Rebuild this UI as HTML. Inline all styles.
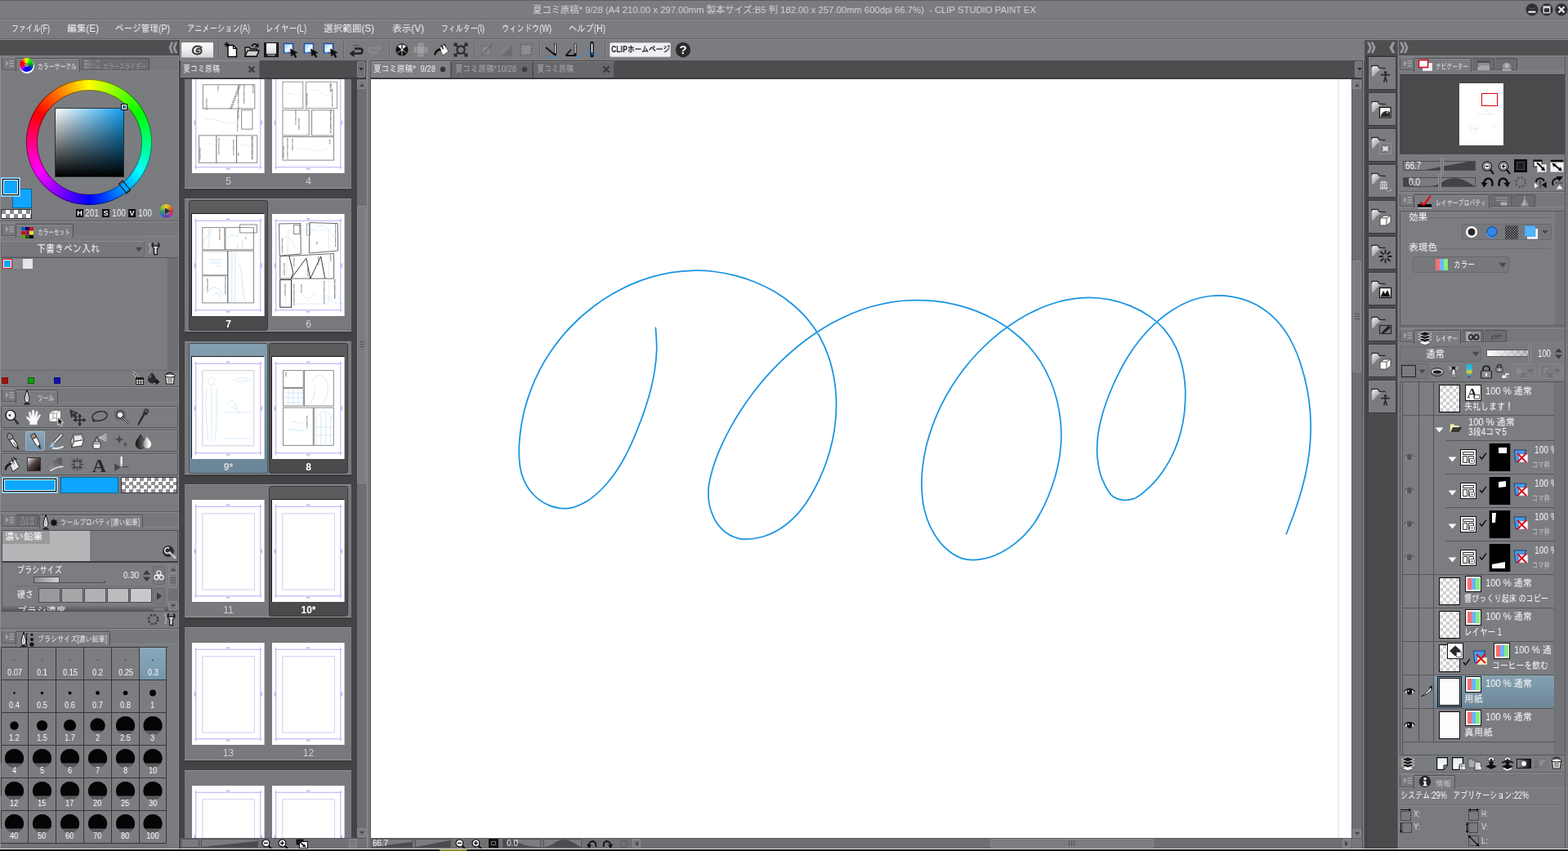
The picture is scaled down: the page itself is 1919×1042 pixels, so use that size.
<!DOCTYPE html>
<html lang="ja"><head><meta charset="utf-8"><title>CLIP STUDIO PAINT EX</title><style>
html,body{margin:0;padding:0;}
body{width:1919px;height:1042px;overflow:hidden;background:#7a7b7f;position:relative;font-family:"Liberation Sans","IPAGothic","Noto Sans CJK JP",sans-serif;}
body div,body svg{position:absolute;box-sizing:border-box;}
.t{white-space:nowrap;line-height:1;will-change:transform;}
.svgt{will-change:transform;}
.g{font-family:"Liberation Sans","IPAGothic","Noto Sans CJK JP",sans-serif;}
.n{font-family:"Liberation Sans","Noto Sans CJK JP",sans-serif;}
</style></head><body>
<div style="left:0px;top:0px;width:1919px;height:1px;background:#5d5e61;"></div>
<div style="left:0px;top:1px;width:1919px;height:23px;background:#7b7c80;"></div>
<div style="left:0px;top:23px;width:1919px;height:1px;background:#66676a;"></div>
<div style="left:0px;top:24px;width:1919px;height:1px;background:#8d8e92;"></div>
<div style="left:0px;top:25px;width:1919px;height:22px;background:#7b7c80;"></div>
<div style="left:0px;top:47px;width:1919px;height:1px;background:#636467;"></div>
<div style="left:0px;top:48px;width:1919px;height:1px;background:#8a8b8f;"></div>
<div style="left:0px;top:49px;width:1919px;height:25px;background:#7b7c80;"></div>
<div class="t n" style="left:652px;top:7px;font-size:11.5px;color:#d6d6d8;transform:scaleX(0.9810);transform-origin:0 0;">夏コミ原稿* 9/28 (A4 210.00 x 297.00mm 製本サイズ:B5 判 182.00 x 257.00mm 600dpi 66.7%)&nbsp; - CLIP STUDIO PAINT EX</div>
<svg style="left:1866px;top:3px;" width="18" height="18" viewBox="0 0 18 18"><circle cx="9" cy="8.8" r="7.5" fill="#2c2c2e" stroke="#58595c" stroke-width="0.8"/><rect x="4.5" y="10.4" width="9" height="2.4" fill="#e4e4e4"/><path d="M4.6 6.6 C7 7.6 11 7.6 13.4 6.6" stroke="#6a6b6e" stroke-width="0.8" fill="none"/></svg>
<svg style="left:1884px;top:3px;" width="18" height="18" viewBox="0 0 18 18"><circle cx="9" cy="8.8" r="7.5" fill="#2c2c2e" stroke="#58595c" stroke-width="0.8"/><rect x="5.2" y="5" width="7.6" height="7.6" fill="none" stroke="#d8d8d8" stroke-width="1.5"/><rect x="5.2" y="5" width="7.6" height="2.2" fill="#d8d8d8"/></svg>
<svg style="left:1902px;top:3px;" width="18" height="18" viewBox="0 0 18 18"><circle cx="9" cy="8.8" r="7.5" fill="#2c2c2e" stroke="#58595c" stroke-width="0.8"/><path d="M5.4 5.2 L12.6 12.4 M12.6 5.2 L5.4 12.4" stroke="#e0e0e0" stroke-width="2.2" stroke-linecap="butt"/></svg>
<div class="t g" style="left:14px;top:29px;font-size:12px;color:#f2f2f2;transform:scaleX(0.7422);transform-origin:0 0;">ファイル(F)</div>
<div class="t g" style="left:82px;top:29px;font-size:12px;color:#f2f2f2;transform:scaleX(0.9750);transform-origin:0 0;">編集(E)</div>
<div class="t g" style="left:141px;top:29px;font-size:12px;color:#f2f2f2;transform:scaleX(0.8816);transform-origin:0 0;">ページ管理(P)</div>
<div class="t g" style="left:229px;top:29px;font-size:12px;color:#f2f2f2;transform:scaleX(0.7700);transform-origin:0 0;">アニメーション(A)</div>
<div class="t g" style="left:325px;top:29px;font-size:12px;color:#f2f2f2;transform:scaleX(0.7978);transform-origin:0 0;">レイヤー(L)</div>
<div class="t g" style="left:396px;top:29px;font-size:12px;color:#f2f2f2;transform:scaleX(0.9688);transform-origin:0 0;">選択範囲(S)</div>
<div class="t g" style="left:480px;top:29px;font-size:12px;color:#f2f2f2;transform:scaleX(0.9750);transform-origin:0 0;">表示(V)</div>
<div class="t g" style="left:540px;top:29px;font-size:12px;color:#f2f2f2;transform:scaleX(0.7430);transform-origin:0 0;">フィルター(I)</div>
<div class="t g" style="left:614px;top:29px;font-size:12px;color:#f2f2f2;transform:scaleX(0.7690);transform-origin:0 0;">ウィンドウ(W)</div>
<div class="t g" style="left:696px;top:29px;font-size:12px;color:#f2f2f2;transform:scaleX(0.8543);transform-origin:0 0;">ヘルプ(H)</div>
<div style="left:0px;top:49px;width:218px;height:19px;background:#4e4e51;"></div>
<div style="left:218px;top:49px;width:1px;height:19px;background:#3c3c3e;"></div>
<div style="left:0px;top:68px;width:220px;height:1px;background:#8a8b8f;"></div>
<svg style="left:206px;top:51px;" width="13" height="15" viewBox="0 0 13 15"><path d="M6.4 0.5 H3.4 L0.4 7.5 L3.4 14 H6.4 L3.4 7.5 Z M11.4 0.5 H8.4 L5.4 7.5 L8.4 14 H11.4 L8.4 7.5 Z" fill="#97989c"/></svg>
<div style="left:219px;top:49px;width:1px;height:25px;background:#5a5b5e;"></div>
<div style="left:219px;top:74px;width:2px;height:965px;background:#444447;"></div>
<div style="left:220px;top:49px;width:1px;height:25px;background:#8e8f93;"></div>
<div style="left:222px;top:52px;width:39px;height:19px;background:linear-gradient(#fdfdfd,#ececee 55%,#d4d4d7);border-bottom:1px solid #a4a5a8;border-radius:1px;"></div>
<svg style="left:231px;top:53px;" width="22" height="16" viewBox="0 0 22 16"><path d="M15.5 5.2 C13 2.2 6.5 3 5 7.5 C3.8 11.5 8 14.5 12.5 13 C16.5 11.6 16.6 7.2 13 6.6 C10.2 6.2 8.6 8.6 9.8 10 C10.8 11 12.2 10.4 12.4 9.4" stroke="#3a3a3c" stroke-width="2" fill="none" stroke-linecap="round"/></svg>
<div style="left:267px;top:51px;width:1px;height:21px;background:#66676a;"></div>
<div style="left:268px;top:51px;width:1px;height:21px;background:#88898d;"></div>
<div style="left:420px;top:51px;width:1px;height:21px;background:#66676a;"></div>
<div style="left:421px;top:51px;width:1px;height:21px;background:#88898d;"></div>
<div style="left:476px;top:51px;width:1px;height:21px;background:#66676a;"></div>
<div style="left:477px;top:51px;width:1px;height:21px;background:#88898d;"></div>
<div style="left:580px;top:51px;width:1px;height:21px;background:#66676a;"></div>
<div style="left:581px;top:51px;width:1px;height:21px;background:#88898d;"></div>
<div style="left:660px;top:51px;width:1px;height:21px;background:#66676a;"></div>
<div style="left:661px;top:51px;width:1px;height:21px;background:#88898d;"></div>
<div style="left:740px;top:51px;width:1px;height:21px;background:#66676a;"></div>
<div style="left:741px;top:51px;width:1px;height:21px;background:#88898d;"></div>
<svg style="left:274px;top:51px;" width="18" height="20" viewBox="0 0 18 20"><path d="M5 4.5 H11.5 L15.5 8.5 V18.5 H5 Z" fill="#fff" stroke="#000" stroke-width="1.4"/><path d="M11.5 4.5 V8.5 H15.5" fill="none" stroke="#000" stroke-width="1.2"/><path d="M3.5 0.5 V6.5 M0.5 3.5 H6.5 M1.4 1.4 L5.6 5.6 M5.6 1.4 L1.4 5.6" stroke="#000" stroke-width="1"/></svg>
<svg style="left:298px;top:51px;" width="20" height="20" viewBox="0 0 20 20"><path d="M2 18 V7 H7 L8.5 9 H16 V18 Z" fill="#b8b8ba" stroke="#111" stroke-width="1.4"/><path d="M2 18 L5 11 H19 L16 18 Z" fill="#d0d0d2" stroke="#111" stroke-width="1.4"/><path d="M10 5.5 C11.5 2.5 15 2 17 4.5" stroke="#111" stroke-width="1.8" fill="none"/><path d="M18.6 1.8 V6.8 H13.6 Z" fill="#111"/></svg>
<svg style="left:322px;top:51px;" width="20" height="20" viewBox="0 0 20 20"><rect x="1.5" y="1.5" width="17" height="17" fill="#1c1c1e" stroke="#111" stroke-width="1"/><rect x="4" y="2" width="12" height="12.5" fill="#fff"/><rect x="4" y="2" width="12" height="12.5" fill="url(#svg1)"/><rect x="5.5" y="15.5" width="9" height="2" fill="#8a8a8c"/><defs><linearGradient id="svg1" x1="0" y1="0" x2="0" y2="1"><stop offset="0" stop-color="#fff"/><stop offset="1" stop-color="#d8dade"/></linearGradient></defs></svg>
<svg style="left:346px;top:51px;" width="20" height="20" viewBox="0 0 20 20"><rect x="1.5" y="2.5" width="11" height="11" fill="#dff" stroke="#1f4fb0" stroke-width="1.6"/><rect x="3" y="4" width="8" height="8" fill="url(#ex346)"/><rect x="3" y="12" width="3" height="1.6" fill="#9cf"/><path d="M9.5 9 L18 13.5 L14.6 14.6 L17 18.6 L15.4 19.5 L13 15.5 L10.6 18 Z" fill="#111" stroke="#111" stroke-width="0.6"/><defs><linearGradient id="ex346" x1="0" y1="0" x2="1" y2="1"><stop offset="0" stop-color="#8fd8e8"/><stop offset="0.6" stop-color="#f4fbff"/><stop offset="1" stop-color="#e6a0c0"/></linearGradient></defs></svg>
<svg style="left:371px;top:51px;" width="20" height="20" viewBox="0 0 20 20"><rect x="1.5" y="2.5" width="11" height="11" fill="#dff" stroke="#1f4fb0" stroke-width="1.6"/><rect x="3" y="4" width="8" height="8" fill="url(#ex371)"/><rect x="3" y="12" width="3" height="1.6" fill="#9cf"/><path d="M9.5 9 L18 13.5 L14.6 14.6 L17 18.6 L15.4 19.5 L13 15.5 L10.6 18 Z" fill="#111" stroke="#111" stroke-width="0.6"/><defs><linearGradient id="ex371" x1="0" y1="0" x2="1" y2="1"><stop offset="0" stop-color="#8fd8e8"/><stop offset="0.6" stop-color="#f4fbff"/><stop offset="1" stop-color="#e6a0c0"/></linearGradient></defs></svg>
<svg style="left:395px;top:51px;" width="20" height="20" viewBox="0 0 20 20"><rect x="1.5" y="2.5" width="11" height="11" fill="#dff" stroke="#1f4fb0" stroke-width="1.6"/><rect x="3" y="4" width="8" height="8" fill="url(#ex395)"/><rect x="3" y="12" width="3" height="1.6" fill="#9cf"/><path d="M9.5 9 L18 13.5 L14.6 14.6 L17 18.6 L15.4 19.5 L13 15.5 L10.6 18 Z" fill="#111" stroke="#111" stroke-width="0.6"/><defs><linearGradient id="ex395" x1="0" y1="0" x2="1" y2="1"><stop offset="0" stop-color="#8fd8e8"/><stop offset="0.6" stop-color="#f4fbff"/><stop offset="1" stop-color="#e6a0c0"/></linearGradient></defs></svg>
<svg style="left:426px;top:52px;" width="20" height="18" viewBox="0 0 20 18"><path d="M8 7.5 H14.5 C18.5 7.5 18.5 13.5 14.5 13.5 H6.5" stroke="#222" stroke-width="2.6" fill="none"/><path d="M1.5 13.5 L7.5 9 V18 Z" fill="#222"/><path d="M6 3.6 H13" stroke="#333" stroke-width="1" stroke-dasharray="1 1"/></svg>
<svg style="left:449px;top:52px;" width="20" height="18" viewBox="0 0 20 18"><path d="M12 7.5 H5.5 C1.5 7.5 1.5 13.5 5.5 13.5 H13.5" stroke="#88898c" stroke-width="2.6" fill="none" transform="translate(0,-1)"/><path d="M18.5 6.5 L12.5 2 V11 Z" fill="#88898c"/><path d="M5 15.6 H12" stroke="#88898c" stroke-width="1" stroke-dasharray="1 1"/></svg>
<svg style="left:483px;top:52px;" width="18" height="18" viewBox="0 0 18 18"><circle cx="9" cy="9" r="7.6" fill="#111"/><path d="M9 9 L3.4 5 A6.9 6.9 0 0 1 9 2.1 Z M9 9 L14.6 5 A6.9 6.9 0 0 0 9 2.1 Z" fill="#f4f4f4" stroke="#111" stroke-width="0.8"/><path d="M9 9 L3.2 12.8 M9 9 L14.8 12.8 M9 9 V16" stroke="#bbb" stroke-width="0.9"/><circle cx="9" cy="9" r="1.4" fill="#ddd"/></svg>
<svg style="left:506px;top:52px;" width="18" height="18" viewBox="0 0 18 18"><rect x="4.5" y="4.5" width="9" height="9" fill="#a0a1a4"/><rect x="5.5" y="0.5" width="7" height="3" fill="#97989b"/><rect x="5.5" y="14.5" width="7" height="3" fill="#97989b"/><rect x="0.5" y="5.5" width="3" height="7" fill="#97989b"/><rect x="14.5" y="5.5" width="3" height="7" fill="#97989b"/></svg>
<svg style="left:530px;top:51px;" width="20" height="20" viewBox="0 0 20 20"><path d="M7.5 7.5 L14 4 L19 12 L12 17 Z" fill="#f6f6f6" stroke="#333" stroke-width="0.8"/><path d="M1 16 C2 11 5 8.5 9 8 L10 10.5 C6 11 4 13 3 16.5 Z" fill="#111"/><path d="M10 4 L12.5 9" stroke="#222" stroke-width="1.6"/><path d="M13.5 2 L16 6" stroke="#222" stroke-width="1"/></svg>
<svg style="left:555px;top:52px;" width="18" height="18" viewBox="0 0 18 18"><circle cx="9" cy="9" r="4.6" fill="none" stroke="#2c2c2e" stroke-width="2.2"/><path d="M2.2 2.2 L6 6 M15.8 2.2 L12 6 M2.2 15.8 L6 12 M15.8 15.8 L12 12" stroke="#2c2c2e" stroke-width="2.2"/><path d="M0.5 0.5 h4.2 v2 h-2.2 v2.2 h-2 Z M17.5 0.5 h-4.2 v2 h2.2 v2.2 h2 Z M0.5 17.5 h4.2 v-2 h-2.2 v-2.2 h-2 Z M17.5 17.5 h-4.2 v-2 h2.2 v-2.2 h2 Z" fill="#2c2c2e"/></svg>
<svg style="left:587px;top:52px;" width="18" height="18" viewBox="0 0 18 18"><rect x="2.5" y="4.5" width="11" height="11" fill="#858689" stroke="#68696c" stroke-width="1" stroke-dasharray="2 1"/><path d="M2 16 L16 2" stroke="#68696c" stroke-width="1.4"/></svg>
<svg style="left:611px;top:52px;" width="18" height="18" viewBox="0 0 18 18"><rect x="2.5" y="3.5" width="13" height="13" fill="#7f8084" stroke="#737477" stroke-width="1"/><path d="M15.5 3.5 V16.5 H2.5 Z" fill="#6c6d70"/></svg>
<svg style="left:635px;top:52px;" width="18" height="18" viewBox="0 0 18 18"><rect x="2.5" y="2.5" width="13" height="13" fill="#8d8e91" stroke="#66676a" stroke-width="2" stroke-dasharray="2 1.4"/></svg>
<svg style="left:666px;top:51px;" width="20" height="20" viewBox="0 0 20 20"><path d="M2 7 L14 17" stroke="#111" stroke-width="1.8"/><path d="M13.5 2 V16.5" stroke="#111" stroke-width="3"/><path d="M13.5 2.5 V14" stroke="#fff" stroke-width="1.2"/><path d="M2 18.5 H16" stroke="#2d8fe0" stroke-width="1.6" stroke-dasharray="2 1.4"/></svg>
<svg style="left:690px;top:51px;" width="20" height="20" viewBox="0 0 20 20"><path d="M2.5 17 L9 9.5 M2.5 17 H15" stroke="#111" stroke-width="1.8" fill="none"/><path d="M14 2.5 V17" stroke="#111" stroke-width="3"/><path d="M14 3 V14" stroke="#fff" stroke-width="1.2"/><path d="M15 18.5 H18" stroke="#2d8fe0" stroke-width="1.6"/></svg>
<svg style="left:714px;top:51px;" width="20" height="20" viewBox="0 0 20 20"><path d="M10.5 2 V17" stroke="#111" stroke-width="4.4" stroke-linecap="round"/><path d="M10.5 3 V13" stroke="#fff" stroke-width="1.6" stroke-linecap="round"/><path d="M7 4 V18 M3 15.5 H17" stroke="#2d8fe0" stroke-width="1.4" stroke-dasharray="2 1.4"/></svg>
<div style="left:746px;top:52px;width:75px;height:18px;background:#eef0f5;border:1px solid #c9cbd0;border-radius:2px;"></div>
<div class="t g" style="left:748px;top:55px;font-size:10.5px;color:#1c1c1e;transform:scaleX(0.8283);transform-origin:0 0;font-weight:bold;">CLIPホームページ</div>
<svg class="svgt" style="left:826px;top:51px;" width="20" height="20" viewBox="0 0 20 20"><circle cx="10" cy="10" r="9.2" fill="#2b2b2d"/><text x="10" y="15.4" font-family="Liberation Sans,sans-serif" font-weight="bold" font-size="15" fill="#fff" text-anchor="middle">?</text></svg>
<div style="left:0px;top:69px;width:1px;height:970px;background:#909195;"></div>
<div style="left:218px;top:69px;width:1px;height:970px;background:#85868a;"></div>
<div style="left:1px;top:69px;width:217px;height:17px;background:#77787c;"></div>
<div style="left:1px;top:86px;width:217px;height:1px;background:#85868a;"></div>
<div style="left:2px;top:70px;width:17px;height:16px;background:#77787c;border-left:1px solid #5a5b5e;border-bottom:1px solid #5a5b5e;border-top:1px solid #8a8b8f;"></div>
<svg style="left:6px;top:73px;" width="12" height="10" viewBox="0 0 12 10"><path d="M1 1 L4.6 4.6 L1 8.4 Z" fill="#a2a3a6"/><path d="M5.5 1.8 H11 M5.5 4.8 H11 M5.5 7.8 H11" stroke="#a2a3a6" stroke-width="1.5"/></svg>
<div style="left:19px;top:71px;width:79px;height:17px;background:#7b7c80;border-top:1px solid #505154;border-left:1px solid #505154;border-right:1px solid #505154;border-radius:2px 2px 0 0;"></div>
<div style="left:20px;top:72px;width:77px;height:1px;background:#8c8d91;"></div>
<div class="t g" style="left:46px;top:77px;font-size:10px;color:#e9e9ea;transform:scaleX(0.6857);transform-origin:0 0;">カラーサークル</div>
<div style="left:99px;top:71px;width:84px;height:15px;background:#6c6d71;border-top:1px solid #505154;border-right:1px solid #505154;border-bottom:1px solid #58595c;border-radius:2px 2px 0 0;"></div>
<div class="t g" style="left:126px;top:77px;font-size:10px;color:#98999c;transform:scaleX(0.6625);transform-origin:0 0;">カラースライダー</div>
<div style="left:24px;top:72px;width:18px;height:18px;border-radius:50%;background:#fff;"></div>
<div style="left:24px;top:71px;width:17px;height:17px;border-radius:50%;background:conic-gradient(from 0deg,#ff0,#0f0,#0a0 22%,#00f 40%,#00f 55%,#c0f 65%,#f00 75%,#f00 85%,#fa0 93%,#ff0);"></div>
<div style="left:30px;top:77px;width:5px;height:5px;border-radius:50%;background:#8a8b90;"></div>
<div style="left:103px;top:73px;width:19px;height:3px;background:linear-gradient(90deg,#8e8f92,#6a6b6e 60%,#85868a);"></div>
<div style="left:103px;top:77px;width:19px;height:3px;background:linear-gradient(90deg,#8e8f92,#77787b 60%,#6a6b6e);"></div>
<div style="left:103px;top:81px;width:19px;height:3px;background:linear-gradient(90deg,#8e8f92,#707174 60%,#85868a);"></div>
<div style="left:32px;top:97px;width:154px;height:154px;border-radius:50%;background:conic-gradient(from 0deg,#ffff00,#00ff00 16.667%,#00ffff 33.333%,#0000ff 50%,#ff00ff 66.667%,#ff0000 83.333%,#ffff00);box-shadow:inset 0 0 0 1px rgba(0,0,0,.5);"></div>
<div style="left:45.5px;top:110.5px;width:127px;height:127px;border-radius:50%;background:#7b7c80;box-shadow:0 0 0 1px rgba(0,0,0,.5);"></div>
<div style="left:67px;top:132px;width:85px;height:85px;background:linear-gradient(to top,#000,rgba(0,0,0,0)),linear-gradient(to right,#fff,#12a0f0);border:1px solid #2a2f33;"></div>
<div style="left:148px;top:127px;width:8px;height:8px;border:1px solid #000;background:#356f8f;box-shadow:inset 0 0 0 1px #fff;"></div>
<svg style="left:140px;top:216px;" width="26" height="26" viewBox="0 0 26 26"><rect x="9.5" y="5.5" width="6" height="15" fill="none" stroke="#111" stroke-width="1" transform="rotate(-39 12.5 13)"/></svg>
<div style="left:15px;top:231px;width:24px;height:24px;background:#10a6ff;border:1px solid #0c6498;"></div>
<div style="left:1px;top:217px;width:24px;height:24px;background:#8ec9ee;"></div>
<div style="left:3px;top:219px;width:20px;height:20px;background:#10a6ff;border:1px solid #000;box-shadow:inset 0 0 0 1px #fff;"></div>
<div style="left:1px;top:256px;width:38px;height:12px;background:#fff;background-image:conic-gradient(#8a8b8e 25%,#fff 0 50%,#8a8b8e 0 75%,#fff 0);background-size:10px 10px;background-position:5px 0;border:1px solid #38383a;"></div>
<div style="left:93px;top:256px;width:9px;height:10px;background:#0a0a14;"></div>
<div class="t n" style="text-align:center;left:93px;top:256px;font-size:9px;color:#fff;width:9px;height:10px;line-height:10px;font-weight:bold;">H</div>
<div style="left:125px;top:256px;width:9px;height:10px;background:#0a0a14;"></div>
<div class="t n" style="text-align:center;left:125px;top:256px;font-size:9px;color:#fff;width:9px;height:10px;line-height:10px;font-weight:bold;">S</div>
<div style="left:157px;top:256px;width:9px;height:10px;background:#0a0a14;"></div>
<div class="t n" style="text-align:center;left:157px;top:256px;font-size:9px;color:#fff;width:9px;height:10px;line-height:10px;font-weight:bold;">V</div>
<div class="t g" style="left:104px;top:255px;font-size:12px;color:#f4f4f4;transform:scaleX(0.8487);transform-origin:0 0;">201</div>
<div class="t g" style="left:137px;top:255px;font-size:12px;color:#f4f4f4;transform:scaleX(0.8487);transform-origin:0 0;">100</div>
<div class="t g" style="left:169px;top:255px;font-size:12px;color:#f4f4f4;transform:scaleX(0.8487);transform-origin:0 0;">100</div>
<div style="left:195px;top:250px;width:17px;height:17px;border-radius:50%;background:conic-gradient(from 0deg,#e6d020,#e08020,#d03030,#b030a0,#6040c0,#3070c0,#30a060,#a0c030,#e6d020);"></div>
<div style="left:199.5px;top:254.5px;width:8px;height:8px;border-radius:50%;background:#7b7c80;"></div>
<svg style="left:200px;top:254px;" width="9" height="9" viewBox="0 0 9 9"><path d="M2 1 L8 4.5 L2 8 Z" fill="#2a2a2c"/></svg>
<div style="left:0px;top:270px;width:219px;height:1px;background:#5e5f62;"></div>
<div style="left:0px;top:271px;width:219px;height:1px;background:#8c8d91;"></div>
<div style="left:1px;top:272px;width:217px;height:17px;background:#77787c;"></div>
<div style="left:1px;top:289px;width:217px;height:1px;background:#85868a;"></div>
<div style="left:2px;top:273px;width:17px;height:16px;background:#77787c;border-left:1px solid #5a5b5e;border-bottom:1px solid #5a5b5e;border-top:1px solid #8a8b8f;"></div>
<svg style="left:6px;top:276px;" width="12" height="10" viewBox="0 0 12 10"><path d="M1 1 L4.6 4.6 L1 8.4 Z" fill="#a2a3a6"/><path d="M5.5 1.8 H11 M5.5 4.8 H11 M5.5 7.8 H11" stroke="#a2a3a6" stroke-width="1.5"/></svg>
<div style="left:19px;top:274px;width:71px;height:17px;background:#7b7c80;border-top:1px solid #505154;border-left:1px solid #505154;border-right:1px solid #505154;border-radius:2px 2px 0 0;"></div>
<div style="left:20px;top:275px;width:69px;height:1px;background:#8c8d91;"></div>
<div class="t g" style="left:46px;top:280px;font-size:10px;color:#e9e9ea;transform:scaleX(0.6667);transform-origin:0 0;">カラーセット</div>
<div style="left:26px;top:277.5px;width:4.6px;height:4.6px;background:#1050d0;"></div>
<div style="left:31px;top:277.5px;width:4.6px;height:4.6px;background:#080850;"></div>
<div style="left:36px;top:277.5px;width:4.6px;height:4.6px;background:#d01020;"></div>
<div style="left:26px;top:282.5px;width:4.6px;height:4.6px;background:#c01010;"></div>
<div style="left:31px;top:282.5px;width:4.6px;height:4.6px;background:#e02020;"></div>
<div style="left:36px;top:282.5px;width:4.6px;height:4.6px;background:#f0e020;"></div>
<div style="left:26px;top:287.5px;width:4.6px;height:4.6px;background:#60a010;"></div>
<div style="left:31px;top:287.5px;width:4.6px;height:4.6px;background:#205010;"></div>
<div style="left:36px;top:287.5px;width:4.6px;height:4.6px;background:#080808;"></div>
<div style="left:30.5px;top:282px;width:5.6px;height:5.6px;background:#3030a0;border:1px solid #f02020;"></div>
<div style="left:1px;top:295px;width:176px;height:20px;background:#77787c;border:1px solid #68696c;border-radius:3px;border-top-color:#8a8b8f;"></div>
<div class="t g" style="left:45px;top:298px;font-size:13px;color:#fafafa;transform:scaleX(0.8462);transform-origin:0 0;">下書きペン入れ</div>
<svg style="left:165px;top:302px;" width="10" height="7" viewBox="0 0 10 7"><path d="M0.5 0.8 H9.5 L5 6.2 Z" fill="#47484b"/></svg>
<svg style="left:180px;top:296px;" width="18" height="18" viewBox="0 0 18 18"><path d="M2 2 C5 4 5 9 3 14" stroke="#a8a9ac" stroke-width="2.4" fill="none" opacity="0.8"/><path d="M7.2 1.5 C5.2 3.5 5.6 7 8.6 8.2 V15.5 H12.4 V8.2 C15.4 7 15.8 3.5 13.8 1.5 V5.4 H11.8 L10.5 4.4 L9.2 5.4 H7.2 Z" fill="#d8d8da" stroke="#1e1e20" stroke-width="1.3" stroke-linejoin="round"/></svg>
<div style="left:1px;top:315px;width:217px;height:1px;background:#56575a;"></div>
<div style="left:1px;top:316px;width:204px;height:137px;background:#7c7d81;"></div>
<div style="left:205px;top:316px;width:13px;height:137px;background:#6e6f73;"></div>
<div style="left:1px;top:453px;width:217px;height:1px;background:#6a6b6e;"></div>
<div style="left:3px;top:317px;width:12px;height:12px;background:#14a6fc;border:1px solid #e01818;box-shadow:inset 0 0 0 1px #fff;"></div>
<div style="left:16px;top:317px;width:12px;height:12px;background:#8c8d90;"></div>
<div style="left:28px;top:317px;width:12px;height:12px;background:#e6e6e8;"></div>
<div style="left:2px;top:462px;width:8px;height:8px;background:#a01010;border:1px solid #801010;"></div>
<div style="left:34px;top:462px;width:8px;height:8px;background:#10a010;border:1px solid #0a600a;"></div>
<div style="left:66px;top:462px;width:8px;height:8px;background:#1010b0;border:1px solid #0a0a80;"></div>
<svg style="left:160px;top:455px;" width="16" height="16" viewBox="0 0 16 16"><path d="M2 1 C6 1 6 5 8 7" stroke="#fff" stroke-width="2.6" fill="none"/><path d="M2 1 C6 1 6 5 8 7" stroke="#111" stroke-width="1.2" fill="none"/><rect x="6.5" y="7.5" width="9" height="8" fill="#e8e8e8" stroke="#222"/><rect x="6.5" y="7.5" width="9" height="2.6" fill="#222"/><path d="M9.5 10 V15.5 M12.5 10 V15.5 M6.5 12.8 H15.5" stroke="#222" stroke-width="0.9"/></svg>
<svg style="left:180px;top:455px;" width="16" height="16" viewBox="0 0 16 16"><path d="M6 1 C9 5 11 7 11 9.5 A5 5 0 0 1 1 9.5 C1 7 3 5 6 1 Z" fill="#2a2a2c"/><path d="M3.4 8 C3.4 6.8 4.4 5.6 5.4 4.6" stroke="#888" stroke-width="1.2" fill="none"/><path d="M12 9.5 V15.5 M9 12.5 H15" stroke="#111" stroke-width="2.2"/></svg>
<svg style="left:200px;top:455px;" width="16" height="16" viewBox="0 0 16 16"><path d="M2.5 5.5 H13.5 L12.3 15 H3.7 Z" fill="#f0f0f0" stroke="#222" stroke-width="1.1"/><ellipse cx="8" cy="5" rx="6" ry="2" fill="#f4f4f4" stroke="#222" stroke-width="1.1"/><path d="M4 4 C4 0 12 0 12 4" stroke="#222" stroke-width="1.1" fill="none"/><path d="M6 8 V13.6 M8 8 V13.6 M10 8 V13.6" stroke="#555" stroke-width="1"/></svg>
<div style="left:0px;top:473px;width:219px;height:1px;background:#5e5f62;"></div>
<div style="left:0px;top:474px;width:219px;height:1px;background:#8c8d91;"></div>
<div style="left:1px;top:475px;width:217px;height:17px;background:#77787c;"></div>
<div style="left:1px;top:492px;width:217px;height:1px;background:#85868a;"></div>
<div style="left:2px;top:476px;width:17px;height:16px;background:#77787c;border-left:1px solid #5a5b5e;border-bottom:1px solid #5a5b5e;border-top:1px solid #8a8b8f;"></div>
<svg style="left:6px;top:479px;" width="12" height="10" viewBox="0 0 12 10"><path d="M1 1 L4.6 4.6 L1 8.4 Z" fill="#a2a3a6"/><path d="M5.5 1.8 H11 M5.5 4.8 H11 M5.5 7.8 H11" stroke="#a2a3a6" stroke-width="1.5"/></svg>
<div style="left:19px;top:477px;width:52px;height:17px;background:#7b7c80;border-top:1px solid #505154;border-left:1px solid #505154;border-right:1px solid #505154;border-radius:2px 2px 0 0;"></div>
<div style="left:20px;top:478px;width:50px;height:1px;background:#8c8d91;"></div>
<div class="t g" style="left:46px;top:483px;font-size:10px;color:#e9e9ea;transform:scaleX(0.6667);transform-origin:0 0;">ツール</div>
<svg style="left:28px;top:476px;" width="10" height="20" viewBox="0 0 10 20"><path d="M5 1 L7.6 10 C8.4 13 7.4 15 6.2 16.5 H3.8 C2.6 15 1.6 13 2.4 10 Z" fill="#e8e8ea" stroke="#1a1a1c" stroke-width="1"/><path d="M5 1 L5.8 4 H4.2 Z" fill="#111"/><path d="M5 8 V14" stroke="#777" stroke-width="0.8"/><path d="M1.5 18.6 H8.5" stroke="#111" stroke-width="1.6"/><path d="M3.8 16.5 H6.2 V18 H3.8 Z" fill="#333"/></svg>
<div style="left:1px;top:497px;width:217px;height:27px;background:#7c7d81;border:1px solid #5a5b5e;border-radius:2px;"></div>
<div style="left:2px;top:498px;width:215px;height:1px;background:#8a8b8f;"></div>
<div style="left:1px;top:526px;width:217px;height:27px;background:#7c7d81;border:1px solid #5a5b5e;border-radius:2px;"></div>
<div style="left:2px;top:527px;width:215px;height:1px;background:#8a8b8f;"></div>
<div style="left:1px;top:555px;width:217px;height:27px;background:#7c7d81;border:1px solid #5a5b5e;border-radius:2px;"></div>
<div style="left:2px;top:556px;width:215px;height:1px;background:#8a8b8f;"></div>
<div style="left:31px;top:528px;width:24px;height:24px;background:linear-gradient(#8aa7bb,#7594aa);border:1px solid #9ab6c8;border-radius:2px;"></div>
<svg style="left:4.0px;top:500px;" width="22" height="22" viewBox="0 0 22 22"><circle cx="9" cy="8.5" r="6" fill="#f2f2f2" stroke="#222" stroke-width="1.6"/><path d="M13.4 13 L18 18.6" stroke="#333" stroke-width="2.6" stroke-linecap="round"/><path d="M6 8.5 L9 6.8 V10.2 Z" fill="#222"/><path d="M5 5 C7 3 10 3 12 5" stroke="#fff" stroke-width="1" fill="none"/></svg>
<svg style="left:30.8px;top:500px;" width="22" height="22" viewBox="0 0 22 22"><path d="M5.5 20 V16 C3 14 1.5 12 1 10.4 C2.4 9.6 4 11 5.6 12.6 L4 5 C5 4 6.2 4.6 6.6 5.6 L8 10 L8.2 2.4 C9.4 1.6 10.6 2 10.8 3 L11.4 10 L13.4 3.6 C14.6 3.2 15.6 4 15.4 5 L14 11.4 L17.4 7.4 C18.6 7.4 19 8.6 18.4 9.4 C16.6 12 15.6 14 14.4 16.4 V20 Z" fill="#fafafa" stroke="#c8c8ca" stroke-width="0.6"/></svg>
<svg style="left:57.6px;top:500px;" width="22" height="22" viewBox="0 0 22 22"><path d="M2 6 L7 2.4 H16.4 V12.4 L11.4 16.4 H2 Z" fill="#fafafa" stroke="#6a6a6c" stroke-width="1"/><path d="M2 6 H11.4 V16.4 M11.4 6 L16.4 2.4 M7 2.4 V12 L2 16 M7 12 H16" fill="none" stroke="#8a8a8c" stroke-width="0.8"/><path d="M12.6 11 L19.6 17.4 L16.8 17.6 L18 20.6 L16.2 21.4 L15 18.4 L13 20.4 Z" fill="#0c0c0e" stroke="#fff" stroke-width="0.9"/></svg>
<svg style="left:84.4px;top:500px;" width="22" height="22" viewBox="0 0 22 22"><path d="M1.6 1.6 L11.6 6 L8 7.6 L10.4 11.2 L8.2 12.6 L5.8 9 L3.4 11.6 Z" fill="#2e2e30" stroke="#2e2e30" stroke-width="0.6"/><path d="M4 4.4 L8 6.2 M4.4 6.6 L6.2 7.6" stroke="#9a9b9e" stroke-width="0.7"/><path d="M13.6 8.6 V20.4 M7.6 14.4 H19.6" stroke="#2a2a2c" stroke-width="1.8"/><path d="M13.6 6.4 L16.2 10.2 H11 Z M13.6 22 L16.2 18.4 H11 Z M5.4 14.4 L9.2 11.8 V17 Z M21.6 14.4 L17.8 11.8 V17 Z" fill="#2a2a2c"/></svg>
<svg style="left:111.2px;top:500px;" width="22" height="22" viewBox="0 0 22 22"><ellipse cx="11" cy="9.5" rx="9.4" ry="5.6" fill="none" stroke="#2a2a2c" stroke-width="1.4" transform="rotate(-12 11 9.5)"/><path d="M3 13 C2 15 3 16.6 5 16 " stroke="#2a2a2c" stroke-width="1.2" fill="none"/></svg>
<svg style="left:138.0px;top:500px;" width="22" height="22" viewBox="0 0 22 22"><path d="M9 1 V15 M2 8 H16 M4 3 L14 13 M14 3 L4 13 M6 1.6 L12 14.4 M12 1.6 L6 14.4 M2.6 5 L15.4 11 M15.4 5 L2.6 11" stroke="#333" stroke-width="0.9"/><circle cx="9" cy="8" r="3" fill="#f4f4f4"/><path d="M11.6 10.6 L19 18" stroke="#333" stroke-width="2.4"/><path d="M12 11 L18.6 17.6" stroke="#e8e8e8" stroke-width="0.9"/></svg>
<svg style="left:164.8px;top:500px;" width="22" height="22" viewBox="0 0 22 22"><circle cx="14" cy="3.6" r="2.8" fill="#555" stroke="#222" stroke-width="0.8"/><path d="M13 6 L5 19 L4 20.6 L4.4 18.6 L11.4 5.6" fill="#ddd" stroke="#222" stroke-width="1.2"/><path d="M10.4 5 L15 7.6" stroke="#222" stroke-width="1.8"/></svg>
<svg style="left:4.0px;top:529px;" width="22" height="22" viewBox="0 0 22 22"><path d="M5.4 2.4 C7.4 1 10 1.8 11 3.6 L12 7.6 L7.4 10 L4.6 6.4 Z" fill="#8e8f92" stroke="#2a2a2c" stroke-width="1"/><path d="M7.4 10 L12 7.6 L16.6 14 L18.6 21 L12.6 17.4 Z" fill="#f8f8f8" stroke="#2a2a2c" stroke-width="1.1"/><path d="M12.4 12.6 L17.6 19.6" stroke="#2a2a2c" stroke-width="1"/><path d="M16.6 18.6 L18.6 21 L17.8 17.6 Z" fill="#111"/></svg>
<svg style="left:30.8px;top:529px;" width="22" height="22" viewBox="0 0 22 22"><path d="M6.4 3.4 L11.4 1.6 L14 6.4 L8.6 8.6 Z" fill="#8a6a50" stroke="#2a2a2c" stroke-width="1"/><path d="M7.6 3.4 L10 8 M9.6 2.6 L12 7.2" stroke="#d8c0a0" stroke-width="0.9"/><path d="M8.6 8.6 L14 6.4 L17.4 13.6 L18.4 20.6 L13.4 16 Z" fill="#fafafa" stroke="#2a2a2c" stroke-width="1"/><path d="M15.6 16.6 L18.4 20.8 L17.8 15.8 Z" fill="#111"/></svg>
<svg style="left:57.6px;top:529px;" width="22" height="22" viewBox="0 0 22 22"><path d="M17 1.6 L19.4 3.6 L9 14.6 L6.6 12.6 Z" fill="#d8d8da" stroke="#333" stroke-width="1"/><path d="M6.6 12.6 L9 14.6 C8 18 5 19.6 1.6 18.6 C3.6 17 3.6 14.6 6.6 12.6 Z" fill="#9fc6e4" stroke="#5a8ab0" stroke-width="0.8"/><path d="M6 19.6 C11 20.6 16 19.6 19.6 17.6" stroke="#e6eef4" stroke-width="2.2" fill="none" opacity="0.9"/></svg>
<svg style="left:84.4px;top:529px;" width="22" height="22" viewBox="0 0 22 22"><path d="M5.6 3.6 L16.6 2 L18.6 9.6 L6.6 11.6 Z" fill="#e6e6e8" stroke="#444" stroke-width="1"/><path d="M6.6 11.6 L18.6 9.6 L16 17 L3.6 18.6 Z" fill="#fafafa" stroke="#444" stroke-width="1"/><path d="M5.6 3.6 L6.6 11.6 L3.6 18.6 L2.6 10.6 Z" fill="#c0c0c2" stroke="#444" stroke-width="1"/><path d="M8 4.4 L16 3.4 L17 8" fill="none" stroke="#888" stroke-width="1.4"/></svg>
<svg style="left:111.2px;top:529px;" width="22" height="22" viewBox="0 0 22 22"><path d="M3 13 C3 10.6 12 10.6 12 13 V18.6 C12 21 3 21 3 18.6 Z" fill="#f2f2f2" stroke="#333" stroke-width="1"/><ellipse cx="7.5" cy="13" rx="4.5" ry="1.6" fill="#ddd" stroke="#333" stroke-width="0.8"/><rect x="5.6" y="8" width="3.8" height="4" fill="#aaa" stroke="#333" stroke-width="0.8"/><rect x="6.4" y="5" width="2.2" height="3" fill="#555"/><path d="M10 7 L19.6 1.6 L19.6 12 Z" fill="#a2a3a6" opacity="0.85"/><path d="M10 7 L19 2.6 M10 7 L19.6 7 M10 7 L19 11" stroke="#cfcfd2" stroke-width="0.8"/></svg>
<svg style="left:138.0px;top:529px;" width="22" height="22" viewBox="0 0 22 22"><path d="M8 2 C8.4 7 9.6 8.6 15 9 C9.6 9.4 8.4 11 8 16 C7.6 11 6.4 9.4 1 9 C6.4 8.6 7.6 7 8 2 Z" fill="#4a4a4c"/><path d="M15.4 11 C15.6 14 16.4 14.8 19.6 15 C16.4 15.2 15.6 16 15.4 19.6 C15.2 16 14.4 15.2 11.2 15 C14.4 14.8 15.2 14 15.4 11 Z" fill="#4a4a4c"/></svg>
<svg style="left:164.8px;top:529px;" width="22" height="22" viewBox="0 0 22 22"><path d="M7 3 C10 8 13 11 13 14.6 A6 6 0 0 1 1 14.6 C1 11 4 8 7 3 Z" fill="url(#bl1)" stroke="#222" stroke-width="0.8"/><path d="M14.6 4.6 C17 9 20.6 12 20.6 15 A5.4 5.4 0 0 1 9.8 15 C9.8 12 12.6 9 14.6 4.6 Z" fill="url(#bl2)" stroke="#555" stroke-width="0.6"/><defs><linearGradient id="bl1" x1="0" x2="1"><stop offset="0" stop-color="#111"/><stop offset="1" stop-color="#777"/></linearGradient><linearGradient id="bl2" x1="0" x2="1"><stop offset="0" stop-color="#888"/><stop offset="0.7" stop-color="#fff"/></linearGradient></defs></svg>
<svg style="left:4.0px;top:558px;" width="22" height="22" viewBox="0 0 22 22"><path d="M7 8 L14.6 4.6 L19.6 14 L11.6 19.6 Z" fill="#e4e4e6" stroke="#333" stroke-width="1"/><path d="M8.6 9.6 L14 7.2 L17.6 13.6" fill="none" stroke="#fff" stroke-width="1.2"/><path d="M1.6 17 C2 12 5 9 9.6 8.4 L10.6 10.6 C6.6 11.6 4.6 14 3.6 18 Z" fill="#1a1a1c"/><path d="M10 3 L12.6 8.6 M12 2 L16.6 4.6" stroke="#333" stroke-width="1.6"/><circle cx="12.6" cy="9" r="1.2" fill="#fff" stroke="#333" stroke-width="0.6"/></svg>
<svg style="left:30.8px;top:558px;" width="22" height="22" viewBox="0 0 22 22"><rect x="2.5" y="2.5" width="16" height="16" fill="url(#gr1)" stroke="#333" stroke-width="1"/><defs><linearGradient id="gr1" x1="0" y1="0" x2="1" y2="1"><stop offset="0" stop-color="#fff"/><stop offset="0.45" stop-color="#544"/><stop offset="1" stop-color="#000"/></linearGradient></defs></svg>
<svg style="left:57.6px;top:558px;" width="22" height="22" viewBox="0 0 22 22"><path d="M2.4 17.6 C3 9 8 3.6 17.6 2.6 C17.6 6 18 9 19 11.6 C10 12 5 14 2.4 17.6 Z" fill="url(#fg1)"/><path d="M3.6 18.6 C8 15 13 13.6 19.4 13.2" stroke="#e8e8ea" stroke-width="1.6" fill="none"/><defs><linearGradient id="fg1" x1="0" y1="1" x2="1" y2="0"><stop offset="0" stop-color="#9a9b9e"/><stop offset="0.6" stop-color="#66676a"/><stop offset="1" stop-color="#505154"/></linearGradient></defs></svg>
<svg style="left:84.4px;top:558px;" width="22" height="22" viewBox="0 0 22 22"><path d="M10.5 1.6 L11.6 7.6 H9.4 Z M10.5 19.4 L11.6 13.4 H9.4 Z M1.6 10.5 L7.6 9.4 V11.6 Z M19.4 10.5 L13.4 9.4 V11.6 Z M3.6 3.6 L8.8 7.2 L7.2 8.8 Z M17.4 3.6 L12.2 7.2 L13.8 8.8 Z M3.6 17.4 L8.8 13.8 L7.2 12.2 Z M17.4 17.4 L12.2 13.8 L13.8 12.2 Z M6.6 1.8 L9 7.4 L8 7.8 Z M14.4 1.8 L12 7.4 L13 7.8 Z M6.6 19.2 L9 13.6 L8 13.2 Z M14.4 19.2 L12 13.6 L13 13.2 Z M1.8 6.6 L7.4 9 L7.8 8 Z M19.2 6.6 L13.6 9 L13.2 8 Z M1.8 14.4 L7.4 12 L7.8 13 Z M19.2 14.4 L13.6 12 L13.2 13 Z" fill="#343436"/></svg>
<svg class="svgt" style="left:111.2px;top:558px;" width="22" height="22" viewBox="0 0 22 22"><text x="10.5" y="19.6" font-family="Liberation Serif,serif" font-size="24" font-weight="bold" fill="#2a2a2c" text-anchor="middle">A</text></svg>
<svg style="left:138.0px;top:558px;" width="22" height="22" viewBox="0 0 22 22"><path d="M2 9.6 L10 14 L2 19 Z" fill="#47484b"/><path d="M10.6 1 V13.6" stroke="#fff" stroke-width="2.2"/><path d="M9.6 13.6 H19.6" stroke="#47484b" stroke-width="1.2"/><path d="M10.6 11 V14" stroke="#aaa" stroke-width="1.6"/></svg>
<div style="left:2px;top:584px;width:69px;height:20px;background:#8ec9ee;"></div>
<div style="left:4px;top:586px;width:65px;height:16px;background:#0ea6ff;border:1px solid #000;box-shadow:inset 0 0 0 1px #fff;"></div>
<div style="left:74px;top:584px;width:71px;height:20px;background:#0ea6ff;border:1px solid #0c6498;"></div>
<div style="left:148px;top:584px;width:69px;height:20px;background:#fff;background-image:conic-gradient(#8e8f92 25%,#fff 0 50%,#8e8f92 0 75%,#fff 0);background-size:9px 9px;background-position:0 0;border:1px solid #38383a;"></div>
<div style="left:0px;top:626px;width:219px;height:1px;background:#5e5f62;"></div>
<div style="left:0px;top:627px;width:219px;height:1px;background:#8c8d91;"></div>
<div style="left:1px;top:628px;width:217px;height:17px;background:#77787c;"></div>
<div style="left:1px;top:645px;width:217px;height:1px;background:#85868a;"></div>
<div style="left:2px;top:629px;width:17px;height:16px;background:#77787c;border-left:1px solid #5a5b5e;border-bottom:1px solid #5a5b5e;border-top:1px solid #8a8b8f;"></div>
<svg style="left:6px;top:632px;" width="12" height="10" viewBox="0 0 12 10"><path d="M1 1 L4.6 4.6 L1 8.4 Z" fill="#a2a3a6"/><path d="M5.5 1.8 H11 M5.5 4.8 H11 M5.5 7.8 H11" stroke="#a2a3a6" stroke-width="1.5"/></svg>
<div style="left:19px;top:630px;width:28px;height:15px;background:#6c6d71;border-top:1px solid #505154;border-right:1px solid #505154;border-bottom:1px solid #58595c;border-radius:2px 2px 0 0;"></div>
<div style="left:48px;top:630px;width:127px;height:17px;background:#7b7c80;border-top:1px solid #505154;border-left:1px solid #505154;border-right:1px solid #505154;border-radius:2px 2px 0 0;"></div>
<div style="left:49px;top:631px;width:125px;height:1px;background:#8c8d91;"></div>
<div class="t g" style="left:74px;top:634.5px;font-size:10px;color:#e9e9ea;transform:scaleX(0.7725);transform-origin:0 0;">ツールプロパティ[濃い鉛筆]</div>
<svg style="left:24px;top:631px;" width="20" height="14" viewBox="0 0 20 14"><path d="M4 1 L6 8 V12 H2 V8 Z" fill="none" stroke="#8c8d90" stroke-width="1"/><path d="M9 2 V12 M9 4 H11 M9 10 H11" stroke="#8c8d90" stroke-width="1"/><rect x="13.5" y="2.5" width="3" height="3" fill="none" stroke="#8c8d90"/><rect x="13.5" y="8.5" width="3" height="3" fill="none" stroke="#8c8d90"/></svg>
<svg style="left:51px;top:629px;" width="10" height="20" viewBox="0 0 10 20"><path d="M5 1 L7.6 10 C8.4 13 7.4 15 6.2 16.5 H3.8 C2.6 15 1.6 13 2.4 10 Z" fill="#e8e8ea" stroke="#1a1a1c" stroke-width="1"/><path d="M5 1 L5.8 4 H4.2 Z" fill="#111"/><path d="M5 8 V14" stroke="#777" stroke-width="0.8"/><path d="M1.5 18.6 H8.5" stroke="#111" stroke-width="1.6"/><path d="M3.8 16.5 H6.2 V18 H3.8 Z" fill="#333"/></svg>
<svg style="left:61px;top:635px;" width="10" height="10" viewBox="0 0 10 10"><circle cx="5" cy="5" r="3" fill="#111"/><path d="M5 0.6 V9.4 M0.6 5 H9.4 M1.8 1.8 L8.2 8.2 M8.2 1.8 L1.8 8.2" stroke="#111" stroke-width="1.5"/></svg>
<div style="left:2px;top:649px;width:216px;height:40px;background:#7c7d81;border:1px solid #505154;border-bottom:2px solid #3e3e41;"></div>
<div style="left:3px;top:650px;width:107px;height:37px;background:#b6b6b8;"></div>
<div style="left:3px;top:650px;width:58px;height:16px;background:#9b9b9e;"></div>
<div class="t g" style="left:6px;top:651px;font-size:12px;color:#ffffff;transform:scaleX(0.9583);transform-origin:0 0;">濃い鉛筆</div>
<svg style="left:198px;top:667px;" width="18" height="20" viewBox="0 0 18 20"><circle cx="8" cy="8" r="7" fill="#2e2e30"/><circle cx="7" cy="7" r="3.4" fill="none" stroke="#eee" stroke-width="1.6" stroke-dasharray="16 6" transform="rotate(30 7 7)"/><path d="M9.6 9.6 L16 15.6" stroke="#eee" stroke-width="2.6" stroke-linecap="round"/><path d="M9.6 9.6 L16 15.6" stroke="#555" stroke-width="0.8"/></svg>
<div style="left:2px;top:690px;width:204px;height:58px;background:#7c7d81;border-left:1px solid #5a5b5e;"></div>
<div style="left:2px;top:741px;width:204px;height:7px;background:linear-gradient(rgba(90,91,94,0),rgba(80,81,84,.9));"></div>
<div class="t g" style="left:21px;top:692px;font-size:12px;color:#fcfcfc;transform:scaleX(0.7639);transform-origin:0 0;">ブラシサイズ</div>
<div class="t g" style="left:151px;top:699px;font-size:11px;color:#fafafa;transform:scaleX(0.8869);transform-origin:0 0;">0.30</div>
<svg style="left:174px;top:697px;" width="11" height="16" viewBox="0 0 11 16"><path d="M1 6.6 H10 L5.5 1 Z M1 9.4 H10 L5.5 15 Z" fill="#3a3a3c"/></svg>
<div style="left:187px;top:693px;width:15px;height:23px;background:#77787c;border:1px solid #68696c;border-radius:3px;"></div>
<svg style="left:188px;top:698px;" width="13" height="13" viewBox="0 0 13 13"><circle cx="6.5" cy="3.6" r="2.6" fill="none" stroke="#fff" stroke-width="1.1"/><circle cx="3.4" cy="9" r="2.6" fill="none" stroke="#fff" stroke-width="1.1"/><circle cx="9.6" cy="9" r="2.6" fill="none" stroke="#fff" stroke-width="1.1"/></svg>
<div style="left:41px;top:706px;width:32px;height:8px;background:linear-gradient(90deg,#8a8b8e,#d4d4d6);border:1px solid #505154;"></div>
<div style="left:41px;top:713px;width:88px;height:1px;background:#505154;"></div>
<div style="left:128px;top:711px;width:1px;height:3px;background:#505154;"></div>
<div style="left:16px;top:717px;width:172px;height:1px;background:#6e6f73;"></div>
<div class="t g" style="left:21px;top:722px;font-size:12px;color:#fcfcfc;transform:scaleX(0.8333);transform-origin:0 0;">硬さ</div>
<div style="left:47px;top:720px;width:27px;height:18px;background:#9a9a9d;border:1px solid #4e4f52;"></div>
<div style="left:75px;top:720px;width:27px;height:18px;background:#a6a6a9;border:1px solid #4e4f52;"></div>
<div style="left:103px;top:720px;width:27px;height:18px;background:#b1b1b4;border:1px solid #4e4f52;"></div>
<div style="left:131px;top:720px;width:27px;height:18px;background:#bcbcbf;border:1px solid #4e4f52;"></div>
<div style="left:159px;top:720px;width:27px;height:18px;background:#c8c8cb;border:1px solid #4e4f52;"></div>
<div style="left:187px;top:720px;width:15px;height:20px;background:#77787c;border:1px solid #68696c;border-radius:3px;"></div>
<svg style="left:191px;top:725px;" width="8" height="10" viewBox="0 0 8 10"><path d="M1 0.6 V9.4 L7 5 Z" fill="#3a3a3c"/></svg>
<div class="t g" style="left:21px;top:742px;height:6px;overflow:hidden;font-size:12px;color:#f4f4f4;position:absolute;">ブラシ濃度</div>
<div style="left:187px;top:743px;width:15px;height:6px;background:#77787c;border:1px solid #68696c;border-radius:3px 3px 0 0;border-bottom:0;"></div>
<div style="left:206px;top:690px;width:12px;height:58px;background:#707175;"></div>
<div style="left:206px;top:691px;width:11px;height:11px;background:#7b7c80;border:1px solid #8b8c90;border-radius:1px;"></div>
<svg style="left:207.5px;top:694px;" width="8" height="6" viewBox="0 0 8 6"><path d="M1 5 H7 L4 1.4 Z" fill="#47484b"/></svg>
<div style="left:206px;top:736px;width:11px;height:11px;background:#7b7c80;border:1px solid #8b8c90;border-radius:1px;"></div>
<svg style="left:207.5px;top:739px;" width="8" height="6" viewBox="0 0 8 6"><path d="M1 1 H7 L4 4.6 Z" fill="#47484b"/></svg>
<div style="left:206px;top:702px;width:11px;height:18px;background:#7b7c80;border:1px solid #8b8c90;border-radius:2px;"></div>
<svg style="left:207.5px;top:706px;" width="8" height="9" viewBox="0 0 8 9"><path d="M1 1.5 H7 M1 4.5 H7 M1 7.5 H7" stroke="#56575a" stroke-width="1.2"/></svg>
<div style="left:1px;top:748px;width:217px;height:1px;background:#56575a;"></div>
<svg style="left:179px;top:750px;" width="17" height="17" viewBox="0 0 17 17"><circle cx="8.5" cy="8.5" r="5.6" fill="none" stroke="#3e3e41" stroke-width="2.6" stroke-dasharray="2.6 1.8"/></svg>
<svg style="left:199px;top:750px;" width="18" height="18" viewBox="0 0 18 18"><path d="M2 2 C5 4 5 9 3 14" stroke="#a8a9ac" stroke-width="2.4" fill="none" opacity="0.8"/><path d="M7.2 1.5 C5.2 3.5 5.6 7 8.6 8.2 V15.5 H12.4 V8.2 C15.4 7 15.8 3.5 13.8 1.5 V5.4 H11.8 L10.5 4.4 L9.2 5.4 H7.2 Z" fill="#d8d8da" stroke="#1e1e20" stroke-width="1.3" stroke-linejoin="round"/></svg>
<div style="left:0px;top:769px;width:219px;height:1px;background:#5e5f62;"></div>
<div style="left:0px;top:770px;width:219px;height:1px;background:#8c8d91;"></div>
<div style="left:1px;top:771px;width:217px;height:17px;background:#77787c;"></div>
<div style="left:1px;top:788px;width:217px;height:1px;background:#85868a;"></div>
<div style="left:2px;top:772px;width:17px;height:16px;background:#77787c;border-left:1px solid #5a5b5e;border-bottom:1px solid #5a5b5e;border-top:1px solid #8a8b8f;"></div>
<svg style="left:6px;top:775px;" width="12" height="10" viewBox="0 0 12 10"><path d="M1 1 L4.6 4.6 L1 8.4 Z" fill="#a2a3a6"/><path d="M5.5 1.8 H11 M5.5 4.8 H11 M5.5 7.8 H11" stroke="#a2a3a6" stroke-width="1.5"/></svg>
<div style="left:19px;top:773px;width:116px;height:17px;background:#7b7c80;border-top:1px solid #505154;border-left:1px solid #505154;border-right:1px solid #505154;border-radius:2px 2px 0 0;"></div>
<div style="left:20px;top:774px;width:114px;height:1px;background:#8c8d91;"></div>
<div class="t g" style="left:46px;top:778px;font-size:10px;color:#e9e9ea;transform:scaleX(0.8052);transform-origin:0 0;">ブラシサイズ[濃い鉛筆]</div>
<svg style="left:24px;top:773px;" width="10" height="20" viewBox="0 0 10 20"><path d="M5 1 L7.6 10 C8.4 13 7.4 15 6.2 16.5 H3.8 C2.6 15 1.6 13 2.4 10 Z" fill="#e8e8ea" stroke="#1a1a1c" stroke-width="1"/><path d="M5 1 L5.8 4 H4.2 Z" fill="#111"/><path d="M5 8 V14" stroke="#777" stroke-width="0.8"/><path d="M1.5 18.6 H8.5" stroke="#111" stroke-width="1.6"/><path d="M3.8 16.5 H6.2 V18 H3.8 Z" fill="#333"/></svg>
<svg style="left:31px;top:774px;" width="12" height="18" viewBox="0 0 12 18"><path d="M3 2 H1.5 V16 H3 M1.5 9 H3" stroke="#111" stroke-width="1" fill="none"/><circle cx="8" cy="3" r="1.6" fill="#111"/><circle cx="8" cy="9" r="2" fill="#111"/><circle cx="8" cy="15" r="2.6" fill="#111"/></svg>
<div style="left:1px;top:792px;width:217px;height:247px;background:#7b7c80;"></div>
<div style="left:1px;top:792px;width:204px;height:1px;background:#38383b;"></div>
<div style="left:1px;top:793px;width:34px;height:40px;background:#7c7d81;border-right:1px solid #38383b;border-bottom:1px solid #38383b;border-left:1px solid #38383b;"></div>
<svg style="left:1px;top:793px;" width="33" height="39" viewBox="0 0 33 39"><circle cx="16.5" cy="15.5" r="0.5" fill="#050505"/></svg>
<div class="t g" style="left:8.5px;top:818px;font-size:11px;color:#ffffff;transform:scaleX(0.8403);transform-origin:0 0;">0.07</div>
<div style="left:35px;top:793px;width:34px;height:40px;background:#7c7d81;border-right:1px solid #38383b;border-bottom:1px solid #38383b;"></div>
<svg style="left:35px;top:793px;" width="33" height="39" viewBox="0 0 33 39"><circle cx="16.5" cy="15.5" r="0.5" fill="#050505"/></svg>
<div class="t g" style="left:45.1px;top:818px;font-size:11px;color:#ffffff;transform:scaleX(0.8368);transform-origin:0 0;">0.1</div>
<div style="left:69px;top:793px;width:34px;height:40px;background:#7c7d81;border-right:1px solid #38383b;border-bottom:1px solid #38383b;"></div>
<svg style="left:69px;top:793px;" width="33" height="39" viewBox="0 0 33 39"><circle cx="16.5" cy="15.5" r="0.5" fill="#050505"/></svg>
<div class="t g" style="left:76.5px;top:818px;font-size:11px;color:#ffffff;transform:scaleX(0.8403);transform-origin:0 0;">0.15</div>
<div style="left:103px;top:793px;width:34px;height:40px;background:#7c7d81;border-right:1px solid #38383b;border-bottom:1px solid #38383b;"></div>
<svg style="left:103px;top:793px;" width="33" height="39" viewBox="0 0 33 39"><circle cx="16.5" cy="15.5" r="0.6" fill="#050505"/></svg>
<div class="t g" style="left:113.1px;top:818px;font-size:11px;color:#ffffff;transform:scaleX(0.8368);transform-origin:0 0;">0.2</div>
<div style="left:137px;top:793px;width:34px;height:40px;background:#7c7d81;border-right:1px solid #38383b;border-bottom:1px solid #38383b;"></div>
<svg style="left:137px;top:793px;" width="33" height="39" viewBox="0 0 33 39"><circle cx="16.5" cy="15.5" r="0.6" fill="#050505"/></svg>
<div class="t g" style="left:144.5px;top:818px;font-size:11px;color:#ffffff;transform:scaleX(0.8403);transform-origin:0 0;">0.25</div>
<div style="left:171px;top:793px;width:33px;height:40px;background:linear-gradient(#8aa8bc,#7796ab);border-right:1px solid #38383b;border-bottom:1px solid #38383b;"></div>
<svg style="left:171px;top:793px;" width="32" height="39" viewBox="0 0 32 39"><circle cx="16.0" cy="15.5" r="0.7" fill="#050505"/></svg>
<div class="t g" style="left:180.6px;top:818px;font-size:11px;color:#ffffff;transform:scaleX(0.8368);transform-origin:0 0;">0.3</div>
<div style="left:1px;top:833px;width:34px;height:40px;background:#7c7d81;border-right:1px solid #38383b;border-bottom:1px solid #38383b;border-left:1px solid #38383b;"></div>
<svg style="left:1px;top:833px;" width="33" height="39" viewBox="0 0 33 39"><circle cx="16.5" cy="15.5" r="1.3" fill="#050505"/></svg>
<div class="t g" style="left:11.1px;top:858px;font-size:11px;color:#ffffff;transform:scaleX(0.8368);transform-origin:0 0;">0.4</div>
<div style="left:35px;top:833px;width:34px;height:40px;background:#7c7d81;border-right:1px solid #38383b;border-bottom:1px solid #38383b;"></div>
<svg style="left:35px;top:833px;" width="33" height="39" viewBox="0 0 33 39"><circle cx="16.5" cy="15.5" r="1.7" fill="#050505"/></svg>
<div class="t g" style="left:45.1px;top:858px;font-size:11px;color:#ffffff;transform:scaleX(0.8368);transform-origin:0 0;">0.5</div>
<div style="left:69px;top:833px;width:34px;height:40px;background:#7c7d81;border-right:1px solid #38383b;border-bottom:1px solid #38383b;"></div>
<svg style="left:69px;top:833px;" width="33" height="39" viewBox="0 0 33 39"><circle cx="16.5" cy="15.5" r="2.0" fill="#050505"/></svg>
<div class="t g" style="left:79.1px;top:858px;font-size:11px;color:#ffffff;transform:scaleX(0.8368);transform-origin:0 0;">0.6</div>
<div style="left:103px;top:833px;width:34px;height:40px;background:#7c7d81;border-right:1px solid #38383b;border-bottom:1px solid #38383b;"></div>
<svg style="left:103px;top:833px;" width="33" height="39" viewBox="0 0 33 39"><circle cx="16.5" cy="15.5" r="2.4" fill="#050505"/></svg>
<div class="t g" style="left:113.1px;top:858px;font-size:11px;color:#ffffff;transform:scaleX(0.8368);transform-origin:0 0;">0.7</div>
<div style="left:137px;top:833px;width:34px;height:40px;background:#7c7d81;border-right:1px solid #38383b;border-bottom:1px solid #38383b;"></div>
<svg style="left:137px;top:833px;" width="33" height="39" viewBox="0 0 33 39"><circle cx="16.5" cy="15.5" r="2.8" fill="#050505"/></svg>
<div class="t g" style="left:147.1px;top:858px;font-size:11px;color:#ffffff;transform:scaleX(0.8368);transform-origin:0 0;">0.8</div>
<div style="left:171px;top:833px;width:33px;height:40px;background:#7c7d81;border-right:1px solid #38383b;border-bottom:1px solid #38383b;"></div>
<svg style="left:171px;top:833px;" width="32" height="39" viewBox="0 0 32 39"><circle cx="16.0" cy="15.5" r="3.9" fill="#050505"/></svg>
<div class="t g" style="left:184.4px;top:858px;font-size:11px;color:#ffffff;transform:scaleX(0.8490);transform-origin:0 0;">1</div>
<div style="left:1px;top:873px;width:34px;height:40px;background:#7c7d81;border-right:1px solid #38383b;border-bottom:1px solid #38383b;border-left:1px solid #38383b;"></div>
<svg style="left:1px;top:873px;" width="33" height="39" viewBox="0 0 33 39"><circle cx="16.5" cy="15.5" r="5.2" fill="#050505"/></svg>
<div class="t g" style="left:11.1px;top:898px;font-size:11px;color:#ffffff;transform:scaleX(0.8368);transform-origin:0 0;">1.2</div>
<div style="left:35px;top:873px;width:34px;height:40px;background:#7c7d81;border-right:1px solid #38383b;border-bottom:1px solid #38383b;"></div>
<svg style="left:35px;top:873px;" width="33" height="39" viewBox="0 0 33 39"><circle cx="16.5" cy="15.5" r="6.6" fill="#050505"/><rect x="0" y="21.5" width="34" height="18" fill="#7c7d81" opacity="0.7"/></svg>
<div class="t g" style="left:45.1px;top:898px;font-size:11px;color:#ffffff;transform:scaleX(0.8368);transform-origin:0 0;">1.5</div>
<div style="left:69px;top:873px;width:34px;height:40px;background:#7c7d81;border-right:1px solid #38383b;border-bottom:1px solid #38383b;"></div>
<svg style="left:69px;top:873px;" width="33" height="39" viewBox="0 0 33 39"><circle cx="16.5" cy="15.5" r="7.6" fill="#050505"/><rect x="0" y="21.5" width="34" height="18" fill="#7c7d81" opacity="0.7"/></svg>
<div class="t g" style="left:79.1px;top:898px;font-size:11px;color:#ffffff;transform:scaleX(0.8368);transform-origin:0 0;">1.7</div>
<div style="left:103px;top:873px;width:34px;height:40px;background:#7c7d81;border-right:1px solid #38383b;border-bottom:1px solid #38383b;"></div>
<svg style="left:103px;top:873px;" width="33" height="39" viewBox="0 0 33 39"><circle cx="16.5" cy="15.5" r="9.2" fill="#050505"/><rect x="0" y="21.5" width="34" height="18" fill="#7c7d81" opacity="0.7"/></svg>
<div class="t g" style="left:116.9px;top:898px;font-size:11px;color:#ffffff;transform:scaleX(0.8490);transform-origin:0 0;">2</div>
<div style="left:137px;top:873px;width:34px;height:40px;background:#7c7d81;border-right:1px solid #38383b;border-bottom:1px solid #38383b;"></div>
<svg style="left:137px;top:873px;" width="33" height="39" viewBox="0 0 33 39"><circle cx="16.5" cy="15.5" r="11.6" fill="#050505"/><rect x="0" y="21.5" width="34" height="18" fill="#7c7d81" opacity="0.7"/></svg>
<div class="t g" style="left:147.1px;top:898px;font-size:11px;color:#ffffff;transform:scaleX(0.8368);transform-origin:0 0;">2.5</div>
<div style="left:171px;top:873px;width:33px;height:40px;background:#7c7d81;border-right:1px solid #38383b;border-bottom:1px solid #38383b;"></div>
<svg style="left:171px;top:873px;" width="32" height="39" viewBox="0 0 32 39"><circle cx="16.0" cy="15.5" r="11.6" fill="#050505"/><rect x="0" y="21.5" width="33" height="18" fill="#7c7d81" opacity="0.7"/></svg>
<div class="t g" style="left:184.4px;top:898px;font-size:11px;color:#ffffff;transform:scaleX(0.8490);transform-origin:0 0;">3</div>
<div style="left:1px;top:913px;width:34px;height:40px;background:#7c7d81;border-right:1px solid #38383b;border-bottom:1px solid #38383b;border-left:1px solid #38383b;"></div>
<svg style="left:1px;top:913px;" width="33" height="39" viewBox="0 0 33 39"><circle cx="16.5" cy="15.5" r="11.6" fill="#050505"/><rect x="0" y="21.5" width="34" height="18" fill="#7c7d81" opacity="0.7"/></svg>
<div class="t g" style="left:14.9px;top:938px;font-size:11px;color:#ffffff;transform:scaleX(0.8490);transform-origin:0 0;">4</div>
<div style="left:35px;top:913px;width:34px;height:40px;background:#7c7d81;border-right:1px solid #38383b;border-bottom:1px solid #38383b;"></div>
<svg style="left:35px;top:913px;" width="33" height="39" viewBox="0 0 33 39"><circle cx="16.5" cy="15.5" r="11.6" fill="#050505"/><rect x="0" y="21.5" width="34" height="18" fill="#7c7d81" opacity="0.7"/></svg>
<div class="t g" style="left:48.9px;top:938px;font-size:11px;color:#ffffff;transform:scaleX(0.8490);transform-origin:0 0;">5</div>
<div style="left:69px;top:913px;width:34px;height:40px;background:#7c7d81;border-right:1px solid #38383b;border-bottom:1px solid #38383b;"></div>
<svg style="left:69px;top:913px;" width="33" height="39" viewBox="0 0 33 39"><circle cx="16.5" cy="15.5" r="11.6" fill="#050505"/><rect x="0" y="21.5" width="34" height="18" fill="#7c7d81" opacity="0.7"/></svg>
<div class="t g" style="left:82.9px;top:938px;font-size:11px;color:#ffffff;transform:scaleX(0.8490);transform-origin:0 0;">6</div>
<div style="left:103px;top:913px;width:34px;height:40px;background:#7c7d81;border-right:1px solid #38383b;border-bottom:1px solid #38383b;"></div>
<svg style="left:103px;top:913px;" width="33" height="39" viewBox="0 0 33 39"><circle cx="16.5" cy="15.5" r="11.6" fill="#050505"/><rect x="0" y="21.5" width="34" height="18" fill="#7c7d81" opacity="0.7"/></svg>
<div class="t g" style="left:116.9px;top:938px;font-size:11px;color:#ffffff;transform:scaleX(0.8490);transform-origin:0 0;">7</div>
<div style="left:137px;top:913px;width:34px;height:40px;background:#7c7d81;border-right:1px solid #38383b;border-bottom:1px solid #38383b;"></div>
<svg style="left:137px;top:913px;" width="33" height="39" viewBox="0 0 33 39"><circle cx="16.5" cy="15.5" r="11.6" fill="#050505"/><rect x="0" y="21.5" width="34" height="18" fill="#7c7d81" opacity="0.7"/></svg>
<div class="t g" style="left:150.9px;top:938px;font-size:11px;color:#ffffff;transform:scaleX(0.8490);transform-origin:0 0;">8</div>
<div style="left:171px;top:913px;width:33px;height:40px;background:#7c7d81;border-right:1px solid #38383b;border-bottom:1px solid #38383b;"></div>
<svg style="left:171px;top:913px;" width="32" height="39" viewBox="0 0 32 39"><circle cx="16.0" cy="15.5" r="11.6" fill="#050505"/><rect x="0" y="21.5" width="33" height="18" fill="#7c7d81" opacity="0.7"/></svg>
<div class="t g" style="left:181.8px;top:938px;font-size:11px;color:#ffffff;transform:scaleX(0.8490);transform-origin:0 0;">10</div>
<div style="left:1px;top:953px;width:34px;height:40px;background:#7c7d81;border-right:1px solid #38383b;border-bottom:1px solid #38383b;border-left:1px solid #38383b;"></div>
<svg style="left:1px;top:953px;" width="33" height="39" viewBox="0 0 33 39"><circle cx="16.5" cy="15.5" r="11.6" fill="#050505"/><rect x="0" y="21.5" width="34" height="18" fill="#7c7d81" opacity="0.7"/></svg>
<div class="t g" style="left:12.3px;top:978px;font-size:11px;color:#ffffff;transform:scaleX(0.8490);transform-origin:0 0;">12</div>
<div style="left:35px;top:953px;width:34px;height:40px;background:#7c7d81;border-right:1px solid #38383b;border-bottom:1px solid #38383b;"></div>
<svg style="left:35px;top:953px;" width="33" height="39" viewBox="0 0 33 39"><circle cx="16.5" cy="15.5" r="11.6" fill="#050505"/><rect x="0" y="21.5" width="34" height="18" fill="#7c7d81" opacity="0.7"/></svg>
<div class="t g" style="left:46.3px;top:978px;font-size:11px;color:#ffffff;transform:scaleX(0.8490);transform-origin:0 0;">15</div>
<div style="left:69px;top:953px;width:34px;height:40px;background:#7c7d81;border-right:1px solid #38383b;border-bottom:1px solid #38383b;"></div>
<svg style="left:69px;top:953px;" width="33" height="39" viewBox="0 0 33 39"><circle cx="16.5" cy="15.5" r="11.6" fill="#050505"/><rect x="0" y="21.5" width="34" height="18" fill="#7c7d81" opacity="0.7"/></svg>
<div class="t g" style="left:80.3px;top:978px;font-size:11px;color:#ffffff;transform:scaleX(0.8490);transform-origin:0 0;">17</div>
<div style="left:103px;top:953px;width:34px;height:40px;background:#7c7d81;border-right:1px solid #38383b;border-bottom:1px solid #38383b;"></div>
<svg style="left:103px;top:953px;" width="33" height="39" viewBox="0 0 33 39"><circle cx="16.5" cy="15.5" r="11.6" fill="#050505"/><rect x="0" y="21.5" width="34" height="18" fill="#7c7d81" opacity="0.7"/></svg>
<div class="t g" style="left:114.3px;top:978px;font-size:11px;color:#ffffff;transform:scaleX(0.8490);transform-origin:0 0;">20</div>
<div style="left:137px;top:953px;width:34px;height:40px;background:#7c7d81;border-right:1px solid #38383b;border-bottom:1px solid #38383b;"></div>
<svg style="left:137px;top:953px;" width="33" height="39" viewBox="0 0 33 39"><circle cx="16.5" cy="15.5" r="11.6" fill="#050505"/><rect x="0" y="21.5" width="34" height="18" fill="#7c7d81" opacity="0.7"/></svg>
<div class="t g" style="left:148.3px;top:978px;font-size:11px;color:#ffffff;transform:scaleX(0.8490);transform-origin:0 0;">25</div>
<div style="left:171px;top:953px;width:33px;height:40px;background:#7c7d81;border-right:1px solid #38383b;border-bottom:1px solid #38383b;"></div>
<svg style="left:171px;top:953px;" width="32" height="39" viewBox="0 0 32 39"><circle cx="16.0" cy="15.5" r="11.6" fill="#050505"/><rect x="0" y="21.5" width="33" height="18" fill="#7c7d81" opacity="0.7"/></svg>
<div class="t g" style="left:181.8px;top:978px;font-size:11px;color:#ffffff;transform:scaleX(0.8490);transform-origin:0 0;">30</div>
<div style="left:1px;top:993px;width:34px;height:40px;background:#7c7d81;border-right:1px solid #38383b;border-bottom:1px solid #38383b;border-left:1px solid #38383b;"></div>
<svg style="left:1px;top:993px;" width="33" height="39" viewBox="0 0 33 39"><circle cx="16.5" cy="15.5" r="11.6" fill="#050505"/><rect x="0" y="21.5" width="34" height="18" fill="#7c7d81" opacity="0.7"/></svg>
<div class="t g" style="left:12.3px;top:1018px;font-size:11px;color:#ffffff;transform:scaleX(0.8490);transform-origin:0 0;">40</div>
<div style="left:35px;top:993px;width:34px;height:40px;background:#7c7d81;border-right:1px solid #38383b;border-bottom:1px solid #38383b;"></div>
<svg style="left:35px;top:993px;" width="33" height="39" viewBox="0 0 33 39"><circle cx="16.5" cy="15.5" r="11.6" fill="#050505"/><rect x="0" y="21.5" width="34" height="18" fill="#7c7d81" opacity="0.7"/></svg>
<div class="t g" style="left:46.3px;top:1018px;font-size:11px;color:#ffffff;transform:scaleX(0.8490);transform-origin:0 0;">50</div>
<div style="left:69px;top:993px;width:34px;height:40px;background:#7c7d81;border-right:1px solid #38383b;border-bottom:1px solid #38383b;"></div>
<svg style="left:69px;top:993px;" width="33" height="39" viewBox="0 0 33 39"><circle cx="16.5" cy="15.5" r="11.6" fill="#050505"/><rect x="0" y="21.5" width="34" height="18" fill="#7c7d81" opacity="0.7"/></svg>
<div class="t g" style="left:80.3px;top:1018px;font-size:11px;color:#ffffff;transform:scaleX(0.8490);transform-origin:0 0;">60</div>
<div style="left:103px;top:993px;width:34px;height:40px;background:#7c7d81;border-right:1px solid #38383b;border-bottom:1px solid #38383b;"></div>
<svg style="left:103px;top:993px;" width="33" height="39" viewBox="0 0 33 39"><circle cx="16.5" cy="15.5" r="11.6" fill="#050505"/><rect x="0" y="21.5" width="34" height="18" fill="#7c7d81" opacity="0.7"/></svg>
<div class="t g" style="left:114.3px;top:1018px;font-size:11px;color:#ffffff;transform:scaleX(0.8490);transform-origin:0 0;">70</div>
<div style="left:137px;top:993px;width:34px;height:40px;background:#7c7d81;border-right:1px solid #38383b;border-bottom:1px solid #38383b;"></div>
<svg style="left:137px;top:993px;" width="33" height="39" viewBox="0 0 33 39"><circle cx="16.5" cy="15.5" r="11.6" fill="#050505"/><rect x="0" y="21.5" width="34" height="18" fill="#7c7d81" opacity="0.7"/></svg>
<div class="t g" style="left:148.3px;top:1018px;font-size:11px;color:#ffffff;transform:scaleX(0.8490);transform-origin:0 0;">80</div>
<div style="left:171px;top:993px;width:33px;height:40px;background:#7c7d81;border-right:1px solid #38383b;border-bottom:1px solid #38383b;"></div>
<svg style="left:171px;top:993px;" width="32" height="39" viewBox="0 0 32 39"><circle cx="16.0" cy="15.5" r="11.6" fill="#050505"/><rect x="0" y="21.5" width="33" height="18" fill="#7c7d81" opacity="0.7"/></svg>
<div class="t g" style="left:179.2px;top:1018px;font-size:11px;color:#ffffff;transform:scaleX(0.8497);transform-origin:0 0;">100</div>
<div style="left:205px;top:792px;width:13px;height:247px;background:#7b7c80;"></div>
<div style="left:1px;top:1033px;width:204px;height:6px;background:#747579;"></div>
<div style="left:221px;top:74px;width:227px;height:22px;background:#4d4d50;"></div>
<div style="left:221px;top:74px;width:97px;height:21px;background:#77787c;border-top:1px solid #8e8f93;border-right:1px solid #5c5d60;"></div>
<div class="t g" style="left:224px;top:79px;font-size:11px;color:#eeeeee;transform:scaleX(0.8182);transform-origin:0 0;">夏コミ原稿</div>
<svg style="left:303px;top:80px;" width="10" height="10" viewBox="0 0 10 10"><path d="M1.5 1.5 L8.5 8.5 M8.5 1.5 L1.5 8.5" stroke="#3a3a3c" stroke-width="2.2"/></svg>
<div style="left:437px;top:75px;width:10px;height:20px;background:#707175;border:1px solid #85868a;border-radius:2px;"></div>
<svg style="left:438px;top:82px;" width="8" height="6" viewBox="0 0 8 6"><path d="M1 1 H7 L4 4.6 Z" fill="#2e2e30"/></svg>
<div style="left:221px;top:95px;width:227px;height:2px;background:#3c3c3e;"></div>
<div style="left:219px;top:97px;width:218px;height:929px;background:#444447;"></div>
<div style="left:437px;top:97px;width:11px;height:929px;background:#6d6e72;"></div>
<div style="left:437px;top:98px;width:11px;height:11px;background:#7b7c80;border:1px solid #8b8c90;border-radius:1px;"></div>
<svg style="left:438.5px;top:101px;" width="8" height="6" viewBox="0 0 8 6"><path d="M1 5 H7 L4 1.4 Z" fill="#47484b"/></svg>
<div style="left:437px;top:1014px;width:11px;height:11px;background:#7b7c80;border:1px solid #8b8c90;border-radius:1px;"></div>
<svg style="left:438.5px;top:1017px;" width="8" height="6" viewBox="0 0 8 6"><path d="M1 1 H7 L4 4.6 Z" fill="#47484b"/></svg>
<div style="left:437px;top:252px;width:11px;height:340px;background:#7b7c80;border:1px solid #8b8c90;border-radius:2px;"></div>
<svg style="left:438.5px;top:417px;" width="8" height="9" viewBox="0 0 8 9"><path d="M1 1.5 H7 M1 4.5 H7 M1 7.5 H7" stroke="#56575a" stroke-width="1.2"/></svg>
<div style="left:221px;top:97px;width:216px;height:929px;overflow:hidden;">
<div style="left:5px;top:-34px;width:204px;height:5px;background:linear-gradient(rgba(68,68,71,0),rgba(56,56,58,0));"></div>
<div style="left:5px;top:134px;width:204px;height:4px;background:linear-gradient(#39393b,#444447);"></div>
<div style="left:5px;top:-29px;width:204px;height:163px;background:#78797d;border-top:1px solid #8e8f93;border-bottom:1px solid #97989c;">
<svg style="left:9px;top:17.5px;" width="88.6" height="125" viewBox="0 0 89 125" preserveAspectRatio="none"><rect width="89" height="125" fill="#fff"/><rect x="4.8" y="8.2" width="79.4" height="109.6" fill="none" stroke="#aaa2f2" stroke-width="0.9"/><path d="M4.8 5.5 V8 M84.2 5.5 V8 M4.8 118 V120.5 M84.2 118 V120.5 M3 8.2 H4.8 M84.2 8.2 H86 M3 117.8 H4.8 M84.2 117.8 H86" stroke="#aaa2f2" stroke-width="0.8"/><path d="M42 6.2 H47 M44.5 5 V7.5 M42 119.8 H47 M44.5 118.5 V121 M3.4 60 V66 M2.4 63 H4.8 M85.6 60 V66 M84.2 63 H86.6" stroke="#aaa2f2" stroke-width="0.9"/><rect x="13.3" y="16.8" width="63.9" height="29.2" fill="none" stroke="#626264" stroke-width="0.75"/><rect x="61" y="47.9" width="13.3" height="23.2" fill="none" stroke="#626264" stroke-width="0.75"/><rect x="8.6" y="78.9" width="71.6" height="33.3" fill="none" stroke="#626264" stroke-width="0.75"/><path d="M30 78.9 V112.2 M54.8 78.9 V112.2" stroke="#4a4a4c" stroke-width="0.8"/><path d="M47 46 L58 17 M48.5 46 L59.5 17" stroke="#444" stroke-width="0.9" stroke-dasharray="1.5 1"/><path d="M18 34 V48" stroke="#555" stroke-width="1.2" stroke-dasharray="1.2 0.6" opacity="0.8"/><path d="M32 18 V25" stroke="#555" stroke-width="1.2" stroke-dasharray="1.2 0.6" opacity="0.8"/><path d="M57 18 V58" stroke="#555" stroke-width="1.2" stroke-dasharray="1.2 0.6" opacity="0.8"/><path d="M64 17 V40" stroke="#555" stroke-width="1.2" stroke-dasharray="1.2 0.6" opacity="0.8"/><path d="M75 16 V27" stroke="#555" stroke-width="1.2" stroke-dasharray="1.2 0.6" opacity="0.8"/><path d="M10 94 V110" stroke="#555" stroke-width="1.2" stroke-dasharray="1.2 0.6" opacity="0.8"/><path d="M33 82 V102" stroke="#555" stroke-width="1.2" stroke-dasharray="1.2 0.6" opacity="0.8"/><path d="M51 84 V103" stroke="#555" stroke-width="1.2" stroke-dasharray="1.2 0.6" opacity="0.8"/><path d="M56 48 V74" stroke="#555" stroke-width="1.2" stroke-dasharray="1.2 0.6" opacity="0.8"/><path d="M74 80 V108" stroke="#555" stroke-width="2" stroke-dasharray="1.2 0.6" opacity="0.8"/><path d="M57 100 V104" stroke="#555" stroke-width="1.2" stroke-dasharray="1.2 0.6" opacity="0.8"/><path d="M16 60 C30 55 44 70 56 62 M20 90 C24 84 28 96 30 88 M60 92 C66 86 72 98 78 90" stroke="#a9d3f2" stroke-width="0.6" fill="none" opacity="0.6"/></svg>
<div class="t g" style="left:9px;top:147px;width:89px;text-align:center;font-size:12px;color:#cfcfd2;">5</div>
<svg style="left:107px;top:17.5px;" width="88.6" height="125" viewBox="0 0 89 125" preserveAspectRatio="none"><rect width="89" height="125" fill="#fff"/><rect x="4.8" y="8.2" width="79.4" height="109.6" fill="none" stroke="#aaa2f2" stroke-width="0.9"/><path d="M4.8 5.5 V8 M84.2 5.5 V8 M4.8 118 V120.5 M84.2 118 V120.5 M3 8.2 H4.8 M84.2 8.2 H86 M3 117.8 H4.8 M84.2 117.8 H86" stroke="#aaa2f2" stroke-width="0.8"/><path d="M42 6.2 H47 M44.5 5 V7.5 M42 119.8 H47 M44.5 118.5 V121 M3.4 60 V66 M2.4 63 H4.8 M85.6 60 V66 M84.2 63 H86.6" stroke="#aaa2f2" stroke-width="0.9"/><rect x="13" y="13.2" width="25" height="32.5" fill="none" stroke="#77777a" stroke-width="0.75"/><rect x="41.8" y="13.2" width="38.2" height="32.5" fill="none" stroke="#77777a" stroke-width="0.75"/><rect x="13" y="47.9" width="32.3" height="31.0" fill="none" stroke="#626264" stroke-width="0.75"/><rect x="48.9" y="47.9" width="27.1" height="31.0" fill="none" stroke="#626264" stroke-width="0.75"/><rect x="13" y="80.6" width="63" height="28.5" fill="none" stroke="#626264" stroke-width="0.75"/><path d="M43 27 V42" stroke="#555" stroke-width="1.2" stroke-dasharray="1.2 0.6" opacity="0.8"/><path d="M72 15 V25" stroke="#555" stroke-width="2" stroke-dasharray="1.2 0.6" opacity="0.8"/><path d="M74 22 V44" stroke="#555" stroke-width="1.2" stroke-dasharray="1.2 0.6" opacity="0.8"/><path d="M29 48 V66" stroke="#555" stroke-width="1.2" stroke-dasharray="1.2 0.6" opacity="0.8"/><path d="M33 58 V72" stroke="#555" stroke-width="1.2" stroke-dasharray="1.2 0.6" opacity="0.8"/><path d="M72 48 V76" stroke="#555" stroke-width="1.6" stroke-dasharray="1.2 0.6" opacity="0.8"/><path d="M14 92 V107" stroke="#555" stroke-width="1.2" stroke-dasharray="1.2 0.6" opacity="0.8"/><path d="M19 82 V108" stroke="#555" stroke-width="1.2" stroke-dasharray="1.2 0.6" opacity="0.8"/><path d="M25 83 V98" stroke="#555" stroke-width="1.2" stroke-dasharray="1.2 0.6" opacity="0.8"/><path d="M71 84 V90" stroke="#555" stroke-width="1.2" stroke-dasharray="1.2 0.6" opacity="0.8"/><path d="M18 30 C24 22 30 36 36 28 M50 24 C58 18 62 34 70 30 M30 96 C44 90 54 104 68 94" stroke="#a9d3f2" stroke-width="0.6" fill="none" opacity="0.55"/></svg>
<div class="t g" style="left:107px;top:147px;width:89px;text-align:center;font-size:12px;color:#cfcfd2;">4</div>
</div>
<div style="left:5px;top:141px;width:204px;height:5px;background:linear-gradient(rgba(68,68,71,0),rgba(56,56,58,0));"></div>
<div style="left:5px;top:309px;width:204px;height:4px;background:linear-gradient(#39393b,#444447);"></div>
<div style="left:5px;top:146px;width:204px;height:163px;background:#78797d;border-top:1px solid #8e8f93;border-bottom:1px solid #97989c;">
<div style="left:4.5px;top:1px;width:97.5px;height:160px;background:linear-gradient(#5d5d60,#49494c);border:1px solid #3a3a3c;border-radius:3px;"></div>
<div style="left:8.2px;top:16.7px;width:89px;height:125.5px;background:#1e1e20;"></div>
<svg style="left:9px;top:17.5px;" width="88.6" height="125" viewBox="0 0 89 125" preserveAspectRatio="none"><rect width="89" height="125" fill="#fff"/><rect x="4.8" y="8.2" width="79.4" height="109.6" fill="none" stroke="#aaa2f2" stroke-width="0.9"/><path d="M4.8 5.5 V8 M84.2 5.5 V8 M4.8 118 V120.5 M84.2 118 V120.5 M3 8.2 H4.8 M84.2 8.2 H86 M3 117.8 H4.8 M84.2 117.8 H86" stroke="#aaa2f2" stroke-width="0.8"/><path d="M42 6.2 H47 M44.5 5 V7.5 M42 119.8 H47 M44.5 118.5 V121 M3.4 60 V66 M2.4 63 H4.8 M85.6 60 V66 M84.2 63 H86.6" stroke="#aaa2f2" stroke-width="0.9"/><rect x="59" y="13" width="20.7" height="10" fill="none" stroke="#626264" stroke-width="0.75"/><rect x="12.9" y="16.7" width="27.2" height="27.1" fill="none" stroke="#626264" stroke-width="0.75"/><rect x="41.1" y="16.7" width="34.7" height="27.1" fill="none" stroke="#626264" stroke-width="0.75"/><rect x="12.9" y="45.1" width="30.7" height="29.8" fill="none" stroke="#626264" stroke-width="0.75"/><rect x="44.2" y="45.1" width="31.6" height="63.8" fill="none" stroke="#626264" stroke-width="0.75"/><rect x="12.9" y="75.8" width="30.7" height="33.1" fill="none" stroke="#626264" stroke-width="0.75"/><path d="M34 18 V32" stroke="#555" stroke-width="1.2" stroke-dasharray="1.2 0.6" opacity="0.8"/><path d="M66 29 V31" stroke="#555" stroke-width="1.2" stroke-dasharray="1.2 0.6" opacity="0.8"/><path d="M19 79 V95" stroke="#555" stroke-width="1.2" stroke-dasharray="1.2 0.6" opacity="0.8"/><path d="M41 77 V98" stroke="#555" stroke-width="1.2" stroke-dasharray="1.2 0.6" opacity="0.8"/><path d="M14 34 C18 24 22 30 24 18 M21 18 V42 M44 30 C50 18 52 34 58 24 M56 36 V44 M62 32 V44 M20 56 H37 M22 60 H36 M30 64 H36 M49 46 V108 M53 46 V108 M58 60 C64 80 60 96 66 108 M18 98 C24 86 32 88 38 100 M26 100 C30 94 34 98 36 104" stroke="#a9d3f2" stroke-width="0.7" fill="none" opacity="0.8"/></svg>
<div class="t g" style="left:9px;top:147px;width:89px;text-align:center;font-size:12px;color:#ffffff;font-weight:bold;">7</div>
<svg style="left:107px;top:17.5px;" width="88.6" height="125" viewBox="0 0 89 125" preserveAspectRatio="none"><rect width="89" height="125" fill="#fff"/><rect x="4.8" y="8.2" width="79.4" height="109.6" fill="none" stroke="#aaa2f2" stroke-width="0.9"/><path d="M4.8 5.5 V8 M84.2 5.5 V8 M4.8 118 V120.5 M84.2 118 V120.5 M3 8.2 H4.8 M84.2 8.2 H86 M3 117.8 H4.8 M84.2 117.8 H86" stroke="#aaa2f2" stroke-width="0.8"/><path d="M42 6.2 H47 M44.5 5 V7.5 M42 119.8 H47 M44.5 118.5 V121 M3.4 60 V66 M2.4 63 H4.8 M85.6 60 V66 M84.2 63 H86.6" stroke="#aaa2f2" stroke-width="0.9"/><path d="M8.6 12 L35 11.5 L35.4 49 L9.2 51 Z M46 10.6 L80.6 11.6 L81 45 L45.6 48 Z" fill="none" stroke="#444" stroke-width="0.8"/><rect x="26.5" y="13.5" width="7.5" height="11.0" fill="none" stroke="#666" stroke-width="0.75"/><rect x="42.5" y="12" width="4.0" height="14" fill="none" stroke="#888" stroke-width="0.75"/><path d="M9.8 52 L76 48.5 V79.1 H9.8 Z" fill="none" stroke="#444" stroke-width="0.8"/><path d="M21 51.4 L26 72 L23.4 79 M23.4 79 L42 54 L47 79 L60 52 L65 79" fill="none" stroke="#222" stroke-width="0.9"/><rect x="9.8" y="80.6" width="13.8" height="33.6" fill="none" stroke="#333" stroke-width="1"/><path d="M12.5 30 V48" stroke="#555" stroke-width="1.2" stroke-dasharray="1.2 0.6" opacity="0.8"/><path d="M15 60 V76" stroke="#555" stroke-width="1.2" stroke-dasharray="1.2 0.6" opacity="0.8"/><path d="M16 86 V100" stroke="#555" stroke-width="1.2" stroke-dasharray="1.2 0.6" opacity="0.8"/><path d="M27 54 V64" stroke="#555" stroke-width="1.2" stroke-dasharray="1.2 0.6" opacity="0.8"/><path d="M27 86 V112" stroke="#555" stroke-width="1.2" stroke-dasharray="1.2 0.6" opacity="0.8"/><path d="M36 86 V96" stroke="#555" stroke-width="1.2" stroke-dasharray="1.2 0.6" opacity="0.8"/><path d="M44 66 V76" stroke="#555" stroke-width="1.2" stroke-dasharray="1.2 0.6" opacity="0.8"/><path d="M55 34 V37" stroke="#555" stroke-width="1.2" stroke-dasharray="1.2 0.6" opacity="0.8"/><path d="M57 52 V62" stroke="#555" stroke-width="1.2" stroke-dasharray="1.2 0.6" opacity="0.8"/><path d="M64 82 V110" stroke="#555" stroke-width="1.2" stroke-dasharray="1.2 0.6" opacity="0.8"/><path d="M72 50 V58" stroke="#555" stroke-width="1.2" stroke-dasharray="1.2 0.6" opacity="0.8"/><path d="M78 12 V40" stroke="#555" stroke-width="1.2" stroke-dasharray="1.2 0.6" opacity="0.8"/><path d="M77 80 V104" stroke="#555" stroke-width="1.6" stroke-dasharray="1.2 0.6" opacity="0.8"/><path d="M14 30 C20 22 26 36 30 44 M50 20 C58 10 70 14 76 30 M36 96 C40 106 48 106 52 96 M66 98 C72 108 80 112 88 108 M74 86 C80 96 84 104 88 116 M20 20 H70 V110 H16 Z" stroke="#a9d3f2" stroke-width="0.6" fill="none" opacity="0.6"/></svg>
<div class="t g" style="left:107px;top:147px;width:89px;text-align:center;font-size:12px;color:#cfcfd2;">6</div>
</div>
<div style="left:5px;top:316px;width:204px;height:5px;background:linear-gradient(rgba(68,68,71,0),rgba(56,56,58,0));"></div>
<div style="left:5px;top:484px;width:204px;height:4px;background:linear-gradient(#39393b,#444447);"></div>
<div style="left:5px;top:321px;width:204px;height:163px;background:#78797d;border-top:1px solid #8e8f93;border-bottom:1px solid #97989c;">
<div style="left:4.5px;top:1px;width:97.5px;height:160px;background:linear-gradient(#829eaf,#6a8598);border:1px solid #46525e;border-radius:3px;"></div>
<div style="left:8.2px;top:16.7px;width:89px;height:125.5px;background:#1e1e20;"></div>
<svg style="left:9px;top:17.5px;" width="88.6" height="125" viewBox="0 0 89 125" preserveAspectRatio="none"><rect width="89" height="125" fill="#fff"/><rect x="4.8" y="8.2" width="79.4" height="109.6" fill="none" stroke="#aaa2f2" stroke-width="0.9"/><path d="M4.8 5.5 V8 M84.2 5.5 V8 M4.8 118 V120.5 M84.2 118 V120.5 M3 8.2 H4.8 M84.2 8.2 H86 M3 117.8 H4.8 M84.2 117.8 H86" stroke="#aaa2f2" stroke-width="0.8"/><path d="M42 6.2 H47 M44.5 5 V7.5 M42 119.8 H47 M44.5 118.5 V121 M3.4 60 V66 M2.4 63 H4.8 M85.6 60 V66 M84.2 63 H86.6" stroke="#aaa2f2" stroke-width="0.9"/><rect x="12.9" y="16.8" width="63.3" height="92.1" fill="none" stroke="#bcbcd4" stroke-width="0.75"/><path d="M20 30 C20 24 28 24 28 30 C28 36 20 36 20 30 M24 36 V60 M18 40 C16 60 18 80 20 104 M30 40 C32 60 30 84 28 104 M24 60 V104 M40 68 H74 M44 58 C46 50 52 52 54 60 L58 68 M48 60 L56 66 M50 30 C56 24 66 24 72 30 M54 30 H70 M40 100 H74" stroke="#a9d3f2" stroke-width="0.6" fill="none" opacity="0.75"/></svg>
<div class="t g" style="left:9px;top:147px;width:89px;text-align:center;font-size:12px;color:#d4d6d8;font-weight:bold;">9*</div>
<div style="left:102.5px;top:1px;width:97.5px;height:160px;background:linear-gradient(#5d5d60,#49494c);border:1px solid #3a3a3c;border-radius:3px;"></div>
<div style="left:106.2px;top:16.7px;width:89px;height:125.5px;background:#1e1e20;"></div>
<svg style="left:107px;top:17.5px;" width="88.6" height="125" viewBox="0 0 89 125" preserveAspectRatio="none"><rect width="89" height="125" fill="#fff"/><rect x="4.8" y="8.2" width="79.4" height="109.6" fill="none" stroke="#aaa2f2" stroke-width="0.9"/><path d="M4.8 5.5 V8 M84.2 5.5 V8 M4.8 118 V120.5 M84.2 118 V120.5 M3 8.2 H4.8 M84.2 8.2 H86 M3 117.8 H4.8 M84.2 117.8 H86" stroke="#aaa2f2" stroke-width="0.8"/><path d="M42 6.2 H47 M44.5 5 V7.5 M42 119.8 H47 M44.5 118.5 V121 M3.4 60 V66 M2.4 63 H4.8 M85.6 60 V66 M84.2 63 H86.6" stroke="#aaa2f2" stroke-width="0.9"/><rect x="13.5" y="16.7" width="24.9" height="20.6" fill="none" stroke="#626264" stroke-width="0.75"/><rect x="39.8" y="16.7" width="35.8" height="43.3" fill="none" stroke="#626264" stroke-width="0.75"/><rect x="13.5" y="38.7" width="24.9" height="21.3" fill="none" stroke="#626264" stroke-width="0.75"/><rect x="13.5" y="62.1" width="36.9" height="46.2" fill="none" stroke="#626264" stroke-width="0.75"/><rect x="51.5" y="62.1" width="24.1" height="46.2" fill="none" stroke="#626264" stroke-width="0.75"/><path d="M17 19 V24" stroke="#555" stroke-width="1.2" stroke-dasharray="1.2 0.6" opacity="0.8"/><path d="M43 72 V88" stroke="#555" stroke-width="1.2" stroke-dasharray="1.2 0.6" opacity="0.8"/><path d="M14 44 H38 M14 50 H38 M14 56 H38 M20 39 V60 M26 39 V60 M32 39 V60 M50 30 C54 20 64 20 68 32 C70 44 66 54 60 58 M52 34 C54 44 50 54 46 58 M20 90 C26 84 34 96 42 88 M24 80 C30 78 36 84 40 80 M54 76 C60 64 70 64 74 76 M54 76 V108 M60 70 V108 M66 68 V108 M72 72 V108 M54 86 H75 M54 96 H75" stroke="#a9d3f2" stroke-width="0.6" fill="none" opacity="0.8"/></svg>
<div class="t g" style="left:107px;top:147px;width:89px;text-align:center;font-size:12px;color:#ffffff;font-weight:bold;">8</div>
</div>
<div style="left:5px;top:491px;width:204px;height:5px;background:linear-gradient(rgba(68,68,71,0),rgba(56,56,58,0));"></div>
<div style="left:5px;top:659px;width:204px;height:4px;background:linear-gradient(#39393b,#444447);"></div>
<div style="left:5px;top:496px;width:204px;height:163px;background:#78797d;border-top:1px solid #8e8f93;border-bottom:1px solid #97989c;">
<svg style="left:9px;top:17.5px;" width="88.6" height="125" viewBox="0 0 89 125" preserveAspectRatio="none"><rect width="89" height="125" fill="#fff"/><rect x="4.8" y="8.2" width="79.4" height="109.6" fill="none" stroke="#aaa2f2" stroke-width="0.9"/><path d="M4.8 5.5 V8 M84.2 5.5 V8 M4.8 118 V120.5 M84.2 118 V120.5 M3 8.2 H4.8 M84.2 8.2 H86 M3 117.8 H4.8 M84.2 117.8 H86" stroke="#aaa2f2" stroke-width="0.8"/><path d="M42 6.2 H47 M44.5 5 V7.5 M42 119.8 H47 M44.5 118.5 V121 M3.4 60 V66 M2.4 63 H4.8 M85.6 60 V66 M84.2 63 H86.6" stroke="#aaa2f2" stroke-width="0.9"/><rect x="12.9" y="16.8" width="63.8" height="93.2" fill="none" stroke="#c4c0ee" stroke-width="0.8"/></svg>
<div class="t g" style="left:9px;top:147px;width:89px;text-align:center;font-size:12px;color:#cfcfd2;">11</div>
<div style="left:102.5px;top:1px;width:97.5px;height:160px;background:linear-gradient(#5d5d60,#49494c);border:1px solid #3a3a3c;border-radius:3px;"></div>
<div style="left:106.2px;top:16.7px;width:89px;height:125.5px;background:#1e1e20;"></div>
<svg style="left:107px;top:17.5px;" width="88.6" height="125" viewBox="0 0 89 125" preserveAspectRatio="none"><rect width="89" height="125" fill="#fff"/><rect x="4.8" y="8.2" width="79.4" height="109.6" fill="none" stroke="#aaa2f2" stroke-width="0.9"/><path d="M4.8 5.5 V8 M84.2 5.5 V8 M4.8 118 V120.5 M84.2 118 V120.5 M3 8.2 H4.8 M84.2 8.2 H86 M3 117.8 H4.8 M84.2 117.8 H86" stroke="#aaa2f2" stroke-width="0.8"/><path d="M42 6.2 H47 M44.5 5 V7.5 M42 119.8 H47 M44.5 118.5 V121 M3.4 60 V66 M2.4 63 H4.8 M85.6 60 V66 M84.2 63 H86.6" stroke="#aaa2f2" stroke-width="0.9"/><rect x="12.9" y="16.8" width="63.8" height="93.2" fill="none" stroke="#c4c0ee" stroke-width="0.8"/></svg>
<div class="t g" style="left:107px;top:147px;width:89px;text-align:center;font-size:12px;color:#ffffff;font-weight:bold;">10*</div>
</div>
<div style="left:5px;top:666px;width:204px;height:5px;background:linear-gradient(rgba(68,68,71,0),rgba(56,56,58,0));"></div>
<div style="left:5px;top:834px;width:204px;height:4px;background:linear-gradient(#39393b,#444447);"></div>
<div style="left:5px;top:671px;width:204px;height:163px;background:#78797d;border-top:1px solid #8e8f93;border-bottom:1px solid #97989c;">
<svg style="left:9px;top:17.5px;" width="88.6" height="125" viewBox="0 0 89 125" preserveAspectRatio="none"><rect width="89" height="125" fill="#fff"/><rect x="4.8" y="8.2" width="79.4" height="109.6" fill="none" stroke="#aaa2f2" stroke-width="0.9"/><path d="M4.8 5.5 V8 M84.2 5.5 V8 M4.8 118 V120.5 M84.2 118 V120.5 M3 8.2 H4.8 M84.2 8.2 H86 M3 117.8 H4.8 M84.2 117.8 H86" stroke="#aaa2f2" stroke-width="0.8"/><path d="M42 6.2 H47 M44.5 5 V7.5 M42 119.8 H47 M44.5 118.5 V121 M3.4 60 V66 M2.4 63 H4.8 M85.6 60 V66 M84.2 63 H86.6" stroke="#aaa2f2" stroke-width="0.9"/><rect x="12.9" y="16.8" width="63.8" height="93.2" fill="none" stroke="#c4c0ee" stroke-width="0.8"/></svg>
<div class="t g" style="left:9px;top:147px;width:89px;text-align:center;font-size:12px;color:#cfcfd2;">13</div>
<svg style="left:107px;top:17.5px;" width="88.6" height="125" viewBox="0 0 89 125" preserveAspectRatio="none"><rect width="89" height="125" fill="#fff"/><rect x="4.8" y="8.2" width="79.4" height="109.6" fill="none" stroke="#aaa2f2" stroke-width="0.9"/><path d="M4.8 5.5 V8 M84.2 5.5 V8 M4.8 118 V120.5 M84.2 118 V120.5 M3 8.2 H4.8 M84.2 8.2 H86 M3 117.8 H4.8 M84.2 117.8 H86" stroke="#aaa2f2" stroke-width="0.8"/><path d="M42 6.2 H47 M44.5 5 V7.5 M42 119.8 H47 M44.5 118.5 V121 M3.4 60 V66 M2.4 63 H4.8 M85.6 60 V66 M84.2 63 H86.6" stroke="#aaa2f2" stroke-width="0.9"/><rect x="12.9" y="16.8" width="63.8" height="93.2" fill="none" stroke="#c4c0ee" stroke-width="0.8"/></svg>
<div class="t g" style="left:107px;top:147px;width:89px;text-align:center;font-size:12px;color:#cfcfd2;">12</div>
</div>
<div style="left:5px;top:841px;width:204px;height:5px;background:linear-gradient(rgba(68,68,71,0),rgba(56,56,58,0));"></div>
<div style="left:5px;top:1009px;width:204px;height:4px;background:linear-gradient(#39393b,#444447);"></div>
<div style="left:5px;top:846px;width:204px;height:163px;background:#78797d;border-top:1px solid #8e8f93;border-bottom:1px solid #97989c;">
<svg style="left:9px;top:17.5px;" width="88.6" height="125" viewBox="0 0 89 125" preserveAspectRatio="none"><rect width="89" height="125" fill="#fff"/><rect x="4.8" y="8.2" width="79.4" height="109.6" fill="none" stroke="#aaa2f2" stroke-width="0.9"/><path d="M4.8 5.5 V8 M84.2 5.5 V8 M4.8 118 V120.5 M84.2 118 V120.5 M3 8.2 H4.8 M84.2 8.2 H86 M3 117.8 H4.8 M84.2 117.8 H86" stroke="#aaa2f2" stroke-width="0.8"/><path d="M42 6.2 H47 M44.5 5 V7.5 M42 119.8 H47 M44.5 118.5 V121 M3.4 60 V66 M2.4 63 H4.8 M85.6 60 V66 M84.2 63 H86.6" stroke="#aaa2f2" stroke-width="0.9"/><rect x="12.9" y="16.8" width="63.8" height="93.2" fill="none" stroke="#c4c0ee" stroke-width="0.8"/></svg>
<div class="t g" style="left:9px;top:147px;width:89px;text-align:center;font-size:12px;color:#cfcfd2;">15</div>
<svg style="left:107px;top:17.5px;" width="88.6" height="125" viewBox="0 0 89 125" preserveAspectRatio="none"><rect width="89" height="125" fill="#fff"/><rect x="4.8" y="8.2" width="79.4" height="109.6" fill="none" stroke="#aaa2f2" stroke-width="0.9"/><path d="M4.8 5.5 V8 M84.2 5.5 V8 M4.8 118 V120.5 M84.2 118 V120.5 M3 8.2 H4.8 M84.2 8.2 H86 M3 117.8 H4.8 M84.2 117.8 H86" stroke="#aaa2f2" stroke-width="0.8"/><path d="M42 6.2 H47 M44.5 5 V7.5 M42 119.8 H47 M44.5 118.5 V121 M3.4 60 V66 M2.4 63 H4.8 M85.6 60 V66 M84.2 63 H86.6" stroke="#aaa2f2" stroke-width="0.9"/><rect x="12.9" y="16.8" width="63.8" height="93.2" fill="none" stroke="#c4c0ee" stroke-width="0.8"/></svg>
<div class="t g" style="left:107px;top:147px;width:89px;text-align:center;font-size:12px;color:#cfcfd2;">14</div>
</div>
</div>
<div style="left:221px;top:1026px;width:227px;height:13px;background:#707175;"></div>
<div style="left:221px;top:1026px;width:227px;height:1px;background:#5c5d60;"></div>
<div style="left:222px;top:1027px;width:22px;height:11px;background:#7b7c80;border:1px solid #56575a;"></div>
<div style="left:246px;top:1027px;width:70px;height:11px;background:#7b7c80;border:1px solid #56575a;"></div>
<svg style="left:247px;top:1028px;" width="68" height="9" viewBox="0 0 68 9"><path d="M0 9 L68 2 V9 Z" fill="#4b4b4e"/></svg>
<svg style="left:320px;top:1027px;" width="13" height="13" viewBox="0 0 13 13"><circle cx="5.4" cy="5.4" r="4.4" fill="#f4f4f4" stroke="#111" stroke-width="1.2"/><path d="M8.6 8.6 L12 12" stroke="#111" stroke-width="2"/><path d="M3 5.4 H7.8" stroke="#111" stroke-width="1.4"/></svg>
<svg style="left:340px;top:1027px;" width="13" height="13" viewBox="0 0 13 13"><circle cx="5.4" cy="5.4" r="4.4" fill="#f4f4f4" stroke="#111" stroke-width="1.2"/><path d="M8.6 8.6 L12 12" stroke="#111" stroke-width="2"/><path d="M3 5.4 H7.8" stroke="#111" stroke-width="1.4"/><path d="M5.4 3 V7.8" stroke="#111" stroke-width="1.4"/></svg>
<svg style="left:362px;top:1027px;" width="15" height="12" viewBox="0 0 15 12"><rect x="0.5" y="0.5" width="9" height="7" fill="#111"/><rect x="4.5" y="3.5" width="10" height="8" fill="#f4f4f4" stroke="#111"/><path d="M3 2 L11 9.5" stroke="#111" stroke-width="1.6"/><path d="M12 10.5 L7.6 9.6 L11 6.4 Z" fill="#111"/></svg>
<div style="left:427px;top:1027px;width:10px;height:11px;background:#7b7c80;border:1px solid #8b8c90;"></div>
<div style="left:448px;top:74px;width:1224px;height:22px;background:#4d4d50;"></div>
<div style="left:448px;top:74px;width:6px;height:965px;background:#76777b;"></div>
<div style="left:449px;top:74px;width:1px;height:965px;background:#8d8e92;"></div>
<div style="left:453px;top:74px;width:1px;height:965px;background:#5a5b5e;"></div>
<div style="left:454px;top:95px;width:1214px;height:2px;background:#3c3c3e;"></div>
<div style="left:454px;top:75px;width:98px;height:20px;background:#808185;border-top:1px solid #97989c;border-right:1px solid #5c5d60;"></div>
<div style="left:552px;top:75px;width:100px;height:20px;background:#67686b;border-top:1px solid #7a7b7e;border-right:1px solid #505154;border-left:1px solid #505154;"></div>
<div style="left:652px;top:75px;width:100px;height:20px;background:#67686b;border-top:1px solid #7a7b7e;border-right:1px solid #505154;border-left:1px solid #505154;"></div>
<div class="t g" style="left:457px;top:79px;font-size:11px;color:#eeeeee;transform:scaleX(0.8754);transform-origin:0 0;">夏コミ原稿*&nbsp; 9/28</div>
<div class="t g" style="left:557px;top:79px;font-size:11px;color:#a9aaad;transform:scaleX(0.8639);transform-origin:0 0;">夏コミ原稿*10/28</div>
<div class="t g" style="left:657px;top:79px;font-size:11px;color:#a9aaad;transform:scaleX(0.8182);transform-origin:0 0;">夏コミ原稿</div>
<svg style="left:538px;top:81px;" width="8" height="8" viewBox="0 0 8 8"><circle cx="4" cy="4" r="3.2" fill="#343436"/></svg>
<svg style="left:638px;top:81px;" width="8" height="8" viewBox="0 0 8 8"><circle cx="4" cy="4" r="3.2" fill="#3d3d40"/></svg>
<svg style="left:737px;top:80px;" width="10" height="10" viewBox="0 0 10 10"><path d="M1.5 1.5 L8.5 8.5 M8.5 1.5 L1.5 8.5" stroke="#3a3a3c" stroke-width="2.2"/></svg>
<div style="left:1658px;top:75px;width:11px;height:20px;background:#747579;border:1px solid #808185;border-radius:2px;"></div>
<svg style="left:1660px;top:82px;" width="8" height="6" viewBox="0 0 8 6"><path d="M1 1 H7 L4 4.6 Z" fill="#2e2e30"/></svg>
<div style="left:454px;top:97px;width:1200px;height:929px;background:#ffffff;"></div>
<div style="left:1638px;top:97px;width:1px;height:929px;background:#dcdcee;"></div>
<svg style="left:454px;top:97px;" width="1200" height="928" viewBox="454 97 1200 928"><path d="M802.4 401.3C802.6 405.7 803.9 418.6 803.7 427.3C803.5 435.9 802.6 444.6 801.3 453.2C800.0 461.8 798.1 470.3 796.0 478.8C793.8 487.2 791.1 495.7 788.3 503.9C785.5 512.2 782.3 520.3 779.0 528.3C775.8 536.3 772.5 544.2 768.7 551.8C764.9 559.4 761.0 566.9 756.2 574.1C751.5 581.3 746.2 588.6 740.1 595.0C734.0 601.5 726.9 608.3 719.5 612.9C712.1 617.4 703.9 621.4 695.8 622.3C687.8 623.3 678.8 621.7 671.2 618.4C663.6 615.1 655.7 609.1 650.3 602.7C644.8 596.4 641.0 588.3 638.4 580.2C635.9 572.2 635.4 563.1 635.2 554.4C635.0 545.6 635.9 536.5 637.0 527.8C638.1 519.0 639.8 510.4 641.9 501.9C644.1 493.5 646.7 485.1 649.8 477.1C652.8 469.0 656.4 461.1 660.4 453.4C664.3 445.7 668.7 438.3 673.6 431.1C678.4 424.0 683.6 417.0 689.2 410.4C694.8 403.8 700.9 397.5 707.2 391.5C713.5 385.6 720.3 379.9 727.2 374.7C734.2 369.5 741.5 364.6 749.0 360.3C756.5 355.9 764.3 351.9 772.2 348.4C780.1 344.9 788.3 341.9 796.6 339.4C804.9 337.0 813.3 335.0 821.9 333.6C830.4 332.3 839.1 331.5 847.7 331.3C856.4 331.1 865.2 331.5 873.8 332.5C882.4 333.5 891.1 335.1 899.6 337.3C908.0 339.4 916.4 342.2 924.4 345.5C932.4 348.8 940.3 352.7 947.8 357.1C955.2 361.5 962.5 366.5 969.1 372.0C975.8 377.5 982.1 383.6 987.7 390.1C993.3 396.7 998.4 403.8 1002.7 411.2C1006.9 418.7 1010.5 426.7 1013.4 434.9C1016.4 443.1 1018.6 451.7 1020.2 460.2C1021.9 468.8 1022.8 477.6 1023.3 486.2C1023.7 494.9 1023.5 503.6 1022.8 512.2C1022.1 520.8 1020.9 529.4 1019.1 537.9C1017.3 546.3 1015.0 554.7 1012.3 563.0C1009.5 571.2 1006.3 579.3 1002.6 587.2C998.9 595.1 994.9 602.9 990.2 610.2C985.6 617.5 980.5 624.7 974.6 630.9C968.7 637.1 962.1 642.9 954.7 647.4C947.2 652.0 938.4 656.1 930.0 658.0C921.5 660.0 911.9 661.1 904.0 659.3C896.2 657.4 888.5 653.0 882.8 647.1C877.1 641.3 872.5 632.5 869.9 624.4C867.2 616.2 866.6 606.9 867.1 598.3C867.6 589.7 870.2 581.1 872.6 572.7C875.1 564.4 878.4 556.2 881.8 548.2C885.3 540.2 889.2 532.5 893.3 524.8C897.4 517.2 901.9 509.8 906.6 502.5C911.3 495.2 916.3 488.1 921.5 481.3C926.7 474.4 932.2 467.6 937.9 461.2C943.6 454.7 949.6 448.4 955.8 442.4C962.0 436.4 968.5 430.6 975.2 425.0C982.0 419.5 989.0 414.3 996.1 409.3C1003.3 404.4 1010.8 399.8 1018.4 395.6C1026.0 391.4 1033.8 387.6 1041.8 384.2C1049.8 380.9 1058.0 377.9 1066.3 375.5C1074.6 373.1 1083.0 371.2 1091.6 369.8C1100.2 368.5 1108.9 367.7 1117.7 367.6C1126.4 367.4 1135.2 367.7 1143.9 368.7C1152.6 369.6 1161.4 371.1 1169.9 373.2C1178.4 375.2 1186.8 377.8 1194.9 380.9C1203.0 384.1 1210.9 387.8 1218.4 392.0C1225.9 396.2 1233.1 400.9 1239.8 406.2C1246.5 411.4 1252.9 417.2 1258.6 423.5C1264.3 429.8 1269.6 436.6 1274.1 443.9C1278.7 451.1 1282.6 459.0 1285.9 467.0C1289.3 475.0 1291.9 483.6 1294.0 492.1C1296.0 500.7 1297.4 509.6 1298.2 518.3C1298.9 527.1 1299.0 536.1 1298.4 544.8C1297.8 553.5 1296.5 562.2 1294.7 570.6C1292.9 579.1 1290.4 587.4 1287.6 595.5C1284.8 603.5 1281.6 611.5 1277.9 619.1C1274.1 626.7 1270.3 634.3 1265.3 641.2C1260.2 648.2 1254.3 655.1 1247.7 660.9C1241.1 666.8 1233.4 672.3 1225.7 676.2C1218.0 680.2 1209.5 683.4 1201.3 684.7C1193.2 685.9 1184.5 686.1 1176.7 683.6C1169.0 681.0 1161.2 675.3 1155.1 669.2C1148.9 663.2 1143.7 654.9 1139.7 647.2C1135.7 639.5 1133.0 631.2 1131.1 622.9C1129.2 614.6 1128.4 606.0 1128.1 597.4C1127.7 588.8 1128.2 580.1 1129.2 571.5C1130.1 562.9 1131.7 554.4 1133.7 545.9C1135.8 537.5 1138.4 529.1 1141.4 520.9C1144.4 512.7 1147.9 504.6 1151.7 496.7C1155.6 488.9 1159.8 481.2 1164.4 473.8C1169.0 466.4 1174.0 459.2 1179.3 452.3C1184.6 445.4 1190.2 438.8 1196.1 432.5C1202.0 426.3 1208.3 420.3 1214.8 414.6C1221.3 409.0 1228.2 403.7 1235.3 398.8C1242.4 393.8 1249.8 389.2 1257.4 385.1C1265.0 381.1 1273.0 377.3 1281.0 374.3C1289.1 371.3 1297.5 368.7 1305.9 367.1C1314.4 365.4 1323.1 364.4 1331.8 364.4C1340.5 364.4 1349.5 365.2 1358.1 366.9C1366.8 368.6 1375.5 371.2 1383.6 374.6C1391.7 377.9 1399.6 382.1 1406.6 387.1C1413.6 392.0 1420.1 397.7 1425.6 404.1C1431.0 410.5 1435.5 417.7 1439.1 425.4C1442.7 433.0 1445.3 441.3 1447.2 449.8C1449.1 458.2 1450.1 467.2 1450.6 476.0C1451.0 484.7 1450.6 493.8 1449.8 502.5C1448.9 511.2 1447.4 519.8 1445.3 528.2C1443.2 536.5 1440.4 544.7 1437.0 552.5C1433.5 560.4 1429.4 568.0 1424.5 575.2C1419.6 582.3 1414.0 589.6 1407.6 595.6C1401.2 601.7 1393.5 609.1 1386.0 611.2C1378.5 613.3 1368.7 612.4 1362.5 608.2C1356.4 604.1 1352.1 594.2 1348.8 586.4C1345.6 578.5 1344.0 569.6 1343.1 561.0C1342.2 552.5 1342.6 543.8 1343.5 535.2C1344.4 526.6 1346.3 517.9 1348.6 509.4C1350.8 500.9 1353.9 492.4 1357.0 484.2C1360.2 476.0 1363.7 468.0 1367.5 460.3C1371.3 452.5 1375.3 445.0 1379.8 437.8C1384.2 430.6 1389.0 423.5 1394.4 416.8C1399.8 410.1 1405.8 403.4 1412.2 397.4C1418.6 391.5 1425.5 385.7 1432.8 380.9C1440.1 376.1 1447.8 371.9 1455.8 368.8C1463.8 365.8 1472.3 363.5 1480.8 362.5C1489.3 361.6 1498.3 361.7 1506.8 363.1C1515.3 364.4 1524.1 366.9 1531.9 370.5C1539.8 374.0 1547.3 378.9 1553.9 384.4C1560.5 389.8 1566.4 396.4 1571.5 403.4C1576.6 410.3 1580.7 418.1 1584.3 426.0C1587.9 433.9 1590.8 442.3 1593.3 450.6C1595.9 458.9 1598.0 467.4 1599.6 475.9C1601.3 484.4 1602.5 493.0 1603.2 501.7C1604.0 510.3 1604.3 519.0 1604.1 527.6C1604.0 536.3 1603.4 545.0 1602.4 553.6C1601.4 562.2 1599.9 570.8 1598.1 579.3C1596.3 587.8 1594.0 596.3 1591.6 604.6C1589.2 613.0 1586.4 621.3 1583.5 629.5C1580.6 637.6 1575.8 649.6 1574.3 653.7" fill="none" stroke="#1794e3" stroke-width="1.75" stroke-linecap="round" stroke-linejoin="round"/></svg>
<div style="left:1654px;top:97px;width:13px;height:929px;background:#6d6e72;"></div>
<div style="left:1654px;top:97px;width:1px;height:929px;background:#5a5b5e;"></div>
<div style="left:1655px;top:319px;width:11px;height:137px;background:#7b7c80;border:1px solid #8b8c90;border-radius:2px;"></div>
<svg style="left:1656.5px;top:383px;" width="8" height="9" viewBox="0 0 8 9"><path d="M1 1.5 H7 M1 4.5 H7 M1 7.5 H7" stroke="#56575a" stroke-width="1.2"/></svg>
<div style="left:1655px;top:98px;width:11px;height:11px;background:#7b7c80;border:1px solid #8b8c90;border-radius:1px;"></div>
<svg style="left:1656.5px;top:101px;" width="8" height="6" viewBox="0 0 8 6"><path d="M1 5 H7 L4 1.4 Z" fill="#47484b"/></svg>
<div style="left:1655px;top:1015px;width:11px;height:11px;background:#7b7c80;border:1px solid #8b8c90;border-radius:1px;"></div>
<svg style="left:1656.5px;top:1018px;" width="8" height="6" viewBox="0 0 8 6"><path d="M1 1 H7 L4 4.6 Z" fill="#47484b"/></svg>
<div style="left:454px;top:1026px;width:1214px;height:13px;background:#707175;"></div>
<div style="left:454px;top:1026px;width:1214px;height:1px;background:#5c5d60;"></div>
<div style="left:455px;top:1027px;width:50px;height:11px;background:#7b7c80;border:1px solid #56575a;"></div>
<svg style="left:456px;top:1028px;" width="48" height="9" viewBox="0 0 48 9"><path d="M0 9 L48 3 V9 Z" fill="#4b4b4e"/></svg>
<div class="t g" style="left:456px;top:1027px;font-size:11px;color:#f4f4f4;transform:scaleX(0.8869);transform-origin:0 0;">66.7</div>
<div style="left:508px;top:1027px;width:44px;height:11px;background:#7b7c80;border:1px solid #56575a;"></div>
<svg style="left:509px;top:1028px;" width="42" height="9" viewBox="0 0 42 9"><path d="M0 9 L42 1 V9 Z" fill="#4b4b4e"/></svg>
<svg style="left:557px;top:1027px;" width="13" height="13" viewBox="0 0 13 13"><circle cx="5.4" cy="5.4" r="4.4" fill="#f4f4f4" stroke="#111" stroke-width="1.2"/><path d="M8.6 8.6 L12 12" stroke="#111" stroke-width="2"/><path d="M3 5.4 H7.8" stroke="#111" stroke-width="1.4"/></svg>
<svg style="left:577px;top:1027px;" width="13" height="13" viewBox="0 0 13 13"><circle cx="5.4" cy="5.4" r="4.4" fill="#f4f4f4" stroke="#111" stroke-width="1.2"/><path d="M8.6 8.6 L12 12" stroke="#111" stroke-width="2"/><path d="M3 5.4 H7.8" stroke="#111" stroke-width="1.4"/><path d="M5.4 3 V7.8" stroke="#111" stroke-width="1.4"/></svg>
<div style="left:598px;top:1027px;width:12px;height:11px;background:#111;border:2px solid #111;outline:0;"><div style="left:1px;top:1px;width:6px;height:5px;border:1px solid #777;"></div></div>
<div style="left:615px;top:1027px;width:47px;height:11px;background:#7b7c80;border:1px solid #56575a;"></div>
<svg style="left:616px;top:1028px;" width="45" height="9" viewBox="0 0 45 9"><path d="M0 0 H6 C14 0 22 9 45 9 H0 Z" fill="#4b4b4e"/></svg>
<div class="t g" style="left:620px;top:1027px;font-size:11px;color:#f4f4f4;transform:scaleX(0.9152);transform-origin:0 0;">0.0</div>
<div style="left:665px;top:1027px;width:47px;height:11px;background:#7b7c80;border:1px solid #56575a;"></div>
<svg style="left:666px;top:1028px;" width="45" height="9" viewBox="0 0 45 9"><path d="M0 9 C10 9 14 0 24 0 C32 0 38 6 45 9 Z" fill="#4b4b4e"/></svg>
<svg style="left:718px;top:1027px;" width="13" height="12" viewBox="0 0 13 12"><g transform=""><path d="M3 10.5 C1 4 8 0.5 11 5.5 L11.5 10" stroke="#111" stroke-width="1.8" fill="none"/><path d="M0 6.5 L6 7.5 L2.6 12 Z" fill="#111"/></g></svg>
<svg style="left:737px;top:1027px;" width="13" height="12" viewBox="0 0 13 12"><g transform="translate(13,0) scale(-1,1)"><path d="M3 10.5 C1 4 8 0.5 11 5.5 L11.5 10" stroke="#111" stroke-width="1.8" fill="none"/><path d="M0 6.5 L6 7.5 L2.6 12 Z" fill="#111"/></g></svg>
<svg style="left:757px;top:1027px;" width="13" height="12" viewBox="0 0 13 12"><circle cx="6.5" cy="6" r="4.2" fill="none" stroke="#5d5e61" stroke-width="2" stroke-dasharray="2 1.3"/></svg>
<div style="left:774px;top:1027px;width:10px;height:11px;background:#7b7c80;border:1px solid #8b8c90;border-radius:1px;"></div>
<svg style="left:776px;top:1029px;" width="6" height="8" viewBox="0 0 6 8"><path d="M5 0.6 V7.4 L1 4 Z" fill="#47484b"/></svg>
<div style="left:785px;top:1027px;width:858px;height:11px;background:#6d6e72;"></div>
<div style="left:1212px;top:1027px;width:200px;height:11px;background:#7b7c80;border:1px solid #8b8c90;border-radius:2px;"></div>
<svg style="left:1307px;top:1028px;" width="9" height="9" viewBox="0 0 9 9"><path d="M1.5 1 V8 M4.5 1 V8 M7.5 1 V8" stroke="#56575a" stroke-width="1.2"/></svg>
<div style="left:1643px;top:1027px;width:10px;height:11px;background:#7b7c80;border:1px solid #8b8c90;border-radius:1px;"></div>
<svg style="left:1645px;top:1029px;" width="6" height="8" viewBox="0 0 6 8"><path d="M1 0.6 V7.4 L5 4 Z" fill="#47484b"/></svg>
<div style="left:1655px;top:1027px;width:12px;height:12px;background:#77787c;"></div>
<div style="left:0px;top:1039px;width:1919px;height:1px;background:#e8e8e8;"></div>
<div style="left:0px;top:1040px;width:1919px;height:2px;background:#000;"></div>
<div style="left:538px;top:1040px;width:33px;height:2px;background:#8c8a2c;"></div>
<div style="left:1667px;top:74px;width:1px;height:965px;background:#4e4f52;"></div>
<div style="left:1668px;top:74px;width:1px;height:965px;background:#8a8b8f;"></div>
<div style="left:1669px;top:74px;width:1px;height:965px;background:#5a5b5e;"></div>
<div style="left:1670px;top:49px;width:41px;height:990px;background:#4b4b4e;"></div>
<div style="left:1670px;top:49px;width:41px;height:19px;background:#4e4e51;"></div>
<div style="left:1672px;top:68px;width:36px;height:1px;background:#3a3a3c;"></div>
<div style="left:1672px;top:68px;width:1px;height:971px;background:#3a3a3c;"></div>
<div style="left:1710px;top:49px;width:2px;height:990px;background:#5a5b5e;"></div>
<div style="left:1711px;top:49px;width:1px;height:990px;background:#85868a;"></div>
<svg style="left:1673px;top:51px;" width="14" height="15" viewBox="0 0 14 15"><path d="M0 0.5 H3 L6 7.5 L3 14 H0 L3 7.5 Z M4.6 0.5 H7.6 L10.6 7.5 L7.6 14 H4.6 L7.6 7.5 Z" fill="#97989c"/></svg>
<svg style="left:1699px;top:51px;" width="10" height="15" viewBox="0 0 10 15"><path d="M8.4 0.5 H5 L1.4 7.5 L5 14 H8.4 L5.4 7.5 Z" fill="#97989c"/></svg>
<div style="left:1674px;top:69px;width:35px;height:41px;background:#3c3c3f;"></div>
<div style="left:1675px;top:70px;width:33px;height:39px;background:#7b7c80;border-top:1px solid #85868a;border-left:1px solid #808185;"></div>
<svg style="left:1675px;top:70px;" width="33" height="39" viewBox="0 0 33 39"><defs><linearGradient id="fo0" x1="0" y1="0" x2="1" y2="1"><stop offset="0" stop-color="#f4f4f6"/><stop offset="0.45" stop-color="#b4b5b8"/><stop offset="1" stop-color="#707175"/></linearGradient></defs><path d="M4 23.6 V10.6 H11 L13 13.6 H20.4 C15 14.6 9.6 17.6 6.4 23.6 Z" fill="url(#fo0)"/><path d="M4 12.6 V10.3 H11.2 L13.2 13.3 H20.6" stroke="#2a2a2c" stroke-width="1.3" fill="none"/><path d="M13 14.6 H22" stroke="#5a5b5e" stroke-width="0.8" opacity="0.6"/><path d="M20.5 19.6 V25 M15 21.6 H26 M20.5 24.6 L18.6 30.6 M20.5 24.6 L22.4 30.6" stroke="#2a2a2c" stroke-width="1.7"/><circle cx="20.5" cy="18.6" r="1.7" fill="#2a2a2c"/></svg>
<div style="left:1674px;top:113px;width:35px;height:41px;background:#3c3c3f;"></div>
<div style="left:1675px;top:114px;width:33px;height:39px;background:#7b7c80;border-top:1px solid #85868a;border-left:1px solid #808185;"></div>
<svg style="left:1675px;top:114px;" width="33" height="39" viewBox="0 0 33 39"><defs><linearGradient id="fo1" x1="0" y1="0" x2="1" y2="1"><stop offset="0" stop-color="#f4f4f6"/><stop offset="0.45" stop-color="#b4b5b8"/><stop offset="1" stop-color="#707175"/></linearGradient></defs><path d="M4 23.6 V10.6 H11 L13 13.6 H20.4 C15 14.6 9.6 17.6 6.4 23.6 Z" fill="url(#fo1)"/><path d="M4 12.6 V10.3 H11.2 L13.2 13.3 H20.6" stroke="#2a2a2c" stroke-width="1.3" fill="none"/><path d="M13 14.6 H22" stroke="#5a5b5e" stroke-width="0.8" opacity="0.6"/><rect x="13.5" y="17.5" width="13.5" height="12.5" fill="#f4f4f4" stroke="#111" stroke-width="1.2"/><path d="M14.5 29 C16 23 21 20.6 26 23 V29 Z" fill="#2a2a2c"/><circle cx="23" cy="23.6" r="1.6" fill="#888"/></svg>
<div style="left:1674px;top:157px;width:35px;height:41px;background:#3c3c3f;"></div>
<div style="left:1675px;top:158px;width:33px;height:39px;background:#7b7c80;border-top:1px solid #85868a;border-left:1px solid #808185;"></div>
<svg style="left:1675px;top:158px;" width="33" height="39" viewBox="0 0 33 39"><defs><linearGradient id="fo2" x1="0" y1="0" x2="1" y2="1"><stop offset="0" stop-color="#f4f4f6"/><stop offset="0.45" stop-color="#b4b5b8"/><stop offset="1" stop-color="#707175"/></linearGradient></defs><path d="M4 23.6 V10.6 H11 L13 13.6 H20.4 C15 14.6 9.6 17.6 6.4 23.6 Z" fill="url(#fo2)"/><path d="M4 12.6 V10.3 H11.2 L13.2 13.3 H20.6" stroke="#2a2a2c" stroke-width="1.3" fill="none"/><path d="M13 14.6 H22" stroke="#5a5b5e" stroke-width="0.8" opacity="0.6"/><rect x="13.5" y="17.5" width="14" height="13" fill="#dcdcde"/><path d="M13.5 17.5 C19 21 19 27 13.5 30.5 Z M27.5 17.5 C22 21 22 27 27.5 30.5 Z M13.5 17.5 C17 23 24 23 27.5 17.5 Z M13.5 30.5 C17 25 24 25 27.5 30.5 Z" fill="#77787c"/></svg>
<div style="left:1674px;top:201px;width:35px;height:41px;background:#3c3c3f;"></div>
<div style="left:1675px;top:202px;width:33px;height:39px;background:#7b7c80;border-top:1px solid #85868a;border-left:1px solid #808185;"></div>
<svg style="left:1675px;top:202px;" width="33" height="39" viewBox="0 0 33 39"><defs><linearGradient id="fo3" x1="0" y1="0" x2="1" y2="1"><stop offset="0" stop-color="#f4f4f6"/><stop offset="0.45" stop-color="#b4b5b8"/><stop offset="1" stop-color="#707175"/></linearGradient></defs><path d="M4 23.6 V10.6 H11 L13 13.6 H20.4 C15 14.6 9.6 17.6 6.4 23.6 Z" fill="url(#fo3)"/><path d="M4 12.6 V10.3 H11.2 L13.2 13.3 H20.6" stroke="#2a2a2c" stroke-width="1.3" fill="none"/><path d="M13 14.6 H22" stroke="#5a5b5e" stroke-width="0.8" opacity="0.6"/><path d="M14 30 V22 C14 18.6 22.6 18.6 22.6 22 V30 Z" fill="#eee" stroke="#888" stroke-width="0.6"/><path d="M16 20.6 V30 M18.4 19.6 V30 M20.6 20.6 V30 M14 23 H22.6 M14 26 H22.6" stroke="#777" stroke-width="0.8"/><path d="M22 28 L27.6 30.6 L23.6 32 Z" fill="#111" stroke="#fff" stroke-width="0.7"/></svg>
<div style="left:1674px;top:245px;width:35px;height:41px;background:#3c3c3f;"></div>
<div style="left:1675px;top:246px;width:33px;height:39px;background:#7b7c80;border-top:1px solid #85868a;border-left:1px solid #808185;"></div>
<svg style="left:1675px;top:246px;" width="33" height="39" viewBox="0 0 33 39"><defs><linearGradient id="fo4" x1="0" y1="0" x2="1" y2="1"><stop offset="0" stop-color="#f4f4f6"/><stop offset="0.45" stop-color="#b4b5b8"/><stop offset="1" stop-color="#707175"/></linearGradient></defs><path d="M4 23.6 V10.6 H11 L13 13.6 H20.4 C15 14.6 9.6 17.6 6.4 23.6 Z" fill="url(#fo4)"/><path d="M4 12.6 V10.3 H11.2 L13.2 13.3 H20.6" stroke="#2a2a2c" stroke-width="1.3" fill="none"/><path d="M13 14.6 H22" stroke="#5a5b5e" stroke-width="0.8" opacity="0.6"/><path d="M14 21 L19 18 H27 V26 L22 30 H14 Z" fill="#fafafa" stroke="#444" stroke-width="0.9"/><path d="M14 21 H22 V30 M22 21 L27 18" stroke="#444" stroke-width="0.9" fill="none"/></svg>
<div style="left:1674px;top:289px;width:35px;height:41px;background:#3c3c3f;"></div>
<div style="left:1675px;top:290px;width:33px;height:39px;background:#7b7c80;border-top:1px solid #85868a;border-left:1px solid #808185;"></div>
<svg style="left:1675px;top:290px;" width="33" height="39" viewBox="0 0 33 39"><defs><linearGradient id="fo5" x1="0" y1="0" x2="1" y2="1"><stop offset="0" stop-color="#f4f4f6"/><stop offset="0.45" stop-color="#b4b5b8"/><stop offset="1" stop-color="#707175"/></linearGradient></defs><path d="M4 23.6 V10.6 H11 L13 13.6 H20.4 C15 14.6 9.6 17.6 6.4 23.6 Z" fill="url(#fo5)"/><path d="M4 12.6 V10.3 H11.2 L13.2 13.3 H20.6" stroke="#2a2a2c" stroke-width="1.3" fill="none"/><path d="M13 14.6 H22" stroke="#5a5b5e" stroke-width="0.8" opacity="0.6"/><path d="M20.5 16 V21 M20.5 27 V32 M12.6 24 H17.6 M23.4 24 H28.4 M14.6 18 L18.4 21.8 M26.4 18 L22.6 21.8 M14.6 30 L18.4 26.2 M26.4 30 L22.6 26.2" stroke="#1e1e20" stroke-width="1.8"/></svg>
<div style="left:1674px;top:333px;width:35px;height:41px;background:#3c3c3f;"></div>
<div style="left:1675px;top:334px;width:33px;height:39px;background:#7b7c80;border-top:1px solid #85868a;border-left:1px solid #808185;"></div>
<svg style="left:1675px;top:334px;" width="33" height="39" viewBox="0 0 33 39"><defs><linearGradient id="fo6" x1="0" y1="0" x2="1" y2="1"><stop offset="0" stop-color="#f4f4f6"/><stop offset="0.45" stop-color="#b4b5b8"/><stop offset="1" stop-color="#707175"/></linearGradient></defs><path d="M4 23.6 V10.6 H11 L13 13.6 H20.4 C15 14.6 9.6 17.6 6.4 23.6 Z" fill="url(#fo6)"/><path d="M4 12.6 V10.3 H11.2 L13.2 13.3 H20.6" stroke="#2a2a2c" stroke-width="1.3" fill="none"/><path d="M13 14.6 H22" stroke="#5a5b5e" stroke-width="0.8" opacity="0.6"/><rect x="13.5" y="18.5" width="14" height="12" fill="#f4f4f4" stroke="#111" stroke-width="1.2"/><path d="M14.5 29.5 L18 22 L20.4 26 L23 21 L26.6 29.5 Z" fill="#111"/></svg>
<div style="left:1674px;top:377px;width:35px;height:41px;background:#3c3c3f;"></div>
<div style="left:1675px;top:378px;width:33px;height:39px;background:#7b7c80;border-top:1px solid #85868a;border-left:1px solid #808185;"></div>
<svg style="left:1675px;top:378px;" width="33" height="39" viewBox="0 0 33 39"><defs><linearGradient id="fo7" x1="0" y1="0" x2="1" y2="1"><stop offset="0" stop-color="#f4f4f6"/><stop offset="0.45" stop-color="#b4b5b8"/><stop offset="1" stop-color="#707175"/></linearGradient></defs><path d="M4 23.6 V10.6 H11 L13 13.6 H20.4 C15 14.6 9.6 17.6 6.4 23.6 Z" fill="url(#fo7)"/><path d="M4 12.6 V10.3 H11.2 L13.2 13.3 H20.6" stroke="#2a2a2c" stroke-width="1.3" fill="none"/><path d="M13 14.6 H22" stroke="#5a5b5e" stroke-width="0.8" opacity="0.6"/><rect x="13.5" y="20.5" width="14" height="10" fill="#77787c" stroke="#2a2a2c" stroke-width="1.2"/><path d="M16 29 L24 21 L27 23 L19 30 L16 30 Z" fill="#1e1e20"/></svg>
<div style="left:1674px;top:421px;width:35px;height:41px;background:#3c3c3f;"></div>
<div style="left:1675px;top:422px;width:33px;height:39px;background:#7b7c80;border-top:1px solid #85868a;border-left:1px solid #808185;"></div>
<svg style="left:1675px;top:422px;" width="33" height="39" viewBox="0 0 33 39"><defs><linearGradient id="fo8" x1="0" y1="0" x2="1" y2="1"><stop offset="0" stop-color="#f4f4f6"/><stop offset="0.45" stop-color="#b4b5b8"/><stop offset="1" stop-color="#707175"/></linearGradient></defs><path d="M4 23.6 V10.6 H11 L13 13.6 H20.4 C15 14.6 9.6 17.6 6.4 23.6 Z" fill="url(#fo8)"/><path d="M4 12.6 V10.3 H11.2 L13.2 13.3 H20.6" stroke="#2a2a2c" stroke-width="1.3" fill="none"/><path d="M13 14.6 H22" stroke="#5a5b5e" stroke-width="0.8" opacity="0.6"/><path d="M14 21 L19 18 H27 V26 L22 30 H14 Z" fill="#fafafa" stroke="#444" stroke-width="0.9"/><path d="M14 21 H22 V30 M22 21 L27 18" stroke="#444" stroke-width="0.9" fill="none"/></svg>
<div style="left:1674px;top:465px;width:35px;height:41px;background:#3c3c3f;"></div>
<div style="left:1675px;top:466px;width:33px;height:39px;background:#7b7c80;border-top:1px solid #85868a;border-left:1px solid #808185;"></div>
<svg style="left:1675px;top:466px;" width="33" height="39" viewBox="0 0 33 39"><defs><linearGradient id="fo9" x1="0" y1="0" x2="1" y2="1"><stop offset="0" stop-color="#f4f4f6"/><stop offset="0.45" stop-color="#b4b5b8"/><stop offset="1" stop-color="#707175"/></linearGradient></defs><path d="M4 23.6 V10.6 H11 L13 13.6 H20.4 C15 14.6 9.6 17.6 6.4 23.6 Z" fill="url(#fo9)"/><path d="M4 12.6 V10.3 H11.2 L13.2 13.3 H20.6" stroke="#2a2a2c" stroke-width="1.3" fill="none"/><path d="M13 14.6 H22" stroke="#5a5b5e" stroke-width="0.8" opacity="0.6"/><path d="M20.5 19.6 V25 M15 21.6 H26 M20.5 24.6 L18.6 30.6 M20.5 24.6 L22.4 30.6" stroke="#2a2a2c" stroke-width="1.7"/><circle cx="20.5" cy="18.6" r="1.7" fill="#2a2a2c"/></svg>
<div style="left:1712px;top:49px;width:207px;height:19px;background:#505053;"></div>
<div style="left:1712px;top:68px;width:207px;height:1px;background:#8a8b8f;"></div>
<svg style="left:1713px;top:51px;" width="14" height="15" viewBox="0 0 14 15"><path d="M0 0.5 H3 L6 7.5 L3 14 H0 L3 7.5 Z M4.6 0.5 H7.6 L10.6 7.5 L7.6 14 H4.6 L7.6 7.5 Z" fill="#97989c"/></svg>
<div style="left:1915px;top:69px;width:4px;height:970px;background:#77787c;"></div>
<div style="left:1915px;top:69px;width:1px;height:970px;background:#5a5b5e;"></div>
<div style="left:1712px;top:69px;width:203px;height:17px;background:#77787c;"></div>
<div style="left:1712px;top:86px;width:203px;height:1px;background:#85868a;"></div>
<div style="left:1713px;top:70px;width:17px;height:16px;background:#77787c;border-left:1px solid #5a5b5e;border-bottom:1px solid #5a5b5e;border-top:1px solid #8a8b8f;"></div>
<svg style="left:1717px;top:73px;" width="12" height="10" viewBox="0 0 12 10"><path d="M1 1 L4.6 4.6 L1 8.4 Z" fill="#a2a3a6"/><path d="M5.5 1.8 H11 M5.5 4.8 H11 M5.5 7.8 H11" stroke="#a2a3a6" stroke-width="1.5"/></svg>
<div style="left:1730px;top:71px;width:71px;height:17px;background:#7b7c80;border-top:1px solid #505154;border-left:1px solid #505154;border-right:1px solid #505154;border-radius:2px 2px 0 0;"></div>
<div style="left:1731px;top:72px;width:69px;height:1px;background:#8c8d91;"></div>
<div class="t g" style="left:1757px;top:77px;font-size:10px;color:#e9e9ea;transform:scaleX(0.6667);transform-origin:0 0;">ナビゲーター</div>
<div style="left:1802px;top:71px;width:27px;height:15px;background:#6c6d71;border-top:1px solid #505154;border-right:1px solid #505154;border-bottom:1px solid #58595c;border-radius:2px 2px 0 0;"></div>
<div style="left:1830px;top:71px;width:27px;height:15px;background:#6c6d71;border-top:1px solid #505154;border-right:1px solid #505154;border-bottom:1px solid #58595c;border-radius:2px 2px 0 0;"></div>
<svg style="left:1735px;top:72px;" width="20" height="18" viewBox="0 0 20 18"><rect x="6.5" y="5.5" width="11" height="9" fill="#f4f4f4" stroke="#d8d8da"/><rect x="1.5" y="1.5" width="11" height="9" fill="#fff" stroke="#d01020" stroke-width="1.6"/></svg>
<svg style="left:1806px;top:73px;" width="20" height="14" viewBox="0 0 20 14"><rect x="2" y="1.5" width="15" height="12" fill="#8c8d90" stroke="#5a5b5e"/><path d="M2 10 C6 5 10 9 17 6 V13.5 H2 Z" fill="#a4a5a8"/><rect x="2" y="1.5" width="15" height="2.4" fill="#4e4f52"/></svg>
<svg style="left:1834px;top:73px;" width="20" height="14" viewBox="0 0 20 14"><circle cx="10" cy="9" r="6.4" fill="#8e8f92" stroke="#5a5b5e"/><path d="M10 4 L14 8 H12 V12 H8 V8 H6 Z" fill="#b4b5b8"/><rect x="4" y="11" width="12" height="3.6" fill="#a4a5a8" stroke="#5a5b5e" stroke-width="0.6"/></svg>
<div style="left:1713px;top:91px;width:202px;height:98px;background:#4a4a4d;border-top:1px solid #3a3a3c;"></div>
<div style="left:1786px;top:102px;width:54px;height:76px;background:#ffffff;"></div>
<div style="left:1813px;top:114px;width:20px;height:16px;border:1px solid #e00010;"></div>
<svg style="left:1786px;top:102px;" width="54" height="76" viewBox="0 0 54 76"><path d="M22 38 H44 M30 36 L34 32 L36 38 M12 56 C16 52 20 60 24 54 M14 52 V60 M20 52 V62 M40 54 C42 50 44 56 46 52" stroke="#c9def4" stroke-width="0.7" fill="none" opacity="0.8"/></svg>
<div style="left:1717px;top:197px;width:89px;height:12px;background:#7b7c80;border:1px solid #4e4f52;"></div>
<svg style="left:1718px;top:198px;" width="87" height="10" viewBox="0 0 87 10"><path d="M0 10 L26 10 L78 0 H87 V10 Z" fill="#434346"/><path d="M0 10 L87 0 V10 Z" fill="#434346" opacity="0.0"/></svg>
<div style="left:1717px;top:217px;width:89px;height:12px;background:#7b7c80;border:1px solid #4e4f52;"></div>
<svg style="left:1718px;top:218px;" width="87" height="10" viewBox="0 0 87 10"><path d="M0 0 H5 L12 10 H0 Z" fill="#434346"/><path d="M32 10 C44 10 50 0 62 0 C72 0 80 6 87 10 Z" fill="#434346"/></svg>
<div class="t g" style="left:1720px;top:197px;font-size:12px;color:#f6f6f6;transform:scaleX(0.8134);transform-origin:0 0;">66.7</div>
<div class="t g" style="left:1724px;top:217px;font-size:12px;color:#f6f6f6;transform:scaleX(0.8390);transform-origin:0 0;">0.0</div>
<div style="left:1763px;top:193px;width:4px;height:20px;background:#77787c;border:1px solid #909195;border-radius:1px;"></div>
<div style="left:1760px;top:213px;width:4px;height:20px;background:#77787c;border:1px solid #909195;border-radius:1px;"></div>
<svg style="left:1812px;top:196px;" width="18" height="18" viewBox="0 0 18 18"><circle cx="8" cy="7.6" r="5.6" fill="#fafafa" stroke="#111" stroke-width="1.3"/><circle cx="8" cy="7.6" r="3.8" fill="none" stroke="#111" stroke-width="0.8"/><path d="M12 12 L15.6 16.4" stroke="#111" stroke-width="2.2" stroke-linecap="round"/><path d="M5.8 7.6 H10.2" stroke="#111" stroke-width="1.5"/></svg>
<svg style="left:1832px;top:196px;" width="18" height="18" viewBox="0 0 18 18"><circle cx="8" cy="7.6" r="5.6" fill="#fafafa" stroke="#111" stroke-width="1.3"/><circle cx="8" cy="7.6" r="3.8" fill="none" stroke="#111" stroke-width="0.8"/><path d="M12 12 L15.6 16.4" stroke="#111" stroke-width="2.2" stroke-linecap="round"/><path d="M5.8 7.6 H10.2" stroke="#111" stroke-width="1.5"/><path d="M8 5.4 V9.8" stroke="#111" stroke-width="1.5"/></svg>
<div style="left:1853px;top:195px;width:16px;height:16px;background:#0c0c0e;"><div style="left:3px;top:3px;width:10px;height:10px;border:1px solid #4a4a4c;background:#1c1c1e;"></div></div>
<svg style="left:1876px;top:195px;" width="17" height="17" viewBox="0 0 17 17"><rect x="0.5" y="0.5" width="11" height="9" fill="#0c0c0e"/><rect x="1.5" y="3" width="9" height="5.6" fill="#f4f4f4"/><rect x="5.5" y="6.5" width="11" height="9" fill="#f4f4f4" stroke="#c8c8ca" stroke-width="0.6"/><path d="M5 4 L13 12" stroke="#0c0c0e" stroke-width="2"/><path d="M15 14.4 L9.6 13 L13.6 9 Z" fill="#0c0c0e"/></svg>
<svg style="left:1897px;top:195px;" width="17" height="17" viewBox="0 0 17 17"><rect x="0.5" y="0.5" width="16" height="15" fill="#f4f4f4"/><rect x="0.5" y="0.5" width="16" height="3" fill="#0c0c0e"/><path d="M4 6 L13 13" stroke="#0c0c0e" stroke-width="2"/><path d="M15 14.6 L9.6 13.4 L13 9.6 Z M2.4 4.6 L7.6 5.8 L4.4 9.4 Z" fill="#0c0c0e"/></svg>
<svg style="left:1812px;top:214px;" width="18" height="18" viewBox="0 0 18 18"><g transform=""><path d="M4.6 12 C3 5 11 1.6 14 7.6 C14.8 9.6 14.6 12 14 14" stroke="#0c0c0e" stroke-width="2.4" fill="none"/><path d="M0.6 9 L8.6 10 L4 15.6 Z" fill="#0c0c0e"/></g></svg>
<svg style="left:1831px;top:214px;" width="18" height="18" viewBox="0 0 18 18"><g transform="translate(18,0) scale(-1,1)"><path d="M4.6 12 C3 5 11 1.6 14 7.6 C14.8 9.6 14.6 12 14 14" stroke="#0c0c0e" stroke-width="2.4" fill="none"/><path d="M0.6 9 L8.6 10 L4 15.6 Z" fill="#0c0c0e"/></g></svg>
<svg style="left:1852px;top:214px;" width="18" height="18" viewBox="0 0 18 18"><circle cx="9" cy="9" r="5.8" fill="none" stroke="#5a5b5e" stroke-width="2.6" stroke-dasharray="2.6 1.9"/></svg>
<svg style="left:1876px;top:214px;" width="18" height="18" viewBox="0 0 18 18"><path d="M4 9 C4 3 13 3 13.6 8" stroke="#0c0c0e" stroke-width="2" fill="none"/><path d="M9 4 V17" stroke="#0c0c0e" stroke-width="1.2" stroke-dasharray="1.6 1.2"/><path d="M10.6 12.6 L16.6 8.6 V16.6 Z" fill="#0c0c0e"/><path d="M2 10 L6.6 13.4 L2 16.6 Z" fill="#f4f4f4"/></svg>
<svg style="left:1896px;top:214px;" width="18" height="18" viewBox="0 0 18 18"><path d="M5 13 C2 8 7 3 12 5" stroke="#0c0c0e" stroke-width="2" fill="none"/><path d="M8 10 H17" stroke="#0c0c0e" stroke-width="1.2" stroke-dasharray="1.6 1.2"/><path d="M8.6 2 H16.6 L12.6 8 Z" fill="#0c0c0e"/><path d="M8.6 17.6 H16.6 L12.6 12.6 Z" fill="#f4f4f4"/></svg>
<div style="left:1712px;top:234px;width:203px;height:1px;background:#5e5f62;"></div>
<div style="left:1712px;top:235px;width:203px;height:1px;background:#8c8d91;"></div>
<div style="left:1712px;top:236px;width:203px;height:17px;background:#77787c;"></div>
<div style="left:1712px;top:253px;width:203px;height:1px;background:#85868a;"></div>
<div style="left:1713px;top:237px;width:17px;height:16px;background:#77787c;border-left:1px solid #5a5b5e;border-bottom:1px solid #5a5b5e;border-top:1px solid #8a8b8f;"></div>
<svg style="left:1717px;top:240px;" width="12" height="10" viewBox="0 0 12 10"><path d="M1 1 L4.6 4.6 L1 8.4 Z" fill="#a2a3a6"/><path d="M5.5 1.8 H11 M5.5 4.8 H11 M5.5 7.8 H11" stroke="#a2a3a6" stroke-width="1.5"/></svg>
<div style="left:1730px;top:238px;width:93px;height:17px;background:#7b7c80;border-top:1px solid #505154;border-left:1px solid #505154;border-right:1px solid #505154;border-radius:2px 2px 0 0;"></div>
<div style="left:1731px;top:239px;width:91px;height:1px;background:#8c8d91;"></div>
<div class="t g" style="left:1757px;top:244px;font-size:10px;color:#e9e9ea;transform:scaleX(0.6889);transform-origin:0 0;">レイヤープロパティ</div>
<div style="left:1824px;top:238px;width:27px;height:15px;background:#6c6d71;border-top:1px solid #505154;border-right:1px solid #505154;border-bottom:1px solid #58595c;border-radius:2px 2px 0 0;"></div>
<div style="left:1852px;top:238px;width:27px;height:15px;background:#6c6d71;border-top:1px solid #505154;border-right:1px solid #505154;border-bottom:1px solid #58595c;border-radius:2px 2px 0 0;"></div>
<svg style="left:1733px;top:237px;" width="24" height="18" viewBox="0 0 24 18"><rect x="2" y="13" width="17" height="4.4" fill="#050505"/><rect x="2" y="17" width="17" height="1" fill="#f4f4f4"/><path d="M5 10.6 L9.6 14 L18 2.6" stroke="#e00818" stroke-width="2.2" fill="none"/></svg>
<svg style="left:1828px;top:239px;" width="20" height="14" viewBox="0 0 20 14"><path d="M3 4 C7 1 12 6 17 3 M3 7 C7 4 12 9 17 6" stroke="#98999c" stroke-width="1.2" fill="none"/><rect x="8" y="8" width="9" height="5" rx="1.6" fill="#a8a9ac" stroke="#5a5b5e" stroke-width="0.6"/></svg>
<svg style="left:1856px;top:239px;" width="20" height="14" viewBox="0 0 20 14"><path d="M8.6 1 H11.4 V5 L15.6 13.4 H4.4 L8.6 5 Z" fill="#98999c" stroke="#68696c" stroke-width="0.8"/><path d="M10 6 L7 12.6 H10 Z" fill="#b8b9bc"/></svg>
<div style="left:1713px;top:258px;width:202px;height:141px;background:#7c7d81;border:1px solid #56575a;border-right:0;"></div>
<div style="left:1903px;top:259px;width:12px;height:139px;background:#727377;"></div>
<div class="t g" style="left:1723.6px;top:260px;font-size:12px;color:#fcfcfc;transform:scaleX(0.9583);transform-origin:0 0;">効果</div>
<div style="left:1749px;top:266px;width:149px;height:1px;background:#6c6d70;"></div>
<div style="left:1789px;top:274px;width:110px;height:20px;background:#77787c;border:1px solid #68696c;border-radius:3px;"></div>
<svg style="left:1792px;top:275px;" width="104" height="18" viewBox="0 0 104 18"><circle cx="9" cy="9" r="5.8" fill="#262628" stroke="#fff" stroke-width="2.6"/><circle cx="34" cy="8.6" r="6" fill="#2f87e8" stroke="#14408a" stroke-width="1"/><path d="M27.6 10 A6.6 6.6 0 0 0 38 14.6" stroke="#3b93f0" stroke-width="1.6" fill="none"/><rect x="50" y="1.5" width="16" height="16" fill="#111"/><rect x="50" y="1.5" width="16" height="16" fill="url(#ck)"/><rect x="77" y="5" width="13" height="12.6" fill="#fafafa"/><rect x="74" y="1.6" width="13" height="13" fill="#56b4fa" stroke="#3a8ad0" stroke-width="0.6"/><path d="M95 7 H103 L99 11.6 Z" fill="#47484b"/><defs><pattern id="ck" width="3.2" height="3.2" patternUnits="userSpaceOnUse"><rect width="1.6" height="1.6" fill="#8e8f92"/><rect x="1.6" y="1.6" width="1.6" height="1.6" fill="#8e8f92"/></pattern></defs></svg>
<div class="t g" style="left:1723.6px;top:297px;font-size:12px;color:#fcfcfc;transform:scaleX(0.9722);transform-origin:0 0;">表現色</div>
<div style="left:1762px;top:304px;width:136px;height:1px;background:#6c6d70;"></div>
<div style="left:1729px;top:314px;width:118px;height:20px;background:#77787c;border:1px solid #68696c;border-radius:3px;"></div>
<div style="left:1756.5px;top:317px;width:5px;height:14px;background:#ff7272;"></div>
<div style="left:1761.5px;top:317px;width:5px;height:14px;background:#72b4ff;"></div>
<div style="left:1766.5px;top:317px;width:5px;height:14px;background:#84ee84;"></div>
<div class="t g" style="left:1779px;top:318px;font-size:12px;color:#fcfcfc;transform:scaleX(0.7222);transform-origin:0 0;">カラー</div>
<svg style="left:1834px;top:321px;" width="10" height="7" viewBox="0 0 10 7"><path d="M0.5 0.8 H9.5 L5 6.2 Z" fill="#47484b"/></svg>
<div style="left:1712px;top:400px;width:203px;height:1px;background:#5e5f62;"></div>
<div style="left:1712px;top:401px;width:203px;height:1px;background:#8c8d91;"></div>
<div style="left:1712px;top:402px;width:203px;height:17px;background:#77787c;"></div>
<div style="left:1712px;top:419px;width:203px;height:1px;background:#85868a;"></div>
<div style="left:1713px;top:403px;width:17px;height:16px;background:#77787c;border-left:1px solid #5a5b5e;border-bottom:1px solid #5a5b5e;border-top:1px solid #8a8b8f;"></div>
<svg style="left:1717px;top:406px;" width="12" height="10" viewBox="0 0 12 10"><path d="M1 1 L4.6 4.6 L1 8.4 Z" fill="#a2a3a6"/><path d="M5.5 1.8 H11 M5.5 4.8 H11 M5.5 7.8 H11" stroke="#a2a3a6" stroke-width="1.5"/></svg>
<div style="left:1730px;top:404px;width:58px;height:17px;background:#7b7c80;border-top:1px solid #505154;border-left:1px solid #505154;border-right:1px solid #505154;border-radius:2px 2px 0 0;"></div>
<div style="left:1731px;top:405px;width:56px;height:1px;background:#8c8d91;"></div>
<div class="t g" style="left:1757px;top:410px;font-size:10px;color:#e9e9ea;transform:scaleX(0.6750);transform-origin:0 0;">レイヤー</div>
<div style="left:1789px;top:404px;width:27px;height:15px;background:#6c6d71;border-top:1px solid #505154;border-right:1px solid #505154;border-bottom:1px solid #58595c;border-radius:2px 2px 0 0;"></div>
<div style="left:1817px;top:404px;width:27px;height:15px;background:#6c6d71;border-top:1px solid #505154;border-right:1px solid #505154;border-bottom:1px solid #58595c;border-radius:2px 2px 0 0;"></div>
<svg style="left:1734px;top:404px;" width="20" height="20" viewBox="0 0 20 20"><path d="M2 15.6 L10 12.6 L18 15.6 L10 18.6 Z" fill="#fafafa" stroke="#333" stroke-width="0.6"/><path d="M2 12 L10 9 L18 12 L10 15 Z" fill="#1a1a1c" stroke="#fafafa" stroke-width="0.7"/><path d="M2 8.4 L10 5.4 L18 8.4 L10 11.4 Z" fill="#1a1a1c" stroke="#fafafa" stroke-width="0.7"/><path d="M2 4.8 L10 1.8 L18 4.8 L10 7.8 Z" fill="#1a1a1c" stroke="#fafafa" stroke-width="0.7"/></svg>
<svg style="left:1792px;top:405px;" width="22" height="13" viewBox="0 0 22 13"><rect x="2" y="1" width="18" height="12" fill="#8e8f92"/><rect x="2" y="1" width="6" height="12" fill="#a8a9ac"/><path d="M7 11 C4 6 8 3 10 6 C12 9 9 12 6 10 M13 11 C10 7 14 3 17 6 C19 9 16 12 13 10" stroke="#2a2a2c" stroke-width="1.8" fill="none"/></svg>
<svg style="left:1820px;top:405px;" width="22" height="13" viewBox="0 0 22 13"><path d="M5 9 L9 6 L11 8 L15 5 L17 7" stroke="#505154" stroke-width="2.4" fill="none" stroke-dasharray="3 1.4"/><path d="M5 12 L9 9 L11 11 L15 8" stroke="#606164" stroke-width="1.6" fill="none" stroke-dasharray="3 1.4"/></svg>
<div style="left:1713px;top:424px;width:100px;height:19px;background:#77787c;border:1px solid #68696c;border-radius:3px;"></div>
<div class="t g" style="left:1745px;top:427px;font-size:13px;color:#fcfcfc;transform:scaleX(0.8846);transform-origin:0 0;">通常</div>
<svg style="left:1801px;top:430px;" width="10" height="7" viewBox="0 0 10 7"><path d="M0.5 0.8 H9.5 L5 6.2 Z" fill="#47484b"/></svg>
<div style="left:1819px;top:428px;width:52px;height:9px;background:linear-gradient(90deg,rgba(255,255,255,.95),rgba(255,255,255,0) 95%),conic-gradient(#a8a9ac 25%,#c4c5c8 0 50%,#a8a9ac 0 75%,#c4c5c8 0);background-size:100% 100%,8px 8px;border:1px solid #56575a;"></div>
<div style="left:1870px;top:423px;width:4px;height:20px;background:#77787c;border:1px solid #909195;border-radius:1px;"></div>
<div class="t g" style="left:1882px;top:427px;font-size:12px;color:#fcfcfc;transform:scaleX(0.7988);transform-origin:0 0;">100</div>
<svg style="left:1902px;top:426px;" width="11" height="14" viewBox="0 0 11 14"><path d="M1 5.6 H10 L5.5 0.6 Z M1 8.4 H10 L5.5 13.4 Z" fill="#3a3a3c"/></svg>
<div style="left:1713px;top:445px;width:35px;height:19px;background:#77787c;border:1px solid #68696c;border-radius:3px;"></div>
<div style="left:1715px;top:447px;width:18px;height:15px;background:#7b7c80;border:1px solid #1e1e20;"></div>
<svg style="left:1736px;top:452px;" width="9" height="6" viewBox="0 0 9 6"><path d="M0.5 0.6 H8.5 L4.5 5.4 Z" fill="#47484b"/></svg>
<svg style="left:1750px;top:446px;" width="18" height="18" viewBox="0 0 18 18"><ellipse cx="9" cy="9.6" rx="7.6" ry="5" fill="#9a9b9e" stroke="#333" stroke-width="1"/><ellipse cx="9" cy="9" rx="7.6" ry="4" fill="#c8c8ca" stroke="#333" stroke-width="0.8"/><ellipse cx="9" cy="9.6" rx="5" ry="2" fill="#1a1a1c"/></svg>
<svg style="left:1772px;top:446px;" width="14" height="18" viewBox="0 0 14 18"><path d="M5.4 6 H8.6 L9.6 16 H4.4 Z" fill="#e8e8ea" stroke="#333" stroke-width="0.7"/><rect x="5" y="3" width="4" height="3.4" fill="#1a1a1c"/><path d="M4.4 12 H9.6 V16 H4.4 Z" fill="#8e8f92"/><path d="M1 3 L4.6 4.6 M13 3 L9.4 4.6 M1 6.4 L4.6 5.4 M13 6.4 L9.4 5.4" stroke="#d8d8da" stroke-width="0.8"/></svg>
<svg style="left:1792px;top:445px;" width="12" height="19" viewBox="0 0 12 19"><path d="M2.4 1 H9.6 V11 L6 18 L2.4 11 Z" fill="url(#cp)"/><path d="M4.6 15.4 L6 18.4 L7.4 15.4 Z" fill="#1a4a9a"/><defs><linearGradient id="cp" x1="0" y1="0" x2="0" y2="1"><stop offset="0" stop-color="#20b0e0"/><stop offset="0.35" stop-color="#30c0d0"/><stop offset="0.55" stop-color="#e8d020"/><stop offset="0.8" stop-color="#30a0c0"/><stop offset="1" stop-color="#2060b0"/></linearGradient></defs></svg>
<svg style="left:1811px;top:446px;" width="16.0" height="18.0" viewBox="0 0 16 18"><path d="M4 8 V5.6 C4 1 12 1 12 5.6 V8" stroke="#2a2a2c" stroke-width="2" fill="none"/><rect x="1.6" y="8" width="12.8" height="9" rx="1" fill="#8e8f92" stroke="#1e1e20" stroke-width="1.2"/><rect x="7" y="10.6" width="2" height="4" fill="#fafafa"/></svg>
<svg style="left:1830px;top:445px;" width="9.92" height="11.16" viewBox="0 0 16 18"><path d="M4 8 V5.6 C4 1 12 1 12 5.6 V8" stroke="#2a2a2c" stroke-width="2" fill="none"/><rect x="1.6" y="8" width="12.8" height="9" rx="1" fill="#8e8f92" stroke="#1e1e20" stroke-width="1.2"/><rect x="7" y="10.6" width="2" height="4" fill="#fafafa"/></svg>
<svg style="left:1838px;top:455px;" width="10" height="9" viewBox="0 0 10 9"><rect x="0.5" y="4.5" width="3.4" height="3.4" fill="#fafafa"/><path d="M5 8 V3 H9" stroke="#fafafa" stroke-width="1.4" fill="none"/><rect x="5.6" y="4.6" width="3.6" height="3.6" fill="#8e8f92"/></svg>
<div style="left:1850px;top:445px;width:30px;height:19px;background:#7d7e82;border:1px solid #86878b;border-radius:3px;"></div>
<div style="left:1883px;top:445px;width:30px;height:19px;background:#7d7e82;border:1px solid #86878b;border-radius:3px;"></div>
<svg style="left:1852px;top:447px;" width="26" height="16" viewBox="0 0 26 16"><path d="M3 8 C5 3 9 3 11 8 C9 12 5 12 3 8 Z" fill="#8c8d91"/><path d="M9 10 L15 15 M15 10 L9 15" stroke="#6a6b6e" stroke-width="1.6"/><path d="M17 5 H25 L21 9.6 Z" fill="#6c6d70"/></svg>
<svg style="left:1885px;top:447px;" width="26" height="16" viewBox="0 0 26 16"><path d="M3 2 L14 2 L3 14 Z" fill="#85868a" stroke="#6c6d70"/><path d="M9 10 L15 15 M15 10 L9 15" stroke="#6a6b6e" stroke-width="1.6"/><path d="M17 5 H25 L21 9.6 Z" fill="#6c6d70"/></svg>
<div style="left:1713px;top:467px;width:202px;height:457px;background:#7c7d81;border-top:1px solid #56575a;border-left:1px solid #56575a;"></div>
<div style="left:1903px;top:468px;width:12px;height:456px;background:#727377;"></div>
<div style="left:1716px;top:467px;width:1px;height:457px;background:#505154;"></div>
<div style="left:1736px;top:467px;width:1px;height:441px;background:#505154;"></div>
<div style="left:1754px;top:467px;width:1px;height:441px;background:#505154;"></div>
<div style="left:1761px;top:471px;width:26px;height:34px;background:#fff;background-image:conic-gradient(#cfcfd2 25%,#fff 0 50%,#cfcfd2 0 75%,#fff 0);background-size:8px 8px;border:1px solid #0c0c0e;"></div>
<div style="left:1793px;top:471px;width:20px;height:20px;background:#fff;border:1px solid #111;"></div>
<svg class="svgt" style="left:1793px;top:471px;" width="20" height="20" viewBox="0 0 20 20"><text x="8.6" y="15.6" font-family="Liberation Serif,serif" font-weight="bold" font-size="17" fill="#1e1e20" text-anchor="middle">A</text><rect x="11.5" y="12.5" width="6" height="5" fill="#fff" stroke="#333" stroke-width="0.8"/></svg>
<div class="t g" style="left:1818px;top:473px;font-size:12px;color:#fcfcfc;transform:scaleX(0.9290);transform-origin:0 0;">100 % 通常</div>
<div class="t g" style="left:1792px;top:492px;font-size:12px;color:#fcfcfc;transform:scaleX(0.8333);transform-origin:0 0;">失礼します！</div>
<div style="left:1717px;top:508px;width:185px;height:1px;background:#56575a;"></div>
<svg style="left:1756px;top:523px;" width="11" height="7" viewBox="0 0 11 7"><path d="M0.6 0.6 H10.4 L5.5 6.4 Z" fill="#fafafa"/></svg>
<svg style="left:1773px;top:517px;" width="18" height="14" viewBox="0 0 18 14"><path d="M1.6 12 V3.6 C1.6 2.6 2.2 2 3.2 2 H6 L7.6 4 H12.6 V6" fill="#f4f0b0" stroke="#8a8660" stroke-width="0.6"/><path d="M1.6 12 L5 6 H16.6 L12.6 12 Z" fill="#3a3a30"/><path d="M1.6 12 L4.6 5.6 H12.6" fill="none" stroke="#fafad0" stroke-width="1"/></svg>
<div class="t g" style="left:1797px;top:511px;font-size:12px;color:#fcfcfc;transform:scaleX(0.9290);transform-origin:0 0;">100 % 通常</div>
<div class="t g" style="left:1797px;top:523px;font-size:12px;color:#fcfcfc;transform:scaleX(0.8388);transform-origin:0 0;">3段4コマ5</div>
<div style="left:1769px;top:539px;width:133px;height:1px;background:#56575a;"></div>
<svg style="left:1718px;top:555px;" width="14" height="10" viewBox="0 0 14 10"><path d="M0.6 5 C3.6 0.6 10.4 0.6 13.4 5 C10.4 9.4 3.6 9.4 0.6 5 Z" fill="#8a8b8e"/><circle cx="7" cy="5" r="3.2" fill="#56575a"/><path d="M0.6 5 C3.6 0.2 10.4 0.2 13.4 5" stroke="#5a5b5e" stroke-width="1.1" fill="none"/></svg>
<svg style="left:1772px;top:559px;" width="11" height="7" viewBox="0 0 11 7"><path d="M0.6 0.6 H10.4 L5.5 6.4 Z" fill="#fafafa"/></svg>
<div style="left:1787px;top:550px;width:20px;height:20px;background:#fff;border:1px solid #111;"></div>
<svg style="left:1787px;top:550px;" width="20" height="20" viewBox="0 0 20 20"><path d="M3.5 3.5 H16.5 V6.5 H3.5 Z M3.5 8.5 H8.5 V16.5 H3.5 Z M10.5 8.5 H16.5 V16.5 H10.5 Z" fill="none" stroke="#333" stroke-width="1"/><rect x="11.5" y="11.5" width="6" height="6" rx="1" fill="#fff" stroke="#333" stroke-width="0.8"/><circle cx="14.5" cy="14.5" r="1.4" fill="#8e8f92"/></svg>
<svg style="left:1810px;top:553px;" width="10" height="10" viewBox="0 0 10 10"><path d="M1 6 L3.6 9 L9 1.6" stroke="#0c0c0e" stroke-width="1.4" fill="none"/></svg>
<div style="left:1822px;top:543px;width:27px;height:34px;background:#000;border-left:1px solid #56575a;border-right:1px solid #56575a;"></div>
<svg style="left:1823px;top:543px;" width="25" height="34" viewBox="0 0 25 34"><rect x="11" y="5" width="10" height="7" fill="#fff"/></svg>
<svg style="left:1852px;top:550px;" width="20" height="20" viewBox="0 0 20 20"><path d="M1 1 H16 L14 5 V12 L3 16 Z" fill="#4a9ae6" stroke="#1e3e7a" stroke-width="1"/><rect x="7" y="6" width="11" height="10" fill="#fafafa" stroke="#8e8f92" stroke-width="0.6"/><path d="M5 5 L16 16 M16 5 L5 16" stroke="#e00818" stroke-width="1.8"/></svg>
<div class="t g" style="left:1878px;top:545px;font-size:12px;color:#fcfcfc;transform:scaleX(0.8522);transform-origin:0 0;">100 %</div>
<div class="t g" style="left:1875px;top:564px;font-size:11px;color:#c4c5c8;transform:scaleX(0.6667);transform-origin:0 0;">コマ枠</div>
<div style="left:1769px;top:580px;width:133px;height:1px;background:#56575a;"></div>
<svg style="left:1718px;top:596px;" width="14" height="10" viewBox="0 0 14 10"><path d="M0.6 5 C3.6 0.6 10.4 0.6 13.4 5 C10.4 9.4 3.6 9.4 0.6 5 Z" fill="#8a8b8e"/><circle cx="7" cy="5" r="3.2" fill="#56575a"/><path d="M0.6 5 C3.6 0.2 10.4 0.2 13.4 5" stroke="#5a5b5e" stroke-width="1.1" fill="none"/></svg>
<svg style="left:1772px;top:600px;" width="11" height="7" viewBox="0 0 11 7"><path d="M0.6 0.6 H10.4 L5.5 6.4 Z" fill="#fafafa"/></svg>
<div style="left:1787px;top:591px;width:20px;height:20px;background:#fff;border:1px solid #111;"></div>
<svg style="left:1787px;top:591px;" width="20" height="20" viewBox="0 0 20 20"><path d="M3.5 3.5 H16.5 V6.5 H3.5 Z M3.5 8.5 H8.5 V16.5 H3.5 Z M10.5 8.5 H16.5 V16.5 H10.5 Z" fill="none" stroke="#333" stroke-width="1"/><rect x="11.5" y="11.5" width="6" height="6" rx="1" fill="#fff" stroke="#333" stroke-width="0.8"/><circle cx="14.5" cy="14.5" r="1.4" fill="#8e8f92"/></svg>
<svg style="left:1810px;top:594px;" width="10" height="10" viewBox="0 0 10 10"><path d="M1 6 L3.6 9 L9 1.6" stroke="#0c0c0e" stroke-width="1.4" fill="none"/></svg>
<div style="left:1822px;top:584px;width:27px;height:34px;background:#000;border-left:1px solid #56575a;border-right:1px solid #56575a;"></div>
<svg style="left:1823px;top:584px;" width="25" height="34" viewBox="0 0 25 34"><path d="M11 6 L20 5 V12 L11 13 Z" fill="#fff"/></svg>
<svg style="left:1852px;top:591px;" width="20" height="20" viewBox="0 0 20 20"><path d="M1 1 H16 L14 5 V12 L3 16 Z" fill="#4a9ae6" stroke="#1e3e7a" stroke-width="1"/><rect x="7" y="6" width="11" height="10" fill="#fafafa" stroke="#8e8f92" stroke-width="0.6"/><path d="M5 5 L16 16 M16 5 L5 16" stroke="#e00818" stroke-width="1.8"/></svg>
<div class="t g" style="left:1878px;top:586px;font-size:12px;color:#fcfcfc;transform:scaleX(0.8522);transform-origin:0 0;">100 %</div>
<div class="t g" style="left:1875px;top:605px;font-size:11px;color:#c4c5c8;transform:scaleX(0.6667);transform-origin:0 0;">コマ枠</div>
<div style="left:1769px;top:621px;width:133px;height:1px;background:#56575a;"></div>
<svg style="left:1718px;top:637px;" width="14" height="10" viewBox="0 0 14 10"><path d="M0.6 5 C3.6 0.6 10.4 0.6 13.4 5 C10.4 9.4 3.6 9.4 0.6 5 Z" fill="#8a8b8e"/><circle cx="7" cy="5" r="3.2" fill="#56575a"/><path d="M0.6 5 C3.6 0.2 10.4 0.2 13.4 5" stroke="#5a5b5e" stroke-width="1.1" fill="none"/></svg>
<svg style="left:1772px;top:641px;" width="11" height="7" viewBox="0 0 11 7"><path d="M0.6 0.6 H10.4 L5.5 6.4 Z" fill="#fafafa"/></svg>
<div style="left:1787px;top:632px;width:20px;height:20px;background:#fff;border:1px solid #111;"></div>
<svg style="left:1787px;top:632px;" width="20" height="20" viewBox="0 0 20 20"><path d="M3.5 3.5 H16.5 V6.5 H3.5 Z M3.5 8.5 H8.5 V16.5 H3.5 Z M10.5 8.5 H16.5 V16.5 H10.5 Z" fill="none" stroke="#333" stroke-width="1"/><rect x="11.5" y="11.5" width="6" height="6" rx="1" fill="#fff" stroke="#333" stroke-width="0.8"/><circle cx="14.5" cy="14.5" r="1.4" fill="#8e8f92"/></svg>
<svg style="left:1810px;top:635px;" width="10" height="10" viewBox="0 0 10 10"><path d="M1 6 L3.6 9 L9 1.6" stroke="#0c0c0e" stroke-width="1.4" fill="none"/></svg>
<div style="left:1822px;top:625px;width:27px;height:34px;background:#000;border-left:1px solid #56575a;border-right:1px solid #56575a;"></div>
<svg style="left:1823px;top:625px;" width="25" height="34" viewBox="0 0 25 34"><path d="M3 3 H8 L7 15 H3 Z" fill="#fff"/></svg>
<svg style="left:1852px;top:632px;" width="20" height="20" viewBox="0 0 20 20"><path d="M1 1 H16 L14 5 V12 L3 16 Z" fill="#4a9ae6" stroke="#1e3e7a" stroke-width="1"/><rect x="7" y="6" width="11" height="10" fill="#fafafa" stroke="#8e8f92" stroke-width="0.6"/><path d="M5 5 L16 16 M16 5 L5 16" stroke="#e00818" stroke-width="1.8"/></svg>
<div class="t g" style="left:1878px;top:627px;font-size:12px;color:#fcfcfc;transform:scaleX(0.8522);transform-origin:0 0;">100 %</div>
<div class="t g" style="left:1875px;top:646px;font-size:11px;color:#c4c5c8;transform:scaleX(0.6667);transform-origin:0 0;">コマ枠</div>
<div style="left:1769px;top:662px;width:133px;height:1px;background:#56575a;"></div>
<svg style="left:1718px;top:678px;" width="14" height="10" viewBox="0 0 14 10"><path d="M0.6 5 C3.6 0.6 10.4 0.6 13.4 5 C10.4 9.4 3.6 9.4 0.6 5 Z" fill="#8a8b8e"/><circle cx="7" cy="5" r="3.2" fill="#56575a"/><path d="M0.6 5 C3.6 0.2 10.4 0.2 13.4 5" stroke="#5a5b5e" stroke-width="1.1" fill="none"/></svg>
<svg style="left:1772px;top:682px;" width="11" height="7" viewBox="0 0 11 7"><path d="M0.6 0.6 H10.4 L5.5 6.4 Z" fill="#fafafa"/></svg>
<div style="left:1787px;top:673px;width:20px;height:20px;background:#fff;border:1px solid #111;"></div>
<svg style="left:1787px;top:673px;" width="20" height="20" viewBox="0 0 20 20"><path d="M3.5 3.5 H16.5 V6.5 H3.5 Z M3.5 8.5 H8.5 V16.5 H3.5 Z M10.5 8.5 H16.5 V16.5 H10.5 Z" fill="none" stroke="#333" stroke-width="1"/><rect x="11.5" y="11.5" width="6" height="6" rx="1" fill="#fff" stroke="#333" stroke-width="0.8"/><circle cx="14.5" cy="14.5" r="1.4" fill="#8e8f92"/></svg>
<svg style="left:1810px;top:676px;" width="10" height="10" viewBox="0 0 10 10"><path d="M1 6 L3.6 9 L9 1.6" stroke="#0c0c0e" stroke-width="1.4" fill="none"/></svg>
<div style="left:1822px;top:666px;width:27px;height:34px;background:#000;border-left:1px solid #56575a;border-right:1px solid #56575a;"></div>
<svg style="left:1823px;top:666px;" width="25" height="34" viewBox="0 0 25 34"><path d="M3 25 L19 22 V30 H3 Z" fill="#fff"/></svg>
<svg style="left:1852px;top:673px;" width="20" height="20" viewBox="0 0 20 20"><path d="M1 1 H16 L14 5 V12 L3 16 Z" fill="#4a9ae6" stroke="#1e3e7a" stroke-width="1"/><rect x="7" y="6" width="11" height="10" fill="#fafafa" stroke="#8e8f92" stroke-width="0.6"/><path d="M5 5 L16 16 M16 5 L5 16" stroke="#e00818" stroke-width="1.8"/></svg>
<div class="t g" style="left:1878px;top:668px;font-size:12px;color:#fcfcfc;transform:scaleX(0.8522);transform-origin:0 0;">100 %</div>
<div class="t g" style="left:1875px;top:687px;font-size:11px;color:#c4c5c8;transform:scaleX(0.6667);transform-origin:0 0;">コマ枠</div>
<div style="left:1717px;top:703px;width:185px;height:1px;background:#56575a;"></div>
<div style="left:1902px;top:468px;width:1px;height:456px;background:#727377;"></div>
<div style="left:1761px;top:707px;width:26px;height:34px;background:#fff;background-image:conic-gradient(#cfcfd2 25%,#fff 0 50%,#cfcfd2 0 75%,#fff 0);background-size:8px 8px;border:1px solid #0c0c0e;"></div>
<div style="left:1793px;top:705px;width:20px;height:20px;background:#fff;border:1px solid #111;"></div>
<div style="left:1796px;top:708px;width:5px;height:14px;background:#ff6e6e;"></div>
<div style="left:1801px;top:708px;width:5px;height:14px;background:#6eb2ff;"></div>
<div style="left:1806px;top:708px;width:4.5px;height:14px;background:#80ee80;"></div>
<div class="t g" style="left:1818px;top:708px;font-size:12px;color:#fcfcfc;transform:scaleX(0.9290);transform-origin:0 0;">100 % 通常</div>
<div class="t g" style="left:1792px;top:727px;font-size:12px;color:#fcfcfc;transform:scaleX(0.7610);transform-origin:0 0;">響びっくり起床 のコピー</div>
<div style="left:1717px;top:744px;width:185px;height:1px;background:#56575a;"></div>
<div style="left:1761px;top:748px;width:26px;height:34px;background:#fff;background-image:conic-gradient(#cfcfd2 25%,#fff 0 50%,#cfcfd2 0 75%,#fff 0);background-size:8px 8px;border:1px solid #0c0c0e;"></div>
<div style="left:1793px;top:746px;width:20px;height:20px;background:#fff;border:1px solid #111;"></div>
<div style="left:1796px;top:749px;width:5px;height:14px;background:#ff6e6e;"></div>
<div style="left:1801px;top:749px;width:5px;height:14px;background:#6eb2ff;"></div>
<div style="left:1806px;top:749px;width:4.5px;height:14px;background:#80ee80;"></div>
<div class="t g" style="left:1818px;top:749px;font-size:12px;color:#fcfcfc;transform:scaleX(0.9290);transform-origin:0 0;">100 % 通常</div>
<div class="t g" style="left:1792px;top:768px;font-size:12px;color:#fcfcfc;transform:scaleX(0.7929);transform-origin:0 0;">レイヤー 1</div>
<div style="left:1717px;top:785px;width:185px;height:1px;background:#56575a;"></div>
<div style="left:1761px;top:789px;width:26px;height:34px;background:#fff;background-image:conic-gradient(#cfcfd2 25%,#fff 0 50%,#cfcfd2 0 75%,#fff 0);background-size:8px 8px;border:1px solid #0c0c0e;"></div>
<div style="left:1771px;top:787px;width:20px;height:20px;background:#fff;border:1px solid #111;"></div>
<svg style="left:1771px;top:787px;" width="20" height="20" viewBox="0 0 20 20"><path d="M3 10 L10 3.6 L17 10 L10 16.4 Z" fill="#2a2a2c"/><rect x="11.5" y="11.5" width="6" height="6" fill="#fff" stroke="#555" stroke-width="0.8"/></svg>
<svg style="left:1790px;top:805px;" width="10" height="10" viewBox="0 0 10 10"><path d="M1 6 L3.6 9 L9 1.6" stroke="#0c0c0e" stroke-width="1.4" fill="none"/></svg>
<svg style="left:1802px;top:796px;" width="20" height="20" viewBox="0 0 20 20"><path d="M1 1 H16 L14 5 V12 L3 16 Z" fill="#4a9ae6" stroke="#1e3e7a" stroke-width="1"/><rect x="6" y="9" width="12" height="9" fill="#fbf4c0" stroke="#8e8f92" stroke-width="0.6"/><path d="M5 5 L16 16 M16 5 L5 16" stroke="#e00818" stroke-width="1.8"/></svg>
<div style="left:1828px;top:787px;width:20px;height:20px;background:#fff;border:1px solid #111;"></div>
<div style="left:1831px;top:790px;width:5px;height:14px;background:#ff6e6e;"></div>
<div style="left:1836px;top:790px;width:5px;height:14px;background:#6eb2ff;"></div>
<div style="left:1841px;top:790px;width:4.5px;height:14px;background:#80ee80;"></div>
<div class="t g" style="left:1853px;top:790px;font-size:12px;color:#fcfcfc;transform:scaleX(0.9319);transform-origin:0 0;">100 % 通</div>
<div class="t g" style="left:1826px;top:809px;font-size:12px;color:#fcfcfc;transform:scaleX(0.8214);transform-origin:0 0;">コーヒーを飲む</div>
<div style="left:1717px;top:826px;width:185px;height:1px;background:#56575a;"></div>
<div style="left:1755px;top:827px;width:147px;height:40px;background:linear-gradient(#86a1b1,#6c8697);"></div>
<svg style="left:1718px;top:842px;" width="14" height="10" viewBox="0 0 14 10"><path d="M0.6 5 C3.6 0.6 10.4 0.6 13.4 5 C10.4 9.4 3.6 9.4 0.6 5 Z" fill="#fafafa" stroke="#2a2a2c" stroke-width="0.6"/><circle cx="7" cy="5" r="3.4" fill="#0c0c0e"/><circle cx="5.8" cy="3.8" r="0.9" fill="#fff"/><path d="M0.6 5 C3.6 0.2 10.4 0.2 13.4 5" stroke="#0c0c0e" stroke-width="1.3" fill="none"/></svg>
<svg style="left:1738px;top:838px;" width="16" height="16" viewBox="0 0 16 16"><path d="M1.6 14.6 C6 12 10 8 13.6 2.6 L14.4 6 C11 10.6 7 13 1.6 14.6 Z" fill="#fafafa" stroke="#0c0c0e" stroke-width="0.9"/><path d="M11 3 L14.6 1.6 L14.4 6 Z" fill="#0c0c0e"/></svg>
<div style="left:1759px;top:828px;width:30px;height:38px;border:1px solid #0c0c0e;"></div>
<div style="left:1761px;top:830px;width:26px;height:34px;background:#fdfdfe;border:1px solid #0c0c0e;"></div>
<div style="left:1793px;top:828px;width:20px;height:20px;background:#fff;border:1px solid #111;"></div>
<div style="left:1796px;top:831px;width:5px;height:14px;background:#ff6e6e;"></div>
<div style="left:1801px;top:831px;width:5px;height:14px;background:#6eb2ff;"></div>
<div style="left:1806px;top:831px;width:4.5px;height:14px;background:#80ee80;"></div>
<div class="t g" style="left:1818px;top:831px;font-size:12px;color:#fcfcfc;transform:scaleX(0.9290);transform-origin:0 0;">100 % 通常</div>
<div class="t g" style="left:1792px;top:850px;font-size:12px;color:#fcfcfc;transform:scaleX(0.9583);transform-origin:0 0;">用紙</div>
<div style="left:1717px;top:867px;width:185px;height:1px;background:#56575a;"></div>
<svg style="left:1718px;top:883px;" width="14" height="10" viewBox="0 0 14 10"><path d="M0.6 5 C3.6 0.6 10.4 0.6 13.4 5 C10.4 9.4 3.6 9.4 0.6 5 Z" fill="#fafafa" stroke="#2a2a2c" stroke-width="0.6"/><circle cx="7" cy="5" r="3.4" fill="#0c0c0e"/><circle cx="5.8" cy="3.8" r="0.9" fill="#fff"/><path d="M0.6 5 C3.6 0.2 10.4 0.2 13.4 5" stroke="#0c0c0e" stroke-width="1.3" fill="none"/></svg>
<div style="left:1761px;top:871px;width:26px;height:34px;background:#fdfdfe;border:1px solid #0c0c0e;"></div>
<div style="left:1793px;top:869px;width:20px;height:20px;background:#fff;border:1px solid #111;"></div>
<div style="left:1796px;top:872px;width:5px;height:14px;background:#ff6e6e;"></div>
<div style="left:1801px;top:872px;width:5px;height:14px;background:#6eb2ff;"></div>
<div style="left:1806px;top:872px;width:4.5px;height:14px;background:#80ee80;"></div>
<div class="t g" style="left:1818px;top:872px;font-size:12px;color:#fcfcfc;transform:scaleX(0.9290);transform-origin:0 0;">100 % 通常</div>
<div class="t g" style="left:1792px;top:891px;font-size:12px;color:#fcfcfc;transform:scaleX(0.9722);transform-origin:0 0;">真用紙</div>
<div style="left:1717px;top:908px;width:185px;height:1px;background:#56575a;"></div>
<div style="left:1903px;top:468px;width:12px;height:456px;background:#727377;"></div>
<div style="left:1902px;top:468px;width:1px;height:456px;background:#6a6b6e;"></div>
<div style="left:1713px;top:924px;width:202px;height:21px;background:#7b7c80;border-top:1px solid #56575a;"></div>
<svg style="left:1713px;top:925px;" width="20" height="20" viewBox="0 0 20 20"><path d="M2 15.6 L10 12.6 L18 15.6 L10 18.6 Z" fill="#fafafa" stroke="#333" stroke-width="0.6"/><path d="M2 12 L10 9 L18 12 L10 15 Z" fill="#1a1a1c" stroke="#fafafa" stroke-width="0.7"/><path d="M2 8.4 L10 5.4 L18 8.4 L10 11.4 Z" fill="#1a1a1c" stroke="#fafafa" stroke-width="0.7"/><path d="M2 4.8 L10 1.8 L18 4.8 L10 7.8 Z" fill="#1a1a1c" stroke="#fafafa" stroke-width="0.7"/></svg>
<svg style="left:1757px;top:926px;" width="18" height="18" viewBox="0 0 18 18"><path d="M1.6 1.6 H14.4 V11 L10 16.4 H1.6 Z" fill="url(#nl1757)" stroke="#0c0c0e" stroke-width="1.2"/><path d="M14.4 11 H10 V16.4" fill="#8e8f92" stroke="#0c0c0e" stroke-width="1"/><defs><linearGradient id="nl1757" x1="0" y1="0" x2="0" y2="1"><stop offset="0" stop-color="#dfeaf0"/><stop offset="1" stop-color="#fff"/></linearGradient></defs></svg>
<svg style="left:1776px;top:926px;" width="18" height="18" viewBox="0 0 18 18"><path d="M1.6 1.6 H14.4 V11 L10 16.4 H1.6 Z" fill="url(#nl1776)" stroke="#0c0c0e" stroke-width="1.2"/><path d="M14.4 11 H10 V16.4" fill="#8e8f92" stroke="#0c0c0e" stroke-width="1"/><defs><linearGradient id="nl1776" x1="0" y1="0" x2="0" y2="1"><stop offset="0" stop-color="#dfeaf0"/><stop offset="1" stop-color="#fff"/></linearGradient></defs><rect x="10.5" y="9.5" width="7" height="7" fill="#fafafa" stroke="#555" stroke-width="0.8"/><path d="M10.5 12 H17.5 M13 9.5 V16.5" stroke="#555" stroke-width="0.8"/></svg>
<svg style="left:1796px;top:926px;" width="18" height="18" viewBox="0 0 18 18"><path d="M1 14 V3 H5 L6.4 5 H11 V14 Z" fill="#a8a9ac" stroke="#505154" stroke-width="0.9"/><path d="M9 7 H15 L16.6 9 V17 H9 Z" fill="#d8d8da" stroke="#3a3a3c" stroke-width="0.9"/><path d="M13 13 H16.6 V17 Z" fill="#fafafa"/></svg>
<svg style="left:1817px;top:926px;" width="16" height="18" viewBox="0 0 16 18"><path d="M1 12.6 L8 9.6 L15 12.6 L8 15.8 Z" fill="#0c0c0e"/><path d="M8 1 C11 1 12 3 12 5 H4 C4 3 5 1 8 1 Z" fill="#fafafa" stroke="#0c0c0e" stroke-width="0.6"/><path d="M8 3 V9 M5.6 7 L8 10 L10.4 7" stroke="#0c0c0e" stroke-width="1.8" fill="none"/></svg>
<svg style="left:1837px;top:926px;" width="16" height="18" viewBox="0 0 16 18"><path d="M1 12.6 L8 9.6 L15 12.6 L8 15.8 Z" fill="#0c0c0e"/><path d="M8 1 C11 1 12 3 12 5 H4 C4 3 5 1 8 1 Z" fill="#fafafa" stroke="#0c0c0e" stroke-width="0.6"/><path d="M8 3 V9 M5.6 7 L8 10 L10.4 7" stroke="#0c0c0e" stroke-width="1.8" fill="none"/><path d="M1 8 L8 5 L15 8" stroke="#0c0c0e" stroke-width="1.6" fill="none"/><path d="M3 14.6 L8 17 L13 14.6" stroke="#fafafa" stroke-width="1.4" fill="none"/></svg>
<svg style="left:1856px;top:929px;" width="18" height="12" viewBox="0 0 18 12"><rect x="0.5" y="0.5" width="17" height="11" fill="url(#mk)" stroke="#0c0c0e"/><circle cx="9" cy="6" r="3" fill="#fafafa"/><defs><linearGradient id="mk" x1="0" x2="1"><stop offset="0" stop-color="#8e8f92"/><stop offset="1" stop-color="#0c0c0e"/></linearGradient></defs></svg>
<svg style="left:1876px;top:926px;" width="18" height="18" viewBox="0 0 18 18"><path d="M4 3 V14 M1.6 11.6 L4 15 L6.4 11.6" stroke="#6a6b6e" stroke-width="1.4" fill="none"/><path d="M7 6 C9 2 14 2 16 6 C14 9 12 10 10 14 C8 12 7 9 7 6 Z" fill="#8c8d91" stroke="#6a6b6e" stroke-width="0.8"/></svg>
<svg style="left:1897px;top:926px;" width="16" height="16" viewBox="0 0 16 16"><path d="M2.5 5.5 H13.5 L12.3 15 H3.7 Z" fill="#f0f0f0" stroke="#222" stroke-width="1.1"/><ellipse cx="8" cy="5" rx="6" ry="2" fill="#f4f4f4" stroke="#222" stroke-width="1.1"/><path d="M4 4 C4 0 12 0 12 4" stroke="#222" stroke-width="1.1" fill="none"/><path d="M6 8 V13.6 M8 8 V13.6 M10 8 V13.6" stroke="#555" stroke-width="1"/></svg>
<div style="left:1712px;top:945px;width:203px;height:1px;background:#5e5f62;"></div>
<div style="left:1712px;top:946px;width:203px;height:1px;background:#8c8d91;"></div>
<div style="left:1712px;top:947px;width:203px;height:17px;background:#77787c;"></div>
<div style="left:1712px;top:964px;width:203px;height:1px;background:#85868a;"></div>
<div style="left:1713px;top:948px;width:17px;height:16px;background:#77787c;border-left:1px solid #5a5b5e;border-bottom:1px solid #5a5b5e;border-top:1px solid #8a8b8f;"></div>
<svg style="left:1717px;top:951px;" width="12" height="10" viewBox="0 0 12 10"><path d="M1 1 L4.6 4.6 L1 8.4 Z" fill="#a2a3a6"/><path d="M5.5 1.8 H11 M5.5 4.8 H11 M5.5 7.8 H11" stroke="#a2a3a6" stroke-width="1.5"/></svg>
<div style="left:1730px;top:949px;width:51px;height:17px;background:#7b7c80;border-top:1px solid #505154;border-left:1px solid #505154;border-right:1px solid #505154;border-radius:2px 2px 0 0;"></div>
<div style="left:1731px;top:950px;width:49px;height:1px;background:#8c8d91;"></div>
<div class="t g" style="left:1757px;top:955px;font-size:10px;color:#c4c5c8;transform:scaleX(0.9500);transform-origin:0 0;">情報</div>
<svg style="left:1736px;top:949px;" width="16" height="16" viewBox="0 0 16 16"><circle cx="8" cy="8" r="7.2" fill="#262628"/><circle cx="8" cy="4.6" r="1.8" fill="#fafafa"/><path d="M6 7.6 H9.4 V12 H10.6 V13.4 H5.6 V12 H6.8 V9 H6 Z" fill="#fafafa"/></svg>
<div class="t g" style="left:1714px;top:968px;font-size:12px;color:#fafafa;transform:scaleX(0.7522);transform-origin:0 0;">システム:29%&nbsp;&nbsp; アプリケーション:22%</div>
<div style="left:1714px;top:985px;width:199px;height:1px;background:#6a6b6e;"></div>
<div style="left:1714px;top:986px;width:199px;height:1px;background:#8a8b8f;"></div>
<svg style="left:1713px;top:990px;" width="16" height="16" viewBox="0 0 16 16"><rect x="1.5" y="3.5" width="12" height="11" fill="none" stroke="#0c0c0e" stroke-width="1" stroke-dasharray="1 1.35"/><path d="M1 1.5 H12" stroke="#0c0c0e" stroke-width="1"/><path d="M14.6 1.5 L11 0 V3.2 Z" fill="#0c0c0e"/></svg>
<svg style="left:1713px;top:1006px;" width="16" height="16" viewBox="0 0 16 16"><rect x="3.5" y="1.5" width="11" height="12" fill="none" stroke="#0c0c0e" stroke-width="1" stroke-dasharray="1 1.35"/><path d="M1.5 1 V12" stroke="#0c0c0e" stroke-width="1"/><path d="M1.5 14.6 L0 11 H3.2 Z" fill="#0c0c0e"/></svg>
<svg style="left:1796px;top:990px;" width="16" height="16" viewBox="0 0 16 16"><rect x="1.5" y="3.5" width="12" height="11" fill="none" stroke="#0c0c0e" stroke-width="1" stroke-dasharray="1 1.35"/><path d="M3 1.5 H12" stroke="#0c0c0e" stroke-width="1"/><path d="M14.6 1.5 L11 0 V3.2 Z M0.4 1.5 L4 0 V3.2 Z" fill="#0c0c0e"/></svg>
<svg style="left:1794px;top:1006px;" width="16" height="16" viewBox="0 0 16 16"><rect x="3.5" y="1.5" width="11" height="12" fill="none" stroke="#0c0c0e" stroke-width="1" stroke-dasharray="1 1.35"/><path d="M1.5 3 V12" stroke="#0c0c0e" stroke-width="1.2"/><path d="M1.5 14.6 L0 11 H3.2 Z M1.5 0.4 L0 4 H3.2 Z" fill="#0c0c0e"/></svg>
<svg style="left:1796px;top:1022px;" width="16" height="16" viewBox="0 0 16 16"><rect x="1.5" y="1.5" width="12" height="12" fill="none" stroke="#0c0c0e" stroke-width="1" stroke-dasharray="1 1.35"/><path d="M2 2 L13 13" stroke="#0c0c0e" stroke-width="1.3"/><path d="M14.6 14.6 L10.4 13.4 L13.4 10.4 Z M0.4 0.4 L4.6 1.6 L1.6 4.6 Z" fill="#0c0c0e"/></svg>
<div class="t g" style="left:1730px;top:991px;font-size:11px;color:#e2e2e4;transform:scaleX(0.7688);transform-origin:0 0;">X:</div>
<div class="t g" style="left:1730px;top:1007px;font-size:11px;color:#e2e2e4;transform:scaleX(0.8166);transform-origin:0 0;">Y:</div>
<div class="t g" style="left:1813px;top:991px;font-size:11px;color:#e2e2e4;transform:scaleX(0.7273);transform-origin:0 0;">H:</div>
<div class="t g" style="left:1813px;top:1007px;font-size:11px;color:#e2e2e4;transform:scaleX(0.8000);transform-origin:0 0;">V:</div>
<div class="t g" style="left:1813px;top:1024px;font-size:11px;color:#e2e2e4;transform:scaleX(0.8707);transform-origin:0 0;">L:</div>
</body></html>
